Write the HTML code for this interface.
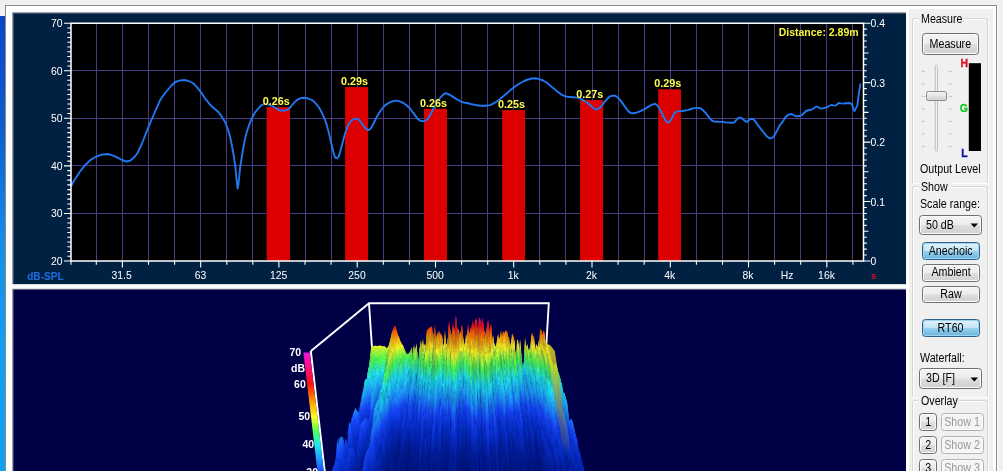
<!DOCTYPE html>
<html><head><meta charset="utf-8"><title>RT60</title>
<style>
html,body{margin:0;padding:0;}
body{width:1003px;height:471px;overflow:hidden;background:#f0f0f0;position:relative;font-family:"Liberation Sans",sans-serif;}
#root{position:absolute;left:0;top:0;width:1003px;height:471px;overflow:hidden;will-change:transform;}
.t{position:absolute;white-space:nowrap;font-size:12px;line-height:12px;color:#000;transform:scaleX(0.89);transform-origin:0 0;}
.btn{position:absolute;box-sizing:border-box;border:1px solid #707070;border-radius:3.5px;background:linear-gradient(#f4f4f4 0%,#ececec 48%,#dedede 52%,#d0d0d0 100%);box-shadow:inset 0 0 0 1px #fbfbfb;text-align:center;font-size:12px;color:#000;}
.btn span{display:inline-block;transform:scaleX(0.89);transform-origin:50% 50%;}
.btn.l span{transform-origin:0 50%;}
.btn.sel{border-color:#2c628b;background:linear-gradient(#e4f3fb 0%,#c4e5f6 48%,#98d1ef 52%,#68b3db 100%);box-shadow:inset 0 0 0 1px #9ed6f0;}
.btn.dis{border-color:#adb2b5;color:#9a9a9a;background:#f4f4f4;box-shadow:inset 0 0 0 1px #fcfcfc;}
.grp{position:absolute;box-sizing:border-box;border:1px solid #d5d5d5;border-radius:3px;box-shadow:inset 1px 1px 0 #fff, 1px 1px 0 #fff;}
.gl{position:absolute;background:#f0f0f0;}
</style></head><body><div id="root">
<svg width="1003" height="471" viewBox="0 0 1003 471" style="position:absolute;left:0;top:0">
<defs>
<linearGradient id="strip" x1="0" y1="0" x2="0" y2="1"><stop offset="0" stop-color="#0b45c6"/><stop offset="0.25" stop-color="#0c5fd2"/><stop offset="0.5" stop-color="#168ee8"/><stop offset="0.72" stop-color="#129ef0"/><stop offset="1" stop-color="#10a2f2"/></linearGradient>
</defs>
<rect x="0" y="0" width="1003" height="471" fill="#f0f0f0"/>
<rect x="0" y="16" width="5.3" height="455" fill="url(#strip)"/>
<rect x="6" y="6" width="990.5" height="470" fill="#ffffff"/>
<rect x="5.5" y="5.5" width="991" height="470" fill="none" stroke="#8a8a8a" stroke-width="1"/>
<rect x="997" y="6" width="1.5" height="470" fill="#fafafa"/>
<rect x="909" y="9" width="84.5" height="470" fill="#f0f0f0"/>
<rect x="12" y="12" width="894" height="273" fill="#b0b3b8"/>
<rect x="12.8" y="12.8" width="893.2" height="272" fill="#566074"/>
<rect x="13.7" y="13.7" width="892.3" height="270.5" fill="#002142"/>
<rect x="12" y="284.2" width="894" height="4.6" fill="#ffffff"/>
<rect x="12" y="284.2" width="894" height="0.6" fill="#d8d8d8"/>
<rect x="12" y="288.6" width="894" height="190" fill="#b0b3b8"/>
<rect x="12.8" y="289.2" width="893.2" height="190" fill="#50507a"/>
<rect x="13.7" y="290" width="892.3" height="190" fill="#000047"/>
<rect x="71.0" y="23.2" width="792.5" height="237.8" fill="#000000"/>
<path d="M96.5 23.2V261.0M122.5 23.2V261.0M148.5 23.2V261.0M174.5 23.2V261.0M200.5 23.2V261.0M226.5 23.2V261.0M252.5 23.2V261.0M278.5 23.2V261.0M305.5 23.2V261.0M331.5 23.2V261.0M357.5 23.2V261.0M383.5 23.2V261.0M409.5 23.2V261.0M435.5 23.2V261.0M461.5 23.2V261.0M487.5 23.2V261.0M513.5 23.2V261.0M539.5 23.2V261.0M565.5 23.2V261.0M592.5 23.2V261.0M618.5 23.2V261.0M644.5 23.2V261.0M670.5 23.2V261.0M696.5 23.2V261.0M722.5 23.2V261.0M748.5 23.2V261.0M774.5 23.2V261.0M800.5 23.2V261.0M826.5 23.2V261.0M852.5 23.2V261.0M71.0 213.5H863.5M71.0 165.5H863.5M71.0 118.5H863.5M71.0 70.5H863.5" stroke="#463c88" stroke-width="1" fill="none"/>
<rect x="266.7" y="107.1" width="23.3" height="153.9" fill="#dc0000"/>
<rect x="345.1" y="87.1" width="23.0" height="173.9" fill="#dc0000"/>
<rect x="424.0" y="108.8" width="23.0" height="152.2" fill="#dc0000"/>
<rect x="502.2" y="110.1" width="22.8" height="150.9" fill="#dc0000"/>
<rect x="580.1" y="100.1" width="23.0" height="160.9" fill="#dc0000"/>
<rect x="658.2" y="89.3" width="22.8" height="171.7" fill="#dc0000"/>
<path d="M71.5 185.5 L73.5 181.5 L76.3 177.2 L80.0 171.5 L85.0 165.2 L90.0 160.4 L95.0 157.2 L101.0 154.8 L107.6 154.0 L112.5 155.3 L117.6 157.7 L122.0 160.0 L126.4 161.5 L130.0 160.7 L134.0 157.6 L137.7 152.7 L142.0 143.5 L147.7 128.9 L154.0 114.0 L160.2 100.0 L164.0 94.3 L167.7 90.0 L171.5 85.5 L175.2 82.0 L179.5 80.6 L184.0 80.0 L188.5 81.0 L192.8 83.0 L196.5 86.7 L200.3 91.3 L205.0 98.3 L210.3 105.0 L214.0 108.3 L217.8 111.4 L221.5 116.2 L225.3 122.6 L228.0 129.5 L230.3 137.7 L232.8 150.0 L235.3 166.0 L236.6 180.0 L237.6 188.5 L238.6 183.0 L240.2 167.0 L242.9 150.0 L244.7 140.5 L246.6 132.6 L249.0 125.2 L251.6 118.9 L254.6 113.3 L257.9 108.8 L261.0 105.6 L264.2 103.8 L268.5 104.5 L272.9 106.3 L276.6 108.8 L280.4 110.6 L284.2 110.6 L288.0 109.6 L291.0 106.5 L294.2 102.6 L297.4 99.8 L300.5 98.1 L304.0 97.8 L307.5 98.3 L311.5 99.8 L315.0 102.6 L319.0 107.5 L322.5 113.9 L326.0 122.5 L328.8 132.6 L331.5 144.0 L333.8 153.9 L335.3 157.6 L336.8 158.4 L338.8 156.4 L340.7 150.0 L342.6 142.7 L345.0 133.8 L347.6 126.4 L350.0 122.3 L352.6 119.6 L355.3 118.6 L358.1 118.9 L361.0 122.3 L363.9 126.4 L366.0 128.9 L368.1 130.1 L369.8 129.5 L371.4 127.6 L374.5 121.5 L377.7 115.1 L381.5 109.5 L385.2 105.1 L390.0 102.2 L395.2 100.6 L399.0 101.1 L402.7 102.6 L406.5 105.3 L410.2 108.8 L414.0 113.9 L417.7 118.9 L420.2 120.7 L422.7 121.4 L425.3 120.6 L427.8 118.9 L431.0 113.5 L434.0 107.6 L437.2 102.3 L440.3 97.6 L443.0 94.8 L445.3 93.3 L447.8 93.8 L450.3 95.1 L455.3 98.4 L460.3 101.3 L465.3 102.8 L470.3 103.8 L475.3 105.0 L480.4 105.8 L485.4 105.8 L490.4 105.1 L495.4 102.4 L500.4 98.8 L505.4 94.5 L510.4 90.1 L515.4 86.3 L520.4 83.0 L524.2 81.0 L528.0 79.5 L531.8 78.5 L535.5 78.3 L539.3 79.1 L543.0 80.5 L547.0 82.8 L552.5 87.6 L557.0 91.3 L561.3 94.6 L564.5 96.0 L567.6 96.8 L572.6 97.2 L577.6 97.6 L581.4 99.1 L585.1 101.3 L588.3 103.7 L591.4 106.3 L593.5 108.1 L595.6 109.3 L597.9 108.9 L600.1 107.6 L602.6 104.6 L605.1 101.3 L607.6 98.5 L610.1 96.3 L612.6 95.6 L615.2 95.8 L617.7 97.5 L620.2 100.1 L623.3 104.4 L626.4 108.8 L628.6 111.4 L630.7 113.1 L633.5 113.2 L636.4 112.6 L639.5 111.5 L642.7 110.1 L646.5 107.9 L650.2 105.6 L652.7 104.4 L655.2 103.8 L657.1 105.2 L659.0 107.6 L661.5 112.5 L664.0 117.6 L666.2 121.2 L668.3 122.6 L669.9 121.5 L671.5 118.9 L673.4 115.0 L675.3 112.1 L677.8 111.4 L680.3 111.1 L684.0 110.7 L687.8 110.1 L691.0 109.0 L694.1 108.1 L697.2 107.9 L700.3 108.1 L702.8 110.0 L705.3 112.6 L707.8 115.7 L710.3 118.9 L712.2 120.7 L714.1 121.6 L718.5 121.8 L722.9 121.9 L726.0 122.4 L729.1 122.6 L731.6 122.8 L734.1 122.6 L736.0 120.4 L737.9 118.4 L739.2 117.7 L740.4 117.6 L741.9 118.4 L743.4 119.6 L745.0 121.2 L746.7 121.9 L748.3 120.8 L749.9 119.4 L751.6 119.0 L753.4 119.1 L755.6 121.8 L757.9 125.1 L761.0 129.2 L764.2 133.1 L766.7 136.2 L769.2 138.2 L771.3 138.3 L773.0 137.2 L774.9 134.7 L778.0 128.9 L779.3 125.8 L783.0 121.4 L785.2 117.5 L788.0 115.0 L791.2 113.9 L793.5 115.0 L795.6 116.3 L798.5 116.0 L801.6 115.4 L804.0 113.0 L806.0 111.0 L809.0 110.0 L812.0 109.5 L814.2 108.0 L816.4 106.5 L818.6 107.5 L820.9 108.6 L823.8 108.1 L826.8 107.4 L829.0 106.0 L831.3 105.0 L833.5 105.4 L835.7 105.6 L837.2 104.2 L838.7 103.0 L841.0 103.4 L843.2 103.6 L846.0 103.2 L849.1 103.0 L850.6 103.5 L852.1 104.4 L853.3 108.0 L854.4 111.0 L855.9 108.5 L857.4 105.0 L858.2 99.0 L858.9 93.2 L859.7 88.5 L860.4 84.2" stroke="#1f78f0" stroke-width="1.9" fill="none" stroke-linejoin="round" stroke-linecap="round"/>
<path d="M71.0 23.2H863.5V261.0H71.0Z" stroke="#ffffff" stroke-width="1.5" fill="none"/>
<path d="M64 261.00H71.0M67.3 256.24H71.0M67.3 251.49H71.0M67.3 246.73H71.0M67.3 241.98H71.0M67.3 237.22H71.0M67.3 232.46H71.0M67.3 227.71H71.0M67.3 222.95H71.0M67.3 218.20H71.0M64 213.44H71.0M67.3 208.68H71.0M67.3 203.93H71.0M67.3 199.17H71.0M67.3 194.42H71.0M67.3 189.66H71.0M67.3 184.90H71.0M67.3 180.15H71.0M67.3 175.39H71.0M67.3 170.64H71.0M64 165.88H71.0M67.3 161.12H71.0M67.3 156.37H71.0M67.3 151.61H71.0M67.3 146.86H71.0M67.3 142.10H71.0M67.3 137.34H71.0M67.3 132.59H71.0M67.3 127.83H71.0M67.3 123.08H71.0M64 118.32H71.0M67.3 113.56H71.0M67.3 108.81H71.0M67.3 104.05H71.0M67.3 99.30H71.0M67.3 94.54H71.0M67.3 89.78H71.0M67.3 85.03H71.0M67.3 80.27H71.0M67.3 75.52H71.0M64 70.76H71.0M67.3 66.00H71.0M67.3 61.25H71.0M67.3 56.49H71.0M67.3 51.74H71.0M67.3 46.98H71.0M67.3 42.22H71.0M67.3 37.47H71.0M67.3 32.71H71.0M67.3 27.96H71.0M64 23.20H71.0M863.5 261.00H870.4M863.5 255.06H866.8M863.5 249.11H866.8M863.5 243.16H866.8M863.5 237.22H866.8M863.5 231.28H868.5M863.5 225.33H866.8M863.5 219.38H866.8M863.5 213.44H866.8M863.5 207.50H866.8M863.5 201.55H870.4M863.5 195.60H866.8M863.5 189.66H866.8M863.5 183.72H866.8M863.5 177.77H866.8M863.5 171.82H868.5M863.5 165.88H866.8M863.5 159.94H866.8M863.5 153.99H866.8M863.5 148.05H866.8M863.5 142.10H870.4M863.5 136.16H866.8M863.5 130.21H866.8M863.5 124.26H866.8M863.5 118.32H866.8M863.5 112.38H868.5M863.5 106.43H866.8M863.5 100.48H866.8M863.5 94.54H866.8M863.5 88.59H866.8M863.5 82.65H870.4M863.5 76.70H866.8M863.5 70.76H866.8M863.5 64.81H866.8M863.5 58.87H866.8M863.5 52.93H868.5M863.5 46.98H866.8M863.5 41.03H866.8M863.5 35.09H866.8M863.5 29.14H866.8M863.5 23.20H870.4M71.0 261.0V264.8M96.3 261.0V264.8M122.4 261.0V267.6M148.5 261.0V264.8M174.6 261.0V264.8M200.7 261.0V267.6M226.8 261.0V264.8M252.8 261.0V264.8M278.9 261.0V267.6M305.0 261.0V264.8M331.1 261.0V264.8M357.2 261.0V267.6M383.3 261.0V264.8M409.4 261.0V264.8M435.5 261.0V267.6M461.6 261.0V264.8M487.7 261.0V264.8M513.7 261.0V267.6M539.8 261.0V264.8M565.9 261.0V264.8M592.0 261.0V267.6M618.1 261.0V264.8M644.2 261.0V264.8M670.3 261.0V267.6M696.4 261.0V264.8M722.5 261.0V264.8M748.5 261.0V267.6M774.6 261.0V264.8M800.7 261.0V264.8M826.8 261.0V267.6M852.9 261.0V264.8" stroke="#ffffff" stroke-width="1.1" fill="none"/>
<g font-family="Liberation Sans, sans-serif" font-size="10.4px" fill="#ffffff">
<text x="62.5" y="264.9" text-anchor="end">20</text>
<text x="62.5" y="217.3" text-anchor="end">30</text>
<text x="62.5" y="169.8" text-anchor="end">40</text>
<text x="62.5" y="122.2" text-anchor="end">50</text>
<text x="62.5" y="74.7" text-anchor="end">60</text>
<text x="62.5" y="27.1" text-anchor="end">70</text>
<text x="870.6" y="264.9">0</text>
<text x="870.6" y="205.5">0.1</text>
<text x="870.6" y="146.0">0.2</text>
<text x="870.6" y="86.5">0.3</text>
<text x="870.6" y="27.1">0.4</text>
<text x="121.6" y="279.2" text-anchor="middle">31.5</text>
<text x="200.5" y="279.2" text-anchor="middle">63</text>
<text x="278.6" y="279.2" text-anchor="middle">125</text>
<text x="357" y="279.2" text-anchor="middle">250</text>
<text x="435.2" y="279.2" text-anchor="middle">500</text>
<text x="513.3" y="279.2" text-anchor="middle">1k</text>
<text x="591.4" y="279.2" text-anchor="middle">2k</text>
<text x="669.8" y="279.2" text-anchor="middle">4k</text>
<text x="748" y="279.2" text-anchor="middle">8k</text>
<text x="787" y="279.2" text-anchor="middle">Hz</text>
<text x="826.5" y="279.2" text-anchor="middle">16k</text>
</g>
<g font-family="Liberation Sans, sans-serif" font-size="10.5px" font-weight="bold">
<text x="27.2" y="279.8" fill="#1f6fe0" font-size="10.1px">dB-SPL</text>
<text x="871" y="278.8" fill="#d81226" font-size="9.8px">s</text>
<text x="858.6" y="36" fill="#f5f53c" text-anchor="end" font-size="10.5px">Distance: 2.89m</text>
<text x="276.3" y="105.2" fill="#ffff55" text-anchor="middle" font-size="10.8px" stroke="#000" stroke-width="0.6" paint-order="stroke">0.26s</text>
<text x="354.5" y="85.2" fill="#ffff55" text-anchor="middle" font-size="10.8px" stroke="#000" stroke-width="0.6" paint-order="stroke">0.29s</text>
<text x="433.6" y="107.2" fill="#ffff55" text-anchor="middle" font-size="10.8px" stroke="#000" stroke-width="0.6" paint-order="stroke">0.26s</text>
<text x="511.4" y="108.3" fill="#ffff55" text-anchor="middle" font-size="10.8px" stroke="#000" stroke-width="0.6" paint-order="stroke">0.25s</text>
<text x="589.8" y="98.2" fill="#ffff55" text-anchor="middle" font-size="10.8px" stroke="#000" stroke-width="0.6" paint-order="stroke">0.27s</text>
<text x="667.8" y="87.2" fill="#ffff55" text-anchor="middle" font-size="10.8px" stroke="#000" stroke-width="0.6" paint-order="stroke">0.29s</text>
</g>
<path d="M311 351L369 303.2H548.8L546.3 345M369 303.2L372 348" stroke="#ffffff" stroke-width="1.9" fill="none" stroke-linejoin="miter"/>
<defs>
<linearGradient id="lv" gradientUnits="userSpaceOnUse" x1="0" y1="0" x2="0" y2="1">
<stop offset="0.0000" stop-color="#c020f0"/>
<stop offset="0.0667" stop-color="#e020e0"/>
<stop offset="0.1333" stop-color="#ff1080"/>
<stop offset="0.2000" stop-color="#ff1010"/>
<stop offset="0.2667" stop-color="#ff9000"/>
<stop offset="0.3333" stop-color="#ffff20"/>
<stop offset="0.4000" stop-color="#50ff50"/>
<stop offset="0.4667" stop-color="#20e8f0"/>
<stop offset="0.5333" stop-color="#20a0ff"/>
<stop offset="0.6000" stop-color="#1848ff"/>
<stop offset="0.6667" stop-color="#0830d0"/>
<stop offset="0.7333" stop-color="#0420a0"/>
<stop offset="0.8400" stop-color="#021478"/>
<stop offset="1.0000" stop-color="#010c60"/>
</linearGradient>
<linearGradient id="g0" href="#lv" y1="292.4" y2="451.8"/>
<linearGradient id="g1" href="#lv" y1="292.5" y2="452.1"/>
<linearGradient id="g2" href="#lv" y1="292.6" y2="452.6"/>
<linearGradient id="g3" href="#lv" y1="292.7" y2="453.2"/>
<linearGradient id="g4" href="#lv" y1="292.9" y2="453.7"/>
<linearGradient id="g5" href="#lv" y1="293.0" y2="454.3"/>
<linearGradient id="g6" href="#lv" y1="293.2" y2="454.9"/>
<linearGradient id="g7" href="#lv" y1="293.4" y2="455.5"/>
<linearGradient id="g8" href="#lv" y1="293.5" y2="456.2"/>
<linearGradient id="g9" href="#lv" y1="293.7" y2="456.8"/>
<linearGradient id="g10" href="#lv" y1="293.9" y2="457.5"/>
<linearGradient id="g11" href="#lv" y1="294.1" y2="458.2"/>
<linearGradient id="g12" href="#lv" y1="294.3" y2="458.9"/>
<linearGradient id="g13" href="#lv" y1="294.4" y2="459.6"/>
<linearGradient id="g14" href="#lv" y1="294.6" y2="460.3"/>
<linearGradient id="g15" href="#lv" y1="294.8" y2="461.0"/>
<linearGradient id="g16" href="#lv" y1="295.0" y2="461.8"/>
<linearGradient id="g17" href="#lv" y1="295.2" y2="462.5"/>
<linearGradient id="g18" href="#lv" y1="295.4" y2="463.3"/>
<linearGradient id="g19" href="#lv" y1="295.6" y2="464.1"/>
<linearGradient id="g20" href="#lv" y1="295.8" y2="464.9"/>
<linearGradient id="g21" href="#lv" y1="296.1" y2="465.7"/>
<linearGradient id="g22" href="#lv" y1="296.3" y2="466.5"/>
<linearGradient id="g23" href="#lv" y1="296.5" y2="467.3"/>
<linearGradient id="g24" href="#lv" y1="296.7" y2="468.2"/>
<linearGradient id="g25" href="#lv" y1="296.9" y2="469.0"/>
<linearGradient id="g26" href="#lv" y1="297.2" y2="469.9"/>
<linearGradient id="g27" href="#lv" y1="297.4" y2="470.8"/>
<linearGradient id="g28" href="#lv" y1="297.6" y2="471.6"/>
<linearGradient id="g29" href="#lv" y1="297.9" y2="472.5"/>
<linearGradient id="g30" href="#lv" y1="298.1" y2="473.5"/>
<linearGradient id="g31" href="#lv" y1="298.4" y2="474.4"/>
<linearGradient id="g32" href="#lv" y1="298.6" y2="475.3"/>
<linearGradient id="g33" href="#lv" y1="298.9" y2="476.3"/>
<linearGradient id="g34" href="#lv" y1="299.1" y2="477.2"/>
<linearGradient id="g35" href="#lv" y1="299.4" y2="478.2"/>
<linearGradient id="g36" href="#lv" y1="299.6" y2="479.2"/>
<linearGradient id="g37" href="#lv" y1="299.9" y2="480.2"/>
<linearGradient id="g38" href="#lv" y1="300.2" y2="481.2"/>
<linearGradient id="g39" href="#lv" y1="300.4" y2="482.2"/>
<linearGradient id="g40" href="#lv" y1="300.7" y2="483.2"/>
<linearGradient id="g41" href="#lv" y1="301.0" y2="484.2"/>
<linearGradient id="g42" href="#lv" y1="301.3" y2="485.3"/>
<linearGradient id="g43" href="#lv" y1="301.5" y2="486.4"/>
<linearGradient id="g44" href="#lv" y1="301.8" y2="487.4"/>
<linearGradient id="g45" href="#lv" y1="302.1" y2="488.5"/>
<linearGradient id="g46" href="#lv" y1="302.4" y2="489.6"/>
<linearGradient id="g47" href="#lv" y1="302.7" y2="490.8"/>
<linearGradient id="g48" href="#lv" y1="303.0" y2="491.9"/>
<linearGradient id="g49" href="#lv" y1="303.3" y2="493.0"/>
<linearGradient id="g50" href="#lv" y1="303.6" y2="494.2"/>
<linearGradient id="g51" href="#lv" y1="303.9" y2="495.4"/>
<linearGradient id="g52" href="#lv" y1="304.2" y2="496.6"/>
<linearGradient id="g53" href="#lv" y1="304.6" y2="497.8"/>
<linearGradient id="g54" href="#lv" y1="304.9" y2="499.0"/>
<linearGradient id="g55" href="#lv" y1="305.2" y2="500.2"/>
<linearGradient id="g56" href="#lv" y1="305.5" y2="501.5"/>
<linearGradient id="g57" href="#lv" y1="305.9" y2="502.7"/>
<linearGradient id="g58" href="#lv" y1="306.2" y2="504.0"/>
<linearGradient id="g59" href="#lv" y1="306.6" y2="505.3"/>
<linearGradient id="g60" href="#lv" y1="306.9" y2="506.6"/>
<linearGradient id="g61" href="#lv" y1="307.2" y2="507.9"/>
<linearGradient id="g62" href="#lv" y1="307.6" y2="509.3"/>
<linearGradient id="g63" href="#lv" y1="308.0" y2="510.6"/>
<linearGradient id="g64" href="#lv" y1="308.3" y2="512.0"/>
<linearGradient id="g65" href="#lv" y1="308.7" y2="513.4"/>
<linearGradient id="g66" href="#lv" y1="309.1" y2="514.8"/>
<linearGradient id="g67" href="#lv" y1="309.4" y2="516.2"/>
<linearGradient id="g68" href="#lv" y1="309.8" y2="517.7"/>
<linearGradient id="g69" href="#lv" y1="310.2" y2="519.2"/>
<linearGradient id="g70" href="#lv" y1="310.6" y2="520.6"/>
<linearGradient id="g71" href="#lv" y1="311.0" y2="522.1"/>
<linearGradient id="g72" href="#lv" y1="311.4" y2="523.7"/>
<linearGradient id="g73" href="#lv" y1="311.8" y2="525.2"/>
<linearGradient id="g74" href="#lv" y1="312.2" y2="526.8"/>
<linearGradient id="g75" href="#lv" y1="312.6" y2="528.3"/>
<linearGradient id="g76" href="#lv" y1="313.1" y2="529.9"/>
<linearGradient id="g77" href="#lv" y1="313.5" y2="531.6"/>
<linearGradient id="g78" href="#lv" y1="313.9" y2="533.2"/>
<linearGradient id="g79" href="#lv" y1="314.4" y2="534.9"/>
<linearGradient id="g80" href="#lv" y1="314.8" y2="536.5"/>
<linearGradient id="g81" href="#lv" y1="315.3" y2="538.3"/>
<linearGradient id="g82" href="#lv" y1="315.7" y2="540.0"/>
<linearGradient id="g83" href="#lv" y1="316.2" y2="541.7"/>
<linearGradient id="g84" href="#lv" y1="316.7" y2="543.5"/>
<linearGradient id="g85" href="#lv" y1="317.1" y2="545.3"/>
<linearGradient id="g86" href="#lv" y1="317.6" y2="547.1"/>
<linearGradient id="g87" href="#lv" y1="318.1" y2="549.0"/>
<linearGradient id="g88" href="#lv" y1="318.6" y2="550.9"/>
<linearGradient id="g89" href="#lv" y1="319.1" y2="552.8"/>
<linearGradient id="g90" href="#lv" y1="319.6" y2="554.7"/>
<linearGradient id="g91" href="#lv" y1="320.1" y2="556.6"/>
<linearGradient id="g92" href="#lv" y1="320.7" y2="558.6"/>
<linearGradient id="g93" href="#lv" y1="321.2" y2="560.6"/>
<linearGradient id="g94" href="#lv" y1="321.7" y2="562.7"/>
<linearGradient id="g95" href="#lv" y1="322.3" y2="564.7"/>
<linearGradient id="g96" href="#lv" y1="322.8" y2="566.8"/>
<linearGradient id="g97" href="#lv" y1="323.4" y2="569.0"/>
<linearGradient id="g98" href="#lv" y1="324.0" y2="571.1"/>
<linearGradient id="g99" href="#lv" y1="324.5" y2="573.3"/>
<linearGradient id="g100" href="#lv" y1="325.1" y2="575.5"/>
<linearGradient id="g101" href="#lv" y1="325.7" y2="577.8"/>
<linearGradient id="g102" href="#lv" y1="326.3" y2="580.1"/>
<linearGradient id="g103" href="#lv" y1="327.0" y2="582.4"/>
<linearGradient id="g104" href="#lv" y1="327.6" y2="584.7"/>
</defs>
<g stroke="#000850" stroke-opacity="0.11" stroke-width="0.7" stroke-linejoin="round">
<path fill="url(#g0)" transform="translate(459) scale(1.0000 1)" d="M-88 480V346.8l 1-.1 1-.4 1-.4 1-.3 1 .2 1 .3 1 0 1-.6 1 0 1 .3 1 .2 1 .2 1 .1 1 0 1 1.5 1 0 1-.7 1-2.6 1-3.9 1-4.1 1-4.5 1-2.6 1-2.3 1-2 1 3.1 1 2.2 1 4.6 1 1.4 1 3.8 1 1.8 1 2.4 1 .6 1 2.8 1 2.3 1 2.7 1 1.5 1-.7 1-.4 1-1.7 1-2.1 1-2.4 1 16 1-19.2 1 7.6 1 6.1 1-7.9 1 16.6 1-8.9 1-6.1 1-11.4 1 12.7 1-13 1 11.7 1-5 1 .3 1-16.8 1 .1 1-2.2 1 0 1-.8 1 .3 1 10.7 1-3.8 1-10.5 1 17.8 1-8.2 1 1 1-3.6 1 13.3 1-6.5 1-3 1 14.1 1-5.1 1-12.4 1 13.3 1-.1 1-3.3 1-19 1 8 1 5.6 1-.6 1-6.1 1 3.1 1-.3 1-10.8 1 9.9 1-1.2 1 .6 1 5.7 1-2.2 1-10.3 1 13 1 7.7 1 2.9 1-13.9 1 3.1 1-5.8 1 3.1 1-1.6 1-.8 1-4.1 1-7.4 1 9.7 1-.4 1-11.1 1 5 1 15 1-21.2 1 7.6 1 7.9 1-13.8 1 6.5 1 4.9 1 2.4 1 3.1 1 2.4 1-17.7 1 11.5 1-4.9 1-3 1 19.4 1-8.1 1 8.4 1 3.1 1-.2 1-6.1 1-6 1 10.2 1-7.1 1-5.4 1 5.3 1-6.2 1 3.2 1-.8 1-3 1 2.9 1 4.8 1-1.6 1 11.4 1-4.4 1-9.9 1 2.1 1 2.4 1 12.7 1 10.1 1-20.5 1-.4 1 15.8 1-16.5 1 11.5 1 21.5 1-5 1-5.9 1-24 1 12 1-2.4 1 4.2 1-3.5 1 3.1 1-10.1 1-8 1 4.1 1 13.2 1 1.5 1-7.5 1 2.3 1 .6 1 4.5 1-22.7 1 1.4 1 15.2 1-13.4 1-.5 1 30.2 1-10.6 1-.8 1-6.5 1 20.8V480z"/>
<path fill="url(#g1)" transform="translate(459) scale(1.0018 1)" d="M-88 480V348.5l 1-.4 1-.7 1-.5 1-.2 1 .2 1 .8 1 1 1-.7 1 .4 1-1.1 1 0 1-.1 1-.1 1 .1 1 1.4 1 .4 1-.4 1-2.6 1-4.2 1-4.3 1-4.6 1-2.7 1-2.1 1-1.4 1 2.4 1 3.1 1 4 1 1.1 1 3.2 1 2 1 2.1 1 .7 1 3.4 1 2.4 1 2.4 1 1.4 1-.5 1 .2 1-1.8 1-2.1 1-1 1 10.4 1-14.7 1 9.5 1-7.3 1 .6 1 16.7 1-7.7 1-4.4 1-11.7 1 10.1 1-13.3 1 11.5 1-3.1 1 1.8 1-17.7 1-1 1-1.1 1 .8 1-.5 1-3.2 1 10.9 1-4.4 1-5.6 1 15.1 1-6.3 1 0 1 6.5 1 7.8 1-12.4 1-2.6 1 11.4 1-1.9 1-14.6 1 18.4 1-3.7 1-4.2 1-15.8 1 5 1 7.1 1-3.5 1-10.9 1 9.4 1-3.8 1-12.3 1 13.3 1 4.2 1 4.4 1-2.4 1-2.3 1-8.2 1 11.5 1 10.9 1 .8 1-11.2 1-.1 1-7.2 1 4.2 1-1.4 1-3.3 1 1.1 1-7.8 1 10.4 1-6.2 1-7.3 1 4.2 1 15.1 1-20.6 1 1.7 1 13.7 1-14.8 1 14.8 1 1.3 1 .6 1-2.2 1-6.8 1-6 1 11.9 1-3.1 1-4.2 1 21 1-10 1 7.7 1 4.4 1-1.6 1-1.1 1-11.2 1 8.1 1-4.9 1-6.6 1 21.4 1-15.8 1-1.9 1-2.3 1-.5 1 .8 1 5.3 1 3.5 1 6.1 1-4 1-5.8 1 2 1-.2 1 15.6 1 13.3 1-26.6 1-.3 1 15.8 1-16.6 1 10.7 1 23.9 1-7.3 1-5.3 1-23.7 1 11 1-4.6 1 5.7 1 2.3 1 2.1 1-17.2 1-4 1 4.4 1 14.4 1 2.3 1-7.5 1-.4 1 .4 1 8.9 1-26.8 1 3.6 1 13 1-14 1 0 1 26 1-9.7 1-1.2 1 .6 1 12.1V480z"/>
<path fill="url(#g2)" transform="translate(459) scale(1.0041 1)" d="M-88 480V350.4l 1-.6 1-1.1 1-.7 1-.4 1 .2 1 .4 1 .1 1 .1 1 0 1 0 1 .1 1-.2 1 0 1 .2 1 1.1 1 .5 1-.3 1-2.3 1-4 1-4.6 1-5 1-3.4 1-2.2 1-2.1 1 4.6 1 2.9 1 4.1 1 1 1 3.3 1 2 1 2 1 .7 1 3.4 1 2.4 1 2.4 1 .6 1-.7 1 .1 1 1 1-4 1-.6 1 7.4 1-11.7 1 7.2 1 4.4 1-10.5 1 15 1-.2 1-11.3 1-11.7 1 13.6 1-12.4 1 8.4 1-5.5 1 3.3 1-16.1 1-1.1 1-1 1 4.7 1 12 1-16.2 1 11 1-6 1-4.4 1 10.8 1-6 1 .4 1 3.6 1-2 1 1.8 1-3 1 18.2 1-7.1 1-13.2 1 11.7 1-2.4 1-4.5 1-15.6 1 4.6 1 9.7 1-3.7 1-7.4 1 5.3 1-3.8 1-10.2 1 10.5 1-1.1 1 11.4 1-4.9 1-3.1 1-5.4 1 12.6 1 6.5 1 1.6 1-9 1 .7 1-9.4 1 3.3 1 3.7 1-11 1 5.8 1-8.8 1 9 1-7.4 1-3.2 1 5.6 1 16.3 1-23.2 1 .9 1 23.9 1-26.1 1 14.8 1 3.9 1-.7 1-1.8 1-7.3 1-5.4 1 11.3 1-.5 1-6.1 1 22.3 1-6 1 2.1 1 4 1 1.7 1-8.4 1-6.1 1 4.5 1-2.6 1-1.4 1 15.6 1-15.1 1-.3 1-2 1-1.6 1 .3 1 5.2 1 10.1 1 1.4 1-1.2 1-5.7 1 .1 1-2.2 1 13.5 1 9.4 1-20.9 1 2.3 1 18.6 1-19.6 1 12.6 1 24.4 1-12.8 1-5.1 1-23.5 1 8.9 1-3.4 1 6.5 1 1.9 1 3.6 1-15.5 1-5.5 1 1.5 1 16.9 1 5 1-7.9 1-.6 1-2.2 1 7.4 1-25.6 1 1.4 1 15.3 1-15.3 1 1.2 1 24.7 1-4.7 1-6.6 1 8.5 1 2.8V480z"/>
<path fill="url(#g3)" transform="translate(459) scale(1.0065 1)" d="M-88 480V352.8l 1-1 1-1.6 1-.9 1-.6 1 .1 1 .3 1 .2 1 .3 1 .3 1 0 1-.2 1-.4 1-.1 1 .5 1 1.7 1 1 1-.3 1-2.8 1-4.5 1-4.9 1-5 1-3.3 1-2.3 1-.9 1 3.8 1 4.6 1 3.7 1 .7 1 3.1 1 2 1 1.6 1 .3 1 3.1 1 2.5 1 2.9 1 1.1 1-.7 1-.6 1-1.8 1-2.6 1-2.5 1 7.1 1-11.3 1 10.7 1-6 1-1.7 1 10.4 1-1.5 1-5.5 1-10.4 1 13.1 1-8.6 1 5.5 1-5.4 1 .7 1-14 1-1.5 1-1.1 1 6.5 1 5.9 1-10.6 1 9.9 1-7.3 1-5 1 13.1 1-4.5 1-4.6 1 3.2 1-3.9 1 5.5 1-3.2 1 20.6 1-7.1 1-9.2 1 6.9 1-1.5 1-5.7 1-17.9 1 5.4 1 11.5 1-.9 1-12.9 1 7.6 1-2.4 1-13.1 1 12.2 1-.4 1 8.6 1 1.4 1-4.7 1-7 1 12.8 1 2.7 1 3.8 1-9 1 2.6 1-11 1 3.1 1 1.6 1-6.1 1 6.7 1-9.1 1 6.2 1-7.4 1-3.1 1 1.7 1 19.8 1-22.8 1 0 1 10.6 1-12 1 19.4 1 .2 1-1.5 1-4.3 1-5.8 1-4.4 1 10.1 1-3.1 1-2.3 1 19.1 1-.5 1 2.7 1 4.1 1-2.2 1-5.7 1-1.5 1 2.1 1-9.2 1-.9 1 8.9 1-7.5 1 .8 1-1.5 1-2.1 1 .4 1 6.4 1 13.7 1-.2 1-1.6 1-11.6 1-1.3 1 2 1 17.6 1 6.4 1-21.7 1 .4 1 19.2 1-17.7 1 15.8 1 23.6 1-14.6 1-7 1-22.9 1 13.4 1-4.8 1 3.9 1-.1 1 4.5 1-13.7 1-6.1 1-.9 1 18.7 1 6.8 1-7.8 1-3.5 1-3.2 1 6 1-22.4 1 .3 1 16.6 1-14.6 1 .3 1 23 1-5.7 1 1 1 6.6 1 3.1V480z"/>
<path fill="url(#g4)" transform="translate(459) scale(1.0091 1)" d="M-88 480V354.6l 1-1.3 1-2 1-1 1-.6 1 .3 1 1 1 .1 1 .1 1-.1 1-.3 1-.6 1-.5 1 0 1 .9 1 1.7 1 1.7 1 .2 1-2.7 1-4.6 1-4.9 1-5 1-3 1-3.2 1-2.1 1 5.5 1 5.3 1 3.6 1-.4 1 2.7 1 2.4 1 1.7 1 .9 1 3.3 1 3.1 1 1.9 1 .6 1-1 1 .6 1-4 1-1.2 1-3.7 1 11.6 1-11.5 1 3.7 1-3.5 1-6.3 1 16.9 1-1.5 1-8.5 1-9.8 1 12.7 1-5.7 1 4.6 1-8.6 1 6.6 1-10.8 1-7.7 1-1.1 1 2.6 1 14.4 1-13.8 1 9.7 1-3.4 1-11.6 1 15.4 1-5 1-8 1 4 1-3.6 1 7.3 1-4.6 1 11.1 1 1.3 1-4.9 1 4.4 1 .4 1-8.6 1-12.3 1 2 1 10.1 1-.8 1-12.1 1 9.2 1-1.6 1-13.7 1 15.3 1-1.8 1 7.4 1-.1 1-5.1 1-7.7 1 10.2 1 5.9 1 3.5 1-6.7 1 1 1-17.3 1 8.7 1 1.9 1-2.4 1 1.2 1-6.7 1 6.9 1-14.2 1 2.3 1 5.6 1 16.7 1-23.5 1-.4 1 23.4 1-24.5 1 4.2 1 17.6 1 .9 1-5.4 1-10.4 1-3.2 1 12.2 1-3.7 1-3.9 1 18.1 1 .3 1 6.9 1 .2 1-5.2 1 3.1 1-7.6 1-.2 1-7.8 1 4.1 1 6 1-6.7 1 .1 1-.3 1-4.3 1 .3 1 7.9 1 2.7 1 9.3 1-.3 1-11.3 1-3.8 1 4.6 1 27 1-4.2 1-22.1 1 .5 1 14.5 1-8.8 1 10.5 1 23.6 1-13.8 1-3.9 1-26 1 12.1 1-1.2 1 2.4 1-.9 1 6.1 1-13.1 1-7.7 1 1 1 21.1 1 5.8 1-13.4 1-4.2 1-2.3 1 6.8 1-21.8 1 .2 1 16.1 1-11.7 1-1 1 24.4 1-8 1 4.6 1 3 1-.1V480z"/>
<path fill="url(#g5)" transform="translate(459) scale(1.0117 1)" d="M-88 480V357.5l 1-1.7 1-2.7 1-1.5 1-1 1 .2 1 1.2 1 .5 1-.3 1 0 1-.2 1-.4 1-.4 1 0 1 .9 1 1.8 1 1.9 1 .6 1-2.3 1-4.4 1-4.7 1-5 1-3 1-2.7 1-.5 1 3.2 1 3.9 1 2.7 1-.1 1 2.7 1 2.6 1 1.4 1 .9 1 3.2 1 2.6 1 2.5 1 .9 1-.6 1 1.1 1-3.8 1-1.4 1-5.5 1 15.4 1-16.8 1 4.5 1-3.8 1-6.4 1 16.6 1 6.2 1-14.2 1-9.3 1 9.9 1-2.4 1 3.3 1-9.8 1 8.1 1-2 1-14.5 1-2.7 1 6.9 1 9.5 1-15 1 9.8 1-2.3 1-11.1 1 16.3 1-3.6 1-8.4 1 .8 1-4.5 1 4.5 1 .9 1 12.1 1 .3 1-6.8 1 11.2 1-7.7 1-6.9 1-11.1 1 1.5 1 9.8 1-1 1-8.3 1 7.6 1-1.1 1-17.1 1 13 1 1.1 1 9.4 1 .1 1-7.1 1-6.8 1 11 1 5.1 1 3.2 1-8.9 1-3.1 1-11.9 1 10 1 4.4 1-3.4 1-.6 1-6.3 1 6.4 1-11.3 1-.4 1 10.4 1 14.8 1-26.4 1-.4 1 18.6 1-19.7 1 4.1 1 17.2 1-1.2 1-4.1 1-9.5 1-2.9 1 10.7 1-.1 1-5.1 1 15.8 1 1.6 1 6.6 1-1.4 1-5 1 1.8 1-1.1 1-3.9 1-3.8 1 .1 1 5 1-3 1-1 1 2.4 1-8.2 1 .3 1 11.1 1 1.1 1 4.8 1 1.3 1-9.7 1-5.8 1 11.9 1 14.3 1 2.5 1-21.8 1-.4 1 19 1-11.3 1 10.8 1 18.8 1-1.2 1-11.6 1-25.8 1 11.4 1 10.5 1-11.7 1-.4 1 7.1 1-17.2 1-4 1 2.9 1 21.8 1 4 1-16.8 1-3.5 1-4.1 1 6.8 1-18 1 .2 1 16.5 1-11.6 1 2.4 1 20.1 1-5.4 1 5.4 1-.9 1-.5V480z"/>
<path fill="url(#g6)" transform="translate(459) scale(1.0145 1)" d="M-88 480V359.6l 1-2.5 1-3.6 1-1.9 1-.3 1 0 1 1.2 1 1.4 1-.1 1-.2 1-.1 1-.6 1-.6 1 0 1 .8 1 1.5 1 1.9 1 .6 1-2 1-3.9 1-4.2 1-4.4 1-4.1 1-3 1-.7 1 3.6 1 4.3 1 2.7 1 .9 1 2.4 1 2.5 1 1.4 1 1.5 1 1.6 1 3.3 1 2.4 1 .7 1-1.4 1 1.1 1-3.1 1-2.3 1-5.1 1 14.2 1-13.9 1 5.2 1-1.5 1-11.5 1 18 1-2.6 1-9.5 1-7.4 1 11.3 1-3 1 1.4 1-4.3 1 5.3 1-15 1-2.8 1-1.9 1 3.2 1 5.4 1-10.6 1 12.6 1 .4 1-15.1 1 15.9 1-2.9 1-8.5 1 6.7 1-8.7 1 5.1 1 4.4 1 8.6 1-.3 1-1.8 1 4.6 1-8.3 1-4.8 1-10.8 1 5.6 1 5.3 1-2.8 1-9.2 1 4.2 1-4.8 1-11.5 1 13.6 1 2.8 1 10.2 1 3.2 1-6 1-9.6 1 13 1 4.4 1-.2 1-4.3 1 .1 1-13.8 1 8.5 1-2.3 1 1 1-2.6 1 .6 1 3.8 1-8.9 1-5.1 1 8 1 21.5 1-26.9 1-4.3 1 22.9 1-23.9 1 2.8 1 20.3 1-3.2 1-3.7 1-12.2 1-.4 1 17.1 1-9.2 1-3.3 1 20.3 1-1.4 1 7.7 1-5.2 1-2.2 1 0 1 .9 1-.3 1-3.3 1-5 1 7.7 1-1.6 1-4.4 1 1.7 1-8.2 1 .3 1 15.3 1-4.3 1 2.1 1 5 1-8.1 1-7.2 1 7.7 1 15.9 1 7.3 1-23.9 1-.4 1 15.1 1-9.4 1 8.8 1 22.4 1-5 1-4.6 1-25.7 1 8.1 1 2.7 1-5.4 1 3.3 1 6.3 1-17.8 1-3.6 1 2.6 1 18.5 1 3.5 1-10.3 1-8.6 1-3.3 1 6.5 1-17 1 .2 1 15 1-1.8 1-6.9 1 23 1-8.1 1 9.4 1-3.7 1-.6V480z"/>
<path fill="url(#g7)" transform="translate(459) scale(1.0174 1)" d="M-88 480V361.6l 1-2.8 1-4.1 1-2.2 1-.1 1 0 1 .6 1 1.9 1 .7 1-.7 1-.1 1-.3 1-.3 1 .1 1 .5 1 .7 1 .9 1 .1 1-1.9 1-3.3 1-3.7 1-3.7 1-3.3 1-2.8 1-2 1 4.6 1 4.1 1 2.8 1 1 1 2.7 1 2.8 1 .3 1-.1 1 2.3 1 3.7 1 2.7 1 .5 1-1.1 1 1.5 1-3.8 1-.9 1-3.2 1 9.6 1-10.2 1 4.9 1-3.3 1-11.3 1 18.8 1-2.2 1-7.4 1-9.8 1 13.1 1-8.2 1 5.9 1-.8 1 2.3 1-18.6 1 .7 1-4.8 1 10.4 1 8.7 1-18.6 1 12.6 1-2.4 1-14.7 1 15.1 1-7.7 1-1.2 1-.1 1-3.6 1 1.9 1 6.8 1 14.5 1-4.3 1-5.1 1 6.7 1-4.9 1-6.5 1-13 1 3.6 1 8.9 1-3.6 1-3.1 1 8.2 1-8.3 1-18.6 1 12.2 1 5.2 1 9.8 1 1.9 1-4.3 1-10.3 1 13.1 1 3 1 1.6 1-5.9 1-.2 1-9.6 1 6.9 1-4.2 1 2.2 1-1.6 1-1.4 1 4.7 1-8.6 1-5.8 1 10.3 1 17.2 1-25.8 1-3.4 1 4.3 1-5.4 1 1.8 1 20.7 1-7.8 1 .8 1-10.9 1-1 1 16.4 1-7.9 1-3.8 1 15 1 3 1 7.5 1-2.4 1-3.1 1-.2 1-3.4 1 9.1 1-10.5 1-3.6 1 4.2 1 3 1-3.4 1 1.9 1-10.5 1 .4 1 14.3 1-5.7 1 5.3 1 1.8 1-9.1 1-3.6 1 9.1 1 14.5 1 2.9 1-19.8 1-.4 1 15.8 1-10.4 1 11.1 1 18.3 1-1 1-6.2 1-26.4 1 8.9 1-2.9 1 2.8 1 .1 1 3.8 1-14.8 1-4 1-3.9 1 25.3 1-1.8 1-8.6 1-4.2 1-.6 1 1.1 1-15.5 1 .2 1 14.1 1-3.3 1-5.3 1 25.1 1-10.9 1 10.6 1-1.6 1-.2V480z"/>
<path fill="url(#g8)" transform="translate(459) scale(1.0203 1)" d="M-88 480V364.3l 1-2.8 1-4.2 1-2.2 1-1.4 1 .4 1 2.7 1 2.9 1-1.5 1-1.7 1-.4 1-.5 1-.4 1-.1 1 .1 1-.4 1 1.2 1 1.5 1-2.6 1-2.4 1-3 1-3.5 1-3.4 1-3.1 1-2.5 1 4.1 1 4.7 1 4.1 1 1.1 1 2 1 2.4 1-.2 1-.2 1 3.2 1 4.1 1 2.7 1 .2 1-1.8 1 .6 1-3.7 1 0 1-1.5 1 5.4 1-7.4 1 2.9 1-9 1-4.6 1 20.6 1-4.4 1-7.2 1-10.4 1 15.3 1-11.3 1 6.6 1-.2 1 1 1-18.3 1 3.7 1-5.9 1 21 1-5.8 1-12.9 1 11.5 1-7.2 1-10.6 1 20.4 1-11.7 1-.6 1-1.3 1-4.3 1 2 1 6.1 1 16.1 1-6.8 1-4 1 4 1-2.3 1-6.9 1-10 1-.7 1 10.1 1-1.9 1-5.8 1 12.5 1-10 1-18.7 1 14 1 1.3 1 12.3 1 2.6 1-3.9 1-11.5 1 17.7 1-1.9 1-2.2 1 .5 1 .1 1-9.5 1 2.9 1-2.6 1-.9 1 .4 1 0 1 5.6 1-12.3 1-4.4 1 9.4 1 14.3 1-25 1-.4 1 4.3 1-5.4 1 1.8 1 20.6 1-11.3 1 1.9 1-7.9 1-1.5 1 10.3 1-4.2 1-1.4 1 7.1 1 11.6 1 5.8 1-3.3 1-2.1 1 3.2 1-8.5 1 5.9 1-4.9 1-2.6 1 2.5 1 4.7 1-3.4 1-.6 1-8.8 1 .4 1 13.5 1-8.6 1 9.9 1-.9 1-4.4 1-1.8 1 3.7 1 15.7 1 3.8 1-15.8 1-5.8 1 16.7 1-8.5 1 8.9 1 20 1-4.2 1-4.1 1-29.6 1 11 1-9.2 1 8.3 1-.3 1 1 1-8.8 1-8.3 1 .3 1 21.4 1 .4 1-12.7 1-9.8 1 5.3 1 3.1 1-14.4 1 .2 1 8.7 1 3.1 1-3.3 1 17.8 1-7.1 1 5.3 1 3.1 1-.1V480z"/>
<path fill="url(#g9)" transform="translate(459) scale(1.0233 1)" d="M-88 480V366.4l 1-3 1-4.6 1-2.3 1-1.7 1 .2 1 1.6 1 2.7 1 1.6 1-3.2 1 0 1-.3 1-.4 1-.1 1 0 1-.2 1 1.4 1 .8 1-2.2 1-2.5 1-2.9 1-3.3 1-3.1 1-2.1 1-2.5 1 4.9 1 5 1 3.5 1 .6 1 .2 1 2.5 1-1.6 1 .7 1 2.8 1 5.1 1 3.3 1 .6 1-2.2 1-.2 1-3.8 1-.8 1-4.7 1 6.7 1-.3 1-1.4 1-8.6 1-2.2 1 24.3 1-6.4 1-11.1 1-11.3 1 13.9 1-11 1 7.8 1-2.8 1 1.7 1-16.5 1 4.2 1-6.4 1 18.5 1-8.2 1-6.5 1 13 1-5 1-15.8 1 23.3 1-14.2 1-1.8 1-3.4 1-.5 1 5.9 1 .2 1 16.3 1-6.1 1-4 1-.3 1 1.6 1-4.7 1-11.1 1-2.4 1 10.1 1-1.7 1-5.8 1 6.6 1-3.6 1-18.6 1 12.7 1 3.2 1 12.2 1 2.1 1-3.1 1-7.6 1 13.7 1-5 1 1.1 1 1 1-2.4 1-4.9 1 1.3 1-4.8 1-2.1 1 .1 1 1.2 1 6.3 1-14.7 1-1.6 1 7.9 1 15.7 1-21.3 1-4.1 1 5.7 1-6.7 1 .2 1 19 1-11.9 1 10.8 1-15.7 1 1.2 1 9.2 1-4.7 1 .2 1 15.2 1 4.7 1 2.3 1-5.6 1 1.5 1 5.8 1-8.8 1 4.1 1-4.5 1 1.9 1 .8 1 .7 1 2.7 1-1.1 1-13.1 1 .3 1 13.2 1-10.2 1 10.6 1-1.1 1-1.8 1-2.6 1 5.2 1 13.9 1 2 1-14.7 1-3.9 1 17.8 1-14.6 1 15.9 1 16.9 1-8.7 1 .7 1-28.6 1 8.9 1-2.1 1 4.2 1 3 1 .2 1-10.7 1-7.5 1-3.7 1 17.4 1 0 1-12.5 1-6.2 1 6.7 1-.2 1-12 1 .5 1 8.9 1 4 1-4.2 1 19.1 1-9.3 1-2.9 1 12.2 1-1.7V480z"/>
<path fill="url(#g10)" transform="translate(459) scale(1.0264 1)" d="M-88 480V368.3l 1-3.3 1-5 1-2.6 1-1.7 1 .4 1 2.6 1 3.5 1-1.8 1-2.1 1-.4 1-.3 1 .2 1 .3 1 .6 1 .2 1 1.2 1 .4 1-2.7 1-3.1 1-3.2 1-3.3 1-2.4 1-1.5 1-2.8 1 5.6 1 3.9 1 2.4 1 .4 1 1.7 1 4.6 1-1.1 1-.7 1 1.8 1 4.6 1 4 1-.1 1-1.6 1-1.4 1-4.2 1-1.7 1-4.2 1 9.7 1-1.1 1-1.9 1-7 1-1.8 1 23.8 1-8.9 1-10.5 1-10.7 1 15.6 1-9.3 1 6.6 1-5.1 1 2.3 1-17 1 6.4 1-8.5 1 13.6 1-.9 1-4.1 1 5.8 1-2.6 1-15.8 1 18.7 1-15.1 1 3 1-3.9 1-.2 1 7.3 1-3.4 1 16.6 1-2.1 1-2.6 1-1 1-.7 1-6 1-15.2 1 5.1 1 8.3 1-.3 1-11.9 1 14.3 1-7.7 1-17.4 1 12.4 1 1.7 1 14.4 1-.3 1-1.6 1-8.4 1 14 1-6.4 1 1.8 1 4.3 1-3.7 1-7.1 1 3.2 1-6.3 1-3.7 1 2.5 1 2.5 1 1.9 1-11.1 1-1.4 1 9 1 11.4 1-21.8 1-.4 1 7.5 1-8.6 1 3.8 1 13.6 1-9.9 1 16.6 1-20.8 1 .3 1 14.1 1-5.7 1-3.7 1 19.1 1 4.4 1-.6 1-5.9 1 3.5 1-3.9 1-2.7 1 12.3 1-13 1 0 1 .7 1 4.6 1 .2 1 .4 1-12.5 1 .4 1 11.5 1-7 1 11.8 1 2.8 1-9.7 1 2.7 1 7.1 1 8.4 1 .4 1-12.3 1-4.9 1 18.4 1-14.1 1 13.2 1 14.5 1-2.3 1-1.6 1-27.2 1 7.8 1 .1 1 .7 1-2 1 5.5 1-10 1-7 1-1.3 1 12.6 1 1.5 1-12.4 1-4.7 1 8.2 1-1.6 1-13.8 1 1.1 1 6.8 1 4.3 1-3.7 1 17.3 1-11.1 1-1.6 1 12 1 .7V480z"/>
<path fill="url(#g11)" transform="translate(459) scale(1.0296 1)" d="M-88 480V370.6l 1-3.8 1-5.7 1-3.1 1-1.5 1 .2 1 2.1 1 2.1 1-.1 1-.5 1-.6 1-.4 1 .3 1 1.1 1 1.3 1 1.2 1 .3 1-1.2 1-2 1-5 1-3.3 1-2.7 1-2.2 1-2.3 1-2.8 1 5.2 1 5.6 1 3.2 1 1.2 1 1.6 1 3.1 1-1.7 1-1.7 1 2.8 1 4.8 1 4.4 1-1 1-2.3 1-.6 1-3.6 1 0 1-2 1 5.9 1-4.8 1-1.8 1-8.2 1 .3 1 22.9 1-4.4 1-11.2 1-11.3 1 12.7 1-7.1 1 9.2 1-5.7 1-.8 1-15.2 1 8.1 1-10.2 1 17.9 1-3.8 1-5.4 1 3.6 1-1.5 1-14.8 1 18.7 1-13.1 1 2.6 1-2.7 1-2.9 1 6.7 1-3.3 1 19.2 1-2.7 1-4.1 1-3.4 1 0 1-6.1 1-13.5 1 3.6 1 9.9 1-3.3 1-9.5 1 9.9 1-4.4 1-15.7 1 8.9 1 5.9 1 12.2 1 .4 1-1.1 1-7.7 1 13.6 1-3.4 1-1.1 1 4.1 1-4.8 1-6.1 1 3.7 1-8.6 1-6.9 1 6.9 1 5.1 1 1.1 1-14.3 1 .7 1 9.2 1 10.1 1-20.6 1 .2 1 9.3 1-10.7 1 5.9 1 14.1 1-8 1-.2 1-7.4 1-1.2 1 16.2 1-6.7 1-4.8 1 18.5 1-.1 1 1.3 1-4.2 1 4.6 1-10.7 1 3.4 1 6.6 1-3.9 1-3.9 1 6.7 1 5.4 1-.7 1-4.6 1-11.8 1 1.2 1 12.6 1-7.1 1 9.7 1-3.5 1-5.4 1 5.4 1 6.8 1 7.9 1 3.2 1-14.3 1-6.3 1 18.2 1-11.5 1 13.9 1 14 1-7.9 1 1.9 1-23.1 1 8.3 1-5.1 1-5.3 1 10 1 2.1 1-13.2 1-4.7 1 .1 1 9.7 1 2.5 1-14.4 1-5 1 10.3 1 6.6 1-21.7 1 6.9 1 2.5 1 .6 1-3.1 1 20.1 1-10.5 1-3.8 1 10.4 1-1.1V480z"/>
<path fill="url(#g12)" transform="translate(459) scale(1.0328 1)" d="M-88 480V371.6l 1-4.5 1-6.5 1-3.1 1 0 1 .1 1 2.9 1 2.4 1 0 1-.7 1-.7 1-.1 1 1 1 1.7 1 1.4 1 .9 1-.5 1-1.7 1-2.9 1-4.1 1-3.1 1-2.9 1-2.4 1-2.4 1-2.4 1 4.4 1 5.7 1 3.2 1 2.6 1 1.7 1 2 1-1.4 1-4 1 2.9 1 4.5 1 6.2 1 .1 1-1.7 1-2.5 1-3.2 1 .4 1-.8 1 8.9 1-11.9 1-1.5 1-5 1-.4 1 23.3 1-11.4 1-5 1-11.4 1 13.8 1-5.2 1 10.1 1-9.9 1 3.3 1-19 1 5.3 1-7.4 1 9.6 1 2.4 1-1.3 1 1.1 1-1.2 1-14.6 1 22.6 1-14 1-2.7 1 1.6 1-4.9 1 8.2 1-4.7 1 14.3 1-1.1 1 .1 1-1.2 1-1.5 1-8.4 1-12.8 1 6.5 1 9.8 1-4 1-11 1 3 1-2.6 1-11.3 1 5.6 1 8.4 1 14 1 1.8 1-2.8 1-2.9 1 11 1-7 1 1.6 1 2.4 1-9 1-3.9 1 4.4 1-6.7 1-4 1 10 1-1.1 1 1 1-13.1 1-1 1 9.5 1 15 1-24.4 1-.6 1 1 1-1 1 3.2 1 11.5 1-7.5 1 .4 1-7 1 .6 1 18.5 1-7.1 1-6.7 1 18.8 1 2.1 1-3 1-4.1 1-3.1 1 3.3 1 3.3 1 1.4 1-4 1-4.6 1 11.3 1 7.2 1-4.8 1-12.7 1-4.6 1 3.4 1 8.8 1-6.5 1 12.6 1-1.3 1-9.4 1 6.5 1 3.4 1 10.5 1 2 1-5 1-13.9 1 17.6 1-10.5 1 11.6 1 13.4 1 .1 1-6.5 1-24.9 1 10.2 1-4.1 1-.4 1 2.9 1 3.9 1-13.9 1 .4 1-6.6 1 9.3 1 6.2 1-12.2 1-5.9 1 7.4 1 14 1-25.2 1 10.9 1-4.3 1-.2 1-2.5 1 22.6 1-8.2 1-6.1 1 10.2 1-3.9V480z"/>
<path fill="url(#g13)" transform="translate(459) scale(1.0360 1)" d="M-88 480V373.4l 1-4.1 1-6.1 1-2.8 1-1.8 1 .5 1 2.1 1 3.2 1 .4 1-1.2 1-.1 1 0 1 .9 1 2 1 1.8 1 .8 1-1.1 1-2.5 1-4 1-4.3 1-3.1 1-3 1-1.4 1-2.3 1-2.3 1 2.4 1 5.6 1 3.2 1 4 1 2 1 2.4 1 .2 1-6 1 2.8 1 4.1 1 6.5 1 .7 1-1.1 1-2.2 1-4 1-.7 1-3.2 1 16.9 1-13.7 1-1.6 1-7 1 .5 1 26.1 1-12.6 1-4.7 1-14.6 1 16.9 1-6.7 1 6 1-7.8 1 8 1-23.3 1 5.9 1-8 1 4.4 1 8.2 1-.8 1-.3 1-1.4 1-14.1 1 21.1 1-14.6 1-3.2 1-.6 1 0 1 8.9 1-1.7 1 10.7 1 .1 1 7.2 1-13.6 1 5.5 1-6.8 1-17.4 1 7.7 1 7.8 1-2 1-11.3 1 19.4 1-15.8 1-15.4 1 5 1 8.7 1 16 1 1.5 1-4.1 1 2.1 1 9.2 1-10.5 1-.9 1 5 1-10.7 1-5.4 1 8.8 1-7.3 1-2.9 1-3.1 1 11.1 1 2 1-17.4 1 1.5 1 6 1 14.5 1-21.8 1-.4 1 2.2 1-3.3 1 4.2 1 15.2 1-8.4 1 5.1 1-11 1-1.6 1 18.9 1-5.9 1-5.8 1 13.4 1 7.4 1-2.2 1-8.4 1-.6 1 1 1 0 1 14.6 1-7.8 1-7 1 10.1 1 4.7 1-4.6 1-14.5 1-2 1 2.8 1 11.6 1-7.2 1 11 1 .3 1-14.5 1 10.8 1 4.8 1 9.2 1 .2 1-7.8 1-7.1 1 14.7 1-8.7 1 7.8 1 16.5 1-6.7 1 2.2 1-26.8 1 9.1 1 .8 1-12.8 1 5.7 1 6.5 1-12.5 1-6.6 1 1.2 1 9.8 1 3.9 1-15.1 1-1.6 1 3.6 1 6.9 1-15.2 1 8.1 1-.9 1-2.4 1-4.7 1 27.8 1-6.6 1-9.5 1 10.4 1-2.6V480z"/>
<path fill="url(#g14)" transform="translate(459) scale(1.0394 1)" d="M-88 480V373.5l 1-5 1-6.5 1-2.5 1 .1 1 0 1 2.9 1 5 1 1.7 1-4.1 1-.6 1 .2 1 1.9 1 3 1 2.5 1 1 1-1.5 1-2.9 1-4.9 1-5.2 1-3.8 1-3.7 1-.3 1-1.7 1-2.7 1 2.5 1 4.9 1 2.2 1 2.5 1 3.1 1 4.2 1 3 1-7 1 1.1 1 2.3 1 7.2 1 1.9 1-.3 1-2.6 1-3.7 1-1.9 1-5.9 1 24.8 1-15.7 1-5.1 1-.8 1-2.6 1 26.5 1-15.9 1-4.2 1-14 1 16.3 1-6.7 1 1.3 1-2.4 1 4.3 1-19.2 1 9.2 1-12.3 1 2.4 1 9.5 1-.3 1-2.6 1 3.6 1-13.6 1 16 1-12.6 1-4.6 1 4.5 1-3.6 1 10.3 1-2.8 1 10.6 1 .2 1-8.7 1-5.4 1 11.2 1 0 1-22.5 1 12.3 1 5.6 1-3.6 1-14.4 1 2.3 1 4.9 1-16.6 1 5 1 7.8 1 13.7 1 4.7 1-6.6 1 3.7 1 13.6 1-10.4 1-4.6 1 .3 1-7.6 1-5.3 1 9.7 1-3.6 1 4.8 1-1 1-3.6 1 3.9 1-18.5 1 2.6 1 10.1 1 11.2 1-22.7 1 .3 1 2.1 1-1.4 1 4.4 1 10.6 1-6.5 1 3.5 1-9.6 1-1.2 1 18.4 1-5.2 1-4.7 1 7.1 1 7 1-1 1-4.1 1 17.8 1-18.9 1 2.4 1 7.8 1-5.3 1-1.4 1 12.2 1-.6 1-3 1-17.3 1-.1 1 7.4 1 6.7 1-9.4 1 10.8 1 6.3 1-18.2 1 8.2 1 7.3 1 11.2 1-3.7 1-10.4 1-5.5 1 19 1-9.9 1 7.5 1 15.2 1-1.7 1-.5 1-23.9 1 6.5 1-2.5 1-10.3 1 6.8 1 3.7 1-12.4 1-6.2 1 2.8 1 10.6 1 2.2 1-10.5 1-5.6 1 5.5 1 5.1 1-15.4 1 7.9 1 9.6 1-12.6 1-5.5 1 29.2 1-9 1-4.4 1 8.9 1-6.2V480z"/>
<path fill="url(#g15)" transform="translate(459) scale(1.0428 1)" d="M-88 480V376.1l 1-4.7 1-6.6 1-2.9 1-1.4 1 .1 1 2.1 1 5.1 1 4.7 1-3.6 1-2.5 1 .2 1 1.8 1 3.2 1 2.8 1 1.5 1-1.1 1-3.2 1-5.7 1-5.8 1-4.1 1-3.9 1 .2 1-2.2 1-2.1 1 2.6 1 5.8 1 .5 1 3.1 1 3.6 1 3.3 1 3.9 1-9.1 1 1.3 1 1.7 1 7.7 1 2.3 1 1.2 1-.8 1-2.7 1-2.5 1-6.6 1 22.5 1-15.3 1-5.6 1 3.6 1-5.9 1 27.3 1-15.1 1-4.4 1-15.1 1 17.4 1-10.2 1 1.1 1 1.1 1 .7 1-17 1 6 1-9.6 1 4.5 1 8.5 1 2 1-3.9 1 4.3 1-16.6 1 16.9 1-12.1 1-4.6 1 5.6 1-5.9 1 8.8 1 14.5 1-1.8 1-.3 1-8 1-7.4 1 7 1-7.3 1-12.5 1 15.1 1 .5 1 3.7 1-20.4 1 2.3 1 7.5 1-17.5 1 7 1 5.1 1 15.9 1 2.5 1-6.2 1 7.9 1 9.6 1-8.9 1-4.2 1-2 1-9.5 1-3 1 10.7 1-9.1 1 .7 1 8.1 1-3.6 1 .8 1-16.6 1 2.6 1 5 1 17.1 1-23.4 1-.4 1-.4 1 4.2 1-2.1 1 11.3 1-4.1 1-1.1 1-4.1 1-1.3 1 18 1-1.3 1-6.2 1 6.4 1 4.5 1 .8 1-6 1 2.4 1-1.7 1 1.2 1 10.7 1-7.8 1-3.9 1 11.1 1-3.1 1 4 1-17.8 1-.1 1 9 1 6.5 1-7.6 1 7.6 1 3.7 1-14.8 1 5 1 4.6 1 14.2 1-3.9 1-8.4 1-6.2 1 17.4 1 .5 1-3.8 1 17.2 1-3.3 1-.8 1-21.5 1 10.2 1-6.3 1-10.8 1 9.5 1 6 1-8.7 1-13.5 1-.5 1 15.8 1-.8 1-9.8 1-3.8 1 5.4 1 7.3 1-18.8 1 7.1 1 5.6 1-12.3 1-1.3 1 29.4 1-11.4 1-2.6 1 11.9 1-4.9V480z"/>
<path fill="url(#g16)" transform="translate(459) scale(1.0462 1)" d="M-88 480V378.8l 1-4.7 1-6.4 1-3.5 1-2.4 1 .2 1 2.3 1 4.9 1 2.1 1-3.2 1-1.3 1 .4 1 2.3 1 3.7 1 3.2 1 1.3 1-1.4 1-3.7 1-6 1-6.1 1-4.6 1-4.3 1 .1 1-2.8 1-.3 1 2.9 1 6.3 1 1 1 3.4 1 5.6 1 3.9 1-1.7 1-8.3 1 1.5 1 1.5 1 8.6 1 2.3 1 .5 1-.2 1-.6 1-1.3 1-6.4 1 21.5 1-11.2 1-8.9 1 2.4 1-7.5 1 28 1-11.6 1-9.1 1-16 1 13.9 1-8.3 1 1.3 1-.2 1 5.5 1-19.1 1 2.7 1-4.8 1 2.5 1 12.5 1-7.1 1 .2 1 7.1 1-14 1 14 1-13.3 1-3.2 1 3.2 1-3.1 1 9.7 1 3.7 1 5.1 1 6.6 1-15.3 1-6.3 1 10.3 1 6.5 1-27.3 1 12.7 1 5.8 1-6.2 1-6.1 1-2.9 1 5.4 1-18.3 1 7.8 1 8.3 1 13 1 3.8 1-9.3 1 10 1 9.1 1-10 1-4.5 1 1.3 1-7.3 1-6.2 1 9.5 1-9.1 1 13.8 1-18.2 1 9.1 1-2 1-13.1 1 2.6 1 7.6 1 15.1 1-24.1 1-.4 1 1.5 1 3 1-.4 1 10.6 1-6.4 1-6.5 1 5.5 1-4.9 1 23.4 1-6.9 1-5.4 1-1.1 1 10 1 4 1-3.1 1-.1 1-2.3 1 .6 1 8 1-4.6 1-9.5 1 11.9 1 5.3 1 5.4 1-24.1 1-.3 1 12.8 1 2.5 1-7.5 1 6.8 1 6.2 1-19.2 1 4 1 9.9 1 13.1 1-7.5 1-4.5 1-5.4 1 21.1 1-6.4 1 3.5 1 14.2 1-5.3 1-3.5 1-15.8 1 12.1 1-9.2 1-14.3 1 11.9 1 4.3 1-6.6 1-10 1-8.5 1 16.4 1-.9 1-7.7 1 3.7 1 2.4 1-6.4 1-12.8 1 11.4 1 7 1-14.3 1-1.6 1 32 1-11.6 1-6.1 1 9.4 1 1.7V480z"/>
<path fill="url(#g17)" transform="translate(459) scale(1.0497 1)" d="M-88 480V380.1l 1-5.1 1-7.5 1-3.9 1-1.1 1 .1 1 3.1 1 7.1 1 .7 1-4.7 1-1.7 1 1 1 3.3 1 4.9 1 3.9 1 2 1-1.1 1-3.9 1-6.6 1-6.9 1-5.1 1-4.3 1-.3 1-4.6 1 2.6 1 5.7 1 1.5 1 .3 1 3.9 1 6.8 1 4.6 1-3.8 1-8 1 1.6 1 1.6 1 7.9 1 4 1 2.1 1 0 1 0 1-2.3 1-7.9 1 22.1 1-11.8 1-9.2 1-3.2 1-8.4 1 34.8 1-18.1 1-6.8 1-12.8 1 11.5 1-.1 1-4.4 1-4.6 1 9.7 1-18.9 1 4.2 1-6.4 1 1.9 1 13.8 1-6.1 1-.8 1 5.6 1-15 1 15.4 1-13 1-2.3 1 4.7 1-5.3 1 11.1 1 10.1 1-.2 1 2.3 1-14.8 1-3.1 1 10.5 1 2.4 1-25.3 1 12.5 1 3.6 1-6.3 1-9.4 1 11.1 1-2 1-19.1 1 8.5 1 7.9 1 16 1 3.6 1-13 1 10.2 1 7.4 1-10.3 1-.3 1 1.1 1-11.3 1-3.9 1 8.9 1-9.4 1 15 1-18 1 6.7 1 .6 1-11.1 1 0 1 9.2 1 14.1 1-24.7 1 .3 1 .3 1 6.7 1-.7 1 6.8 1-3.9 1-9.8 1 3.7 1-.6 1 20.5 1-2.8 1 6.3 1-11.6 1 8.6 1 1.9 1-3.4 1 6.5 1-5.4 1-5.7 1 15.5 1-12.2 1-4.3 1 13.4 1 3.4 1 4.1 1-21 1-3.4 1 16.8 1-2.2 1-3.9 1 4 1 5.9 1-18.1 1 2.6 1 11.8 1 11.6 1-4.8 1-8.8 1-5.2 1 20 1-2.6 1 1.8 1 15.9 1-5.3 1-7.5 1-8.3 1 6.3 1-4.3 1-17.9 1 .3 1 16.7 1-7.2 1-7 1-4.3 1 4.1 1 4.5 1-2.9 1-11.3 1 12.8 1-3.4 1-16.4 1 8.3 1 5.3 1-7.7 1-3 1 32.8 1-14.9 1-6 1 11.6 1 1.9V480z"/>
<path fill="url(#g18)" transform="translate(459) scale(1.0533 1)" d="M-88 480V381.7l 1-5.1 1-7.1 1-3.1 1-2 1 1 1 5 1 11.1 1 .2 1-10.5 1-.5 1 .9 1 2.3 1 3.3 1 2.6 1 .9 1-1 1-3.3 1-6.2 1-6.8 1-5 1-4.4 1 1.3 1-3.5 1-.3 1 10.4 1-.9 1 .8 1 3.1 1 5.7 1 4.4 1-5 1-5.6 1 1.6 1 1.6 1 7.7 1 3.6 1 .7 1-.6 1 .2 1-2.1 1-8.6 1 21.9 1-7.5 1-9.1 1-5.8 1-2.1 1 31 1-17.8 1-7.6 1-13.4 1 6.6 1 5.6 1-2.5 1-5.8 1 10.2 1-21 1 2.5 1-4.6 1 9 1 6.4 1-4.6 1-2.2 1 2 1-11.2 1 14.7 1-8.6 1-1.4 1 4.6 1-7.7 1 7.6 1-1.5 1 9.1 1 7.3 1-17.4 1 5.1 1 7.4 1-9.3 1-17.3 1 13.3 1 3.2 1-12 1-9 1 7.8 1 4 1-16.7 1 12.6 1 4.6 1 18.2 1 1.3 1-17.1 1 14.1 1 9.4 1-8.1 1-2.4 1-2.5 1-5.7 1-5.1 1 7.6 1-10.2 1 1.6 1 4.3 1-6.6 1-2.9 1-6.9 1 2.2 1 9.6 1 12.4 1-23.4 1 4.8 1-3.2 1 6 1 5.4 1 1.7 1-.8 1-14.3 1 5.7 1-2.4 1 18.2 1-3.1 1 6.7 1-10.8 1 12.4 1-2.2 1-3.2 1 8 1-4.5 1-8.6 1 14.8 1-9.8 1-4.2 1 14.5 1-.9 1 .9 1-16.6 1-1.4 1 14.4 1 .9 1-3.7 1 4.5 1-1.7 1-12.5 1 3.3 1 10.1 1 13.7 1-8.4 1-5.4 1-5.6 1 21.1 1-3.1 1-1.4 1 21.3 1-10.3 1-2.9 1-10.9 1 10.4 1-6.4 1-15.3 1 3.3 1 3.9 1-3.7 1-12.5 1-.6 1 8.5 1 2.9 1-.1 1-18 1 21.1 1-9.6 1-14.7 1 6.4 1 1.9 1-.6 1-.4 1 27.9 1-12.5 1-7.7 1 17.5 1-3.2V480z"/>
<path fill="url(#g19)" transform="translate(459) scale(1.0569 1)" d="M-88 480V382.4l 1-5.3 1-7.4 1-2.6 1-1.2 1 2 1 5.8 1 4.3 1 .5 1-2.3 1-1.4 1 .8 1 1.6 1 2.2 1 1.4 1-.1 1-.7 1-2.6 1-5.4 1-5.9 1-4.4 1-4.7 1 1.7 1-5.5 1 1.5 1 2 1 8.1 1 .8 1 2.5 1 3.8 1 2.5 1-7.3 1-1.3 1 1.6 1 1.6 1 6.7 1 2.4 1 .8 1 .9 1 1.3 1-1.8 1-8.1 1 20.7 1-8.7 1-7.7 1-6.5 1-3.8 1 29.2 1-12.4 1-14.3 1-8.1 1 8.6 1 5.7 1-6.3 1-9.3 1 16 1-21.5 1-.2 1-2 1 6.8 1 9 1-4.8 1 .8 1-2.9 1-10.8 1 16.4 1-11.1 1 2.1 1 6.9 1-5 1 1.6 1 3.5 1 1 1 8.8 1-16.2 1 8.8 1 3.3 1-16.3 1-9.5 1 10.1 1 5.8 1-12.9 1-6.5 1 2.1 1 8.3 1-16.3 1 11.1 1 1.3 1 20 1 3.3 1-13.3 1 10.6 1 12.3 1-11.3 1-1.1 1-3 1-3.7 1-6.9 1 5.2 1-12.4 1 3.7 1-.7 1 2.5 1-6.2 1-3.7 1 .4 1 10.9 1 10.5 1-22.9 1 6.6 1-5.6 1 9.8 1 15.7 1-10.3 1-2.1 1-14.5 1 10.7 1-8.3 1 22.8 1-7.1 1 5.5 1-13.4 1 14.5 1-1.7 1-.6 1 8.3 1-3 1-3.9 1 5.4 1-1.8 1-12.2 1 14.7 1 1.7 1-2.5 1-10.5 1-5.1 1 11.7 1 8.4 1-6.9 1 2.2 1-8.4 1-5.6 1 7.6 1 10.9 1 12.5 1-9 1-9.4 1-4.3 1 21.2 1-4.5 1-4.8 1 27 1-8.7 1-4.3 1-13.4 1 12 1-7.1 1-19.8 1 14.8 1-3.6 1 2 1-15 1-1.5 1 .4 1 9.3 1 1.9 1-19.2 1 20.3 1-8.4 1-13.2 1 7.6 1 7.4 1-8.1 1 .4 1 24 1-12.6 1-.5 1 4.8 1 5.3V480z"/>
<path fill="url(#g20)" transform="translate(459) scale(1.0606 1)" d="M-88 480V385.8l 1-5.2 1-7.9 1-3.3 1-1.7 1 1.8 1 6.1 1 4.1 1 .6 1-4.9 1 .1 1 .3 1 1.5 1 3.2 1 3.3 1 1.3 1-.9 1-4.1 1-6.8 1-6.4 1-4.2 1-3.4 1 1 1-6.4 1-1.3 1 .3 1 12.9 1 2.5 1 2 1 2.3 1 4 1-6.7 1-2.6 1 1.6 1 1.7 1 7.5 1 3.1 1-1 1 .2 1 .4 1-2.3 1-9.2 1 19.9 1-4.6 1-5.2 1-6.8 1-4.1 1 24.3 1-9.1 1-15.4 1-7.2 1 6.5 1 9.6 1-6.2 1-7.7 1 10.7 1-19.7 1-1.1 1-1 1 5.7 1 9.2 1-2.3 1-3.7 1 4.3 1-16.9 1 20.1 1-11.1 1-1.7 1 11 1-2.4 1-4.4 1-1.2 1 3.6 1 15.1 1-19.2 1 9.9 1 2.7 1-17 1-6.8 1 5.9 1 8.5 1-14.6 1-6.5 1 2.8 1 6.3 1-14.4 1 10.3 1 7.9 1 13.4 1 4.3 1-9.8 1 7 1 13.8 1-10.9 1 1.1 1-3.8 1-4.6 1-8.6 1 11 1-17.7 1 8.4 1-5.5 1-1.8 1-5.3 1-2.1 1 1.1 1 11.3 1 9.6 1-22.4 1 5.7 1-6.5 1 10.8 1-.5 1 4.9 1 .4 1-12.7 1 16.3 1-16.5 1 20.9 1-4.7 1 18.4 1-27.2 1 11 1-2.4 1-2.6 1 11.4 1-2.6 1-8.7 1 13 1-1.7 1-10.3 1 12.6 1-.6 1 2.4 1-9.6 1-8.1 1 10.4 1 11.7 1-10.7 1 1.4 1 4.3 1-17 1 4.5 1 15.2 1 10.5 1-10.6 1-2.9 1-7.2 1 21.5 1-4.2 1-2.7 1 25.4 1-7.7 1-8.5 1-17.9 1 15 1-1.2 1-24.4 1 12.6 1-.6 1 3.2 1-19.8 1 2.9 1 .6 1 9.8 1 1.6 1-20.3 1 15.9 1-7.9 1-10.4 1 9.3 1 7.1 1-10.6 1 5.6 1 24.4 1-13.4 1-2.9 1 6.7 1 2.7V480z"/>
<path fill="url(#g21)" transform="translate(459) scale(1.0643 1)" d="M-88 480V387l 1-5.4 1-7.2 1-5 1-2.2 1 1.6 1 3.9 1 5.2 1 1.3 1-2.7 1 .8 1 1.2 1 2.7 1 4.2 1 3.4 1 .2 1-2.6 1-5 1-6.8 1-6 1-3.7 1-4 1 .9 1-6.3 1-4 1 .3 1 16.2 1 3.4 1 9.1 1-7.3 1 2.7 1-3.9 1-3.3 1 1.7 1 5.6 1 6.2 1 1.6 1-2.3 1-1.4 1 3.2 1-2.2 1-8.8 1 17.8 1 1.5 1-9.2 1-12.5 1 1.7 1 23.2 1-8.9 1-14.9 1-8.3 1 14.2 1-1.6 1-5.4 1-4.4 1 8.4 1-18 1-1.1 1-1 1 3.7 1 13.2 1-5.1 1-4.3 1 8.5 1-18.5 1 22.2 1-11 1-1.2 1 7 1-.6 1-3.1 1-5.5 1 17.5 1 4.3 1-17 1 8.3 1-3.2 1-12.1 1-5.1 1 3.3 1 9 1-13.2 1-9.2 1-.6 1 7.5 1-8.4 1 4.4 1 3.9 1 22 1 3.5 1-11.8 1 9.3 1 14.1 1-17 1 1.4 1-1.9 1-6.7 1-2.9 1-2.3 1-7 1 8.7 1-2.6 1-7.3 1-2.8 1 2.3 1-2.6 1 6.3 1 15.6 1-23.3 1 2.9 1-4 1 8.9 1-.8 1 6.3 1-.4 1-4.6 1 11.5 1-17.2 1 17.1 1 1.6 1-.7 1-12.3 1 16.9 1-3.8 1-4.5 1 7 1-1.6 1-12 1 25.2 1-6.5 1-13 1 17.2 1-5.9 1 6.6 1-14.6 1-6.1 1 13.7 1 8.5 1-16.5 1 3.5 1-5.6 1-2.3 1 3.7 1 14.9 1 6.9 1-7.8 1-3.5 1-5.7 1 21.4 1-3.5 1-6.3 1 26.1 1-6.3 1-9.7 1-18.1 1 17.4 1-1.3 1-24.7 1 13.4 1 .4 1 2.5 1-22.3 1 7.2 1-2.3 1 9.2 1 3.8 1-23.3 1 22.1 1-10.6 1-13.8 1 2.3 1 7.9 1-5.8 1 8.8 1 22.7 1-12.7 1-5.8 1 10.7 1 2.9V480z"/>
<path fill="url(#g22)" transform="translate(459) scale(1.0681 1)" d="M-88 480V390.2l 1-3.8 1-7.3 1-4.1 1-3.7 1-.2 1 2.5 1 3.2 1 2.7 1-2.3 1 1.2 1 1.3 1 2.5 1 4 1 3.7 1 1 1-.7 1-3.7 1-6.5 1-7 1-5.8 1-6.6 1-.6 1-6.8 1-3.4 1 2 1 15.6 1 10.3 1-4.9 1 .2 1 4.8 1-3.1 1-4.5 1 1.7 1 7.4 1 7 1 .8 1-4.9 1-.8 1 1.9 1-2.4 1-10 1 18.9 1 1.1 1-9.6 1-8.2 1-1.5 1 23.2 1-6.2 1-11.6 1-12.7 1 18.4 1-4 1-7.5 1-6.4 1 9.3 1-16.7 1-1 1-1 1 2.7 1 10.2 1-2.4 1-3.8 1 10.1 1-20.7 1 18.5 1-6.7 1-8.9 1 14 1 .7 1-4.3 1-1.8 1 8.6 1 7.7 1-14.8 1 .2 1 7.3 1-15.6 1-2.2 1 5.8 1 1.5 1-16.1 1-2.3 1-1.7 1 4.3 1-6.2 1 5.7 1 4.2 1 19.3 1 9.2 1-11.6 1 12.5 1 9.8 1-15.2 1-1.9 1-1.6 1-5.9 1-5.3 1-1 1-4.8 1 17.4 1-12.2 1-8.2 1-2.6 1 .4 1-1.1 1 3.5 1 16.4 1-21.4 1 4.4 1-5.5 1 12.2 1-4.7 1 4.2 1 .3 1-1.1 1 6.9 1-14.8 1 17.4 1 4.1 1-6 1-9.1 1 16.8 1-5.5 1 .3 1 7 1 2.1 1-17 1 23.1 1-3.3 1-17.1 1 14.1 1-1.2 1 2.5 1-10.7 1-4.5 1 14.1 1 11.6 1-20.9 1 2.4 1-5.9 1-1 1 3.7 1 15.4 1 10.7 1-10 1-6.6 1-2.3 1 15.8 1-1.1 1-11.3 1 30.6 1-5.2 1-13.4 1-12.1 1 15.4 1-5.7 1-18 1 12.3 1-3.7 1 4.6 1-21.7 1 4.2 1-2.5 1 13.1 1 1.3 1-22.4 1 16.6 1-5.8 1-13.2 1 2.6 1 7 1-6 1 13.9 1 19.1 1-11.8 1-10.2 1 12.2 1 4.7V480z"/>
<path fill="url(#g23)" transform="translate(459) scale(1.0719 1)" d="M-88 480V392.3l 1-4.4 1-8.3 1-4.9 1-3.7 1 .5 1 3.5 1 6 1 2.7 1-3 1 1.3 1 .8 1 1.6 1 3.7 1 4.9 1 2.9 1 1.4 1-2.7 1-7.3 1-8.5 1-2.1 1-14.4 1 .6 1-8 1-4.2 1 1.7 1 14.2 1 8.3 1 2.4 1-.1 1 4.3 1-6.2 1-3.7 1 1.8 1 5.5 1 8.8 1 .5 1-6.4 1-1.1 1-.6 1 0 1-7.9 1 22.2 1-7 1-3.9 1-3.9 1-6.5 1 19.3 1-4.4 1-10.9 1-11.2 1 19.5 1-4.6 1-14.4 1-.8 1 9.8 1-12.2 1-.6 1-5.6 1 .1 1 11.3 1-2.2 1-.5 1 6.3 1-18.8 1 21.9 1-15.1 1-4.5 1 16.2 1-4.6 1 4.8 1 3.6 1 4.9 1-.1 1-11.7 1-3.2 1 9.5 1-20.6 1-1.5 1 8.1 1 2.9 1-15.4 1-2.1 1-3.2 1 4.2 1-7.5 1 11 1 2.6 1 17.3 1 9.1 1-12 1 7.7 1 14.5 1-14.8 1-1 1-6.5 1-3.7 1-2.7 1-3 1-5.8 1 15.8 1-7.5 1-7.5 1-8.6 1 7.2 1-3.6 1 4.2 1 17.3 1-23 1 4.3 1-5.4 1 14.6 1-10.6 1 6.2 1-3.1 1-2.8 1 12.8 1-12.8 1 16.3 1 4.4 1-10 1-5.5 1 19.3 1-4.8 1-.8 1 7.7 1-3.2 1-16.3 1 24.2 1-2 1-12.2 1 9.4 1-1.1 1 1.7 1-11.1 1-1.8 1 9.1 1 15.5 1-22.9 1 3.7 1-5.3 1 .5 1-2.1 1 23.2 1 9.5 1-10.8 1-10.3 1-.5 1 14.4 1-.6 1-10.7 1 31.5 1-9.3 1-14.3 1-11.8 1 18.8 1-6.6 1-13.4 1 8 1-1.4 1 .7 1-17.1 1 5.2 1-3.3 1 9 1 7.9 1-28.2 1 15.8 1-10.5 1-7.7 1 6.4 1 .3 1-1.9 1 13.5 1 17.7 1-12.7 1-8.9 1 24 1-5.1V480z"/>
<path fill="url(#g24)" transform="translate(459) scale(1.0758 1)" d="M-88 480V391.4l 1-4.5 1-4.6 1-7.4 1-3.2 1 .6 1 3.1 1 4.7 1 3.5 1-2.1 1 2.2 1 1.5 1 2 1 3.8 1 4.5 1 2.2 1 .8 1-3 1-7.1 1-7.9 1-2.9 1-7.7 1-2.6 1-10.5 1-4.9 1 1.7 1 6.9 1 17.8 1-2 1 1.8 1 6.7 1-.6 1-11.1 1 1.8 1 8.5 1 8.4 1-1.6 1-8.8 1-3 1 .1 1 .1 1-5.9 1 25.1 1-12.5 1-2.6 1-.9 1-5.5 1 20.3 1-6.3 1-10.3 1-12.5 1 16.1 1-3.7 1-11.4 1 .9 1 7.8 1-6.8 1-6.9 1-4.9 1 2.5 1 10.1 1-1.6 1-1.6 1 6.6 1-19.8 1 19.8 1-13.8 1-4 1 13.7 1-6.4 1 10.3 1-3 1 2.8 1 4.9 1-10.7 1 .2 1 7.5 1-17.9 1-1.5 1 15.1 1-4.6 1-19.6 1 1.2 1-3.9 1 3.1 1-5.4 1 8.8 1 19.5 1 4.4 1 1.6 1-7.9 1 9.5 1 11.1 1-9.5 1 .7 1-8.6 1-2.7 1-4.3 1 0 1-9.8 1 16.2 1-6.2 1-8.6 1-4.7 1 3.7 1-5.8 1 3.2 1 20.8 1-25.5 1 4.9 1-6 1 18.1 1-13.9 1 5.1 1-4.2 1-2.5 1 2.8 1-.5 1 23.9 1-2.7 1-10.9 1-2.9 1 18.7 1-2.6 1-2.7 1 3.5 1 5.3 1-23.1 1 25.1 1-3.9 1-9.6 1 4.3 1-.5 1 4.2 1-5.4 1-6.5 1 7.2 1 17 1-14.5 1-.1 1-10.1 1 .1 1-1.4 1 30.4 1 2.8 1-9.5 1-2.8 1-10.5 1 14.5 1-2.1 1-5.6 1 30.5 1-11.8 1-13.6 1-11.1 1 15.6 1-6.2 1-13.1 1 7.7 1 0 1 2.6 1-10.7 1 2 1-2.4 1 4.4 1 3.7 1-25.6 1 16.1 1-10.3 1-8 1 14.6 1-1.1 1-12.2 1 16 1 14.7 1-10.2 1-7 1 5 1 11.1V480z"/>
<path fill="url(#g25)" transform="translate(459) scale(1.0797 1)" d="M-88 480V394l 1-4.6 1-8.1 1-4.2 1-3.1 1 .7 1 3 1 2.8 1 .9 1 .6 1 1.2 1 .7 1 1.8 1 4.4 1 5.9 1 3 1 1.2 1-3.4 1-8.3 1-6.8 1-.9 1-16.4 1 5.9 1-13.6 1-3.6 1 1.8 1 14.2 1 9.9 1-2.3 1 3.2 1 5.4 1-6.2 1-4.5 1 1.8 1 8.6 1 5.2 1 1.2 1-9.6 1-1.8 1 .1 1 .2 1-5.9 1 25.2 1-10.5 1-7.2 1 8.2 1-9.4 1 14.9 1-7.6 1-8.2 1-10.6 1 17.2 1-3.8 1-13.8 1 16.3 1-6.9 1-7.7 1-.4 1-9.8 1 1.7 1 14 1-3.3 1-4.7 1 10.9 1-22.3 1 22.7 1-14.8 1-6 1 12.4 1-2.1 1 11.5 1-4.5 1 15 1-10.1 1-15.5 1 7.4 1 1.1 1-15.3 1-1.8 1 10.9 1 2.3 1-20.5 1 2.8 1-5.4 1 4.7 1-5.3 1 8.5 1 20 1 4 1 1.1 1-12 1 11.4 1 12.2 1-15.3 1 11.5 1-14.6 1-2.8 1-7.2 1-.2 1-3.3 1 4.2 1 5.4 1-14.8 1-1.2 1 4.1 1-5.3 1 2.2 1 23.7 1-27.4 1 6.1 1-7.3 1 18.1 1-14.8 1 2.7 1-1.4 1-3.3 1 5.8 1 .1 1 22.1 1-2.3 1-11.8 1-1.7 1 16.7 1 .8 1-5.9 1 3.9 1 4.2 1-21.8 1 18.9 1-2.5 1-8.3 1 3.7 1 9.7 1-8.9 1-2.2 1-3 1 6.8 1 16.2 1-11 1-4.2 1-9.2 1 1.5 1 1.7 1 20.5 1 10.4 1-13.8 1-1.2 1-8.2 1 19.4 1-10.3 1-3.1 1 27.1 1-6.6 1-12.8 1-9.6 1 13 1-9.8 1-7.4 1 2.8 1 2.2 1 3 1-5.3 1-8.4 1-2.3 1 5.3 1-.5 1-18.9 1 16.9 1-14 1-5.4 1 10.5 1 7 1-17.1 1 16.1 1 11 1-8.4 1-5.7 1-.9 1 19.1V480z"/>
<path fill="url(#g26)" transform="translate(459) scale(1.0837 1)" d="M-88 480V397.8l 1-4.3 1-8.5 1-4.5 1-3 1 1.5 1 6.2 1 3.1 1 .5 1-3.1 1-1.2 1-1.5 1 .6 1 4.8 1 7.7 1 5.2 1 2.5 1-3.7 1-9.3 1-7.6 1 0 1-4.4 1-3 1-13.7 1-7.8 1 1.8 1 12 1 10.5 1 .2 1 4.2 1 5.6 1-7.8 1-4.6 1 1.8 1 5.6 1 9.2 1-3.5 1-7 1-.6 1 .1 1 .1 1-5.9 1 27.1 1-11.1 1-5.8 1 1.1 1-1.4 1 11.9 1-12.1 1-2.4 1-12.4 1 18.5 1-6.8 1-3.1 1 4.1 1-2.7 1-13 1 9.4 1-15.3 1 9.6 1 5 1 3 1-5.5 1 5.6 1-21.4 1 22 1-14.7 1-4.9 1 8.5 1 7.6 1 10.1 1-7.1 1-1.1 1 4.6 1-18.7 1 8.5 1 5.2 1-19 1 1.4 1 9.5 1 1 1-17 1-.4 1-5.3 1 8.1 1-11.2 1 10.1 1 19.6 1 8.8 1-4 1-9.3 1 7.9 1 12.9 1-14.5 1 11 1-14.8 1 .5 1-4.2 1-9 1-.6 1 8 1 6.5 1-20.9 1 2.8 1 8.1 1-10.7 1 4.7 1 22.1 1-28.4 1 9.1 1-6 1 12.7 1-12.4 1 5.6 1-2 1-7.6 1 5.3 1 2.3 1 22.7 1-5 1-10.7 1 4.3 1 9.2 1 2.4 1-8.3 1 8 1-.5 1-18.9 1 19.7 1-4 1-3.2 1 2.5 1 14.7 1-8.6 1-9.6 1-4.1 1 11 1 11.9 1-16.7 1-2.8 1-8.1 1 4.4 1 3 1 21.3 1 11.1 1-13.3 1-1.8 1-15.2 1 23.2 1-13.2 1-2.7 1 31.4 1-4.2 1-19 1-7.6 1 13 1-12.1 1-13.1 1 10.8 1 3.3 1-2.4 1-2.4 1-5.6 1-2 1 8.5 1-11.6 1-12.2 1 17.1 1-12.6 1-7.1 1 9.8 1-4.6 1-4.8 1 14.4 1 10.6 1-11.4 1-.5 1-2 1 17.9V480z"/>
<path fill="url(#g27)" transform="translate(459) scale(1.0877 1)" d="M-88 480V398.6l 1-5 1-8.7 1-3.9 1-2.1 1 1.9 1 3.6 1 1.9 1-.9 1-1.7 1-1.2 1-1.2 1 1.5 1 6.6 1 9.5 1 5.3 1 2.1 1-3.9 1-9 1-9.2 1-1.6 1-8.8 1 1.8 1-17.5 1-2.6 1 1.9 1 15.9 1 6.1 1 4.7 1 2.2 1 1.8 1-8 1-2.4 1 1.9 1 6.4 1 5.2 1 .2 1-6.5 1-1.3 1 2.2 1 1.5 1-6.4 1 27.1 1-13.3 1-9 1 .7 1 2.7 1 10.6 1-13.6 1-4.2 1-9.3 1 21.1 1-11.6 1 1.3 1 2.3 1-7 1-12.1 1 13.4 1-16.2 1 14.8 1 1.4 1-4.8 1-.5 1 5.9 1-19.6 1 20.3 1-15.1 1-4.1 1 5.2 1 13.3 1 4.6 1-1.8 1-2.3 1 3.1 1-8.7 1 3.5 1 1.9 1-17.1 1-.4 1 10.3 1-3.7 1-16.3 1 .5 1-3.9 1 9.8 1-9.6 1 18.2 1 8.5 1 4 1 2.1 1-11 1 8 1 11.5 1-11.5 1 9.2 1-10.2 1-.1 1-9.6 1-10 1-.9 1 8.5 1 7.5 1-21.1 1 1 1 13.6 1-12.8 1 8.2 1 21 1-28.6 1 6.6 1-3.3 1 10.5 1-11 1 .7 1-1.4 1-4.9 1 7.4 1 .8 1 20.6 1-3.5 1-12.2 1 11.4 1 6.4 1-2.7 1-8.1 1 6.7 1 14.5 1-30.5 1 19.9 1-1.8 1-4.9 1 1.2 1-5.1 1 11.5 1-4.5 1-7.4 1 6.9 1 17.6 1-18.1 1-5.9 1-6.8 1 1.6 1 7.6 1 10 1 22.2 1-16.8 1 1.2 1-16.3 1 24 1-10.5 1-6.6 1 32 1-4.8 1-20.7 1-7 1 14.7 1-14 1-13.7 1 8.5 1 5.6 1 .6 1-3.7 1-7.4 1 3.1 1 1.6 1-7 1-12.9 1 21.7 1-10.8 1-13.6 1 9.6 1-6.1 1-3.2 1 18.3 1 5.2 1-11.4 1-2.5 1 .9 1 21.8V480z"/>
<path fill="url(#g28)" transform="translate(459) scale(1.0918 1)" d="M-88 480V395.6l 1-6.1 1-8.2 1-2.1 1-.1 1 3.2 1 4.3 1 3.3 1 1.2 1-.1 1-1.4 1-3 1-1.1 1 4.2 1 8.6 1 5.5 1 2.7 1-3.5 1-8.7 1-8.4 1 3.8 1-3.6 1-5.5 1-21.8 1-2.1 1 1.9 1 17.3 1 7.2 1 2.4 1 4 1 1.5 1-7.6 1-4.1 1 1.9 1 6.8 1 5.7 1-3.6 1-2.4 1-.5 1 3.5 1-.2 1-9.2 1 27.2 1-16.2 1-11.3 1 5.6 1 4.6 1 10.2 1-12.4 1-1.6 1-13 1 26.5 1-18.5 1-2.8 1 5.2 1 4.1 1-16.9 1 12.2 1-18.7 1 13.6 1 6.8 1-11 1 3 1 6.1 1-19 1 19.2 1-12.6 1-7.7 1 3.5 1 11.7 1 7.4 1-.9 1 3.3 1-5.8 1-11.8 1 8.2 1-1.8 1-12.6 1 6.7 1 4.9 1 .3 1-19 1-3.4 1-2.4 1 7.9 1-2.6 1 14.2 1 9.3 1 2.6 1 1.7 1-9.5 1 5.9 1 9.5 1-8.3 1 2.6 1-5.1 1 .1 1-10.7 1-11.8 1 .9 1 10.9 1 10 1-23.2 1 5.1 1 8.9 1-13.4 1 6.4 1 21.7 1-27 1 .5 1-1 1 15.3 1-11.8 1-2.7 1 .2 1-3.3 1 14.5 1-8.6 1 18.2 1 4 1-15.5 1 6.4 1 13 1-5.2 1-11.4 1 11.9 1-1 1-16 1 19.5 1-5 1-4.7 1 7.3 1 6.3 1-12.8 1 3.7 1-1.6 1 4.6 1 16.8 1-9.5 1-7.3 1-14.1 1 1.7 1 5.9 1 6.3 1 30.7 1-18.5 1 .2 1-17.4 1 23.4 1-9.2 1-6.7 1 28.2 1-3.3 1-18.1 1-9.2 1 9.9 1-5.7 1-15.2 1 9.8 1 7.4 1-2.3 1-5 1-8 1-1.1 1 9.3 1-6.6 1-16.2 1 18.7 1-6.9 1-14.6 1 15.6 1-11.6 1-3.7 1 19.9 1 2.2 1-13.6 1-1 1-.1 1 25.6V480z"/>
<path fill="url(#g29)" transform="translate(459) scale(1.0959 1)" d="M-88 480V395.4l 1-6.7 1-8.5 1-1.2 1 1.7 1 5.4 1 5.8 1 2.9 1-.4 1-1.6 1-1.7 1-2.2 1-.2 1 5 1 8.9 1 5.5 1 3 1-3.5 1-9.1 1-9.8 1 .5 1-4.1 1-10.6 1-14.5 1-2.1 1 2 1 23.9 1 .2 1 .4 1 2.5 1 1.4 1-4 1-3.4 1 1.9 1 3.3 1 3.5 1-1.1 1-1 1 3.7 1 4.2 1 1.9 1-10.3 1 21.1 1-17.6 1-5.6 1 6.7 1 3.9 1 6.2 1-6.1 1-5.2 1-14.2 1 29.7 1-21.5 1-.3 1 .1 1 7.9 1-8.6 1 2.4 1-18.6 1 10.3 1 9.1 1-10.1 1 2.8 1 3.1 1-17 1 18.2 1-7 1-10.9 1 8.3 1 8.6 1 2.8 1 1.5 1 1.2 1-3.3 1-16 1 10.5 1 3.5 1-16 1 8.4 1 7.2 1-6.4 1-11.7 1-3.6 1-6.7 1 6 1 .4 1 10.9 1 6.8 1 10.7 1-2.8 1-4.5 1 2.5 1 8.7 1-6.7 1 2.5 1-8.2 1 2.7 1-5.2 1-19.1 1-.9 1 11 1 9.5 1-20.7 1 8.3 1 10.3 1-17.2 1 5.3 1 21.2 1-24.5 1-2.7 1-2 1 26.3 1-21.1 1 5.5 1-3.9 1-4.9 1 26 1-20.7 1 17.1 1 1.9 1-16.3 1 8.3 1 19.6 1-11.3 1-8.6 1 3.2 1-5 1-4.9 1 17.5 1-4.1 1-6.4 1 7.1 1-1.2 1 16.5 1-21.2 1 2.5 1 6.8 1 15.7 1-.2 1-17.7 1-10.7 1 3.2 1 4.8 1 4.2 1 30.8 1-15.4 1-7.1 1-10.7 1 20.3 1-7 1-8.6 1 26.5 1 .8 1-20.5 1-8.9 1 6.1 1-.4 1-19.5 1 13.4 1 4.9 1-2.7 1-4.7 1-3.5 1-1.4 1 6.8 1-3.5 1-19.4 1 21.9 1-7.8 1-16.9 1 17.5 1-15.7 1-1.6 1 24.7 1-.2 1-19.1 1-.4 1 2.3 1 28.5V480z"/>
<path fill="url(#g30)" transform="translate(459) scale(1.1001 1)" d="M-88 480V397.2l 1-6.4 1-8.3 1-1.2 1 1.5 1 5.7 1 6.9 1 4.2 1-.3 1-3.2 1-5 1-6 1-2.3 1 5.5 1 11.7 1 8.8 1 5.8 1-2.2 1-9 1-10.2 1-4.9 1-1.5 1-11.8 1-13.7 1-2.1 1 4.3 1 18.1 1 3.6 1 1.5 1 1.7 1 2.2 1-5.6 1-2.5 1 2 1 5.1 1 2.5 1-1 1-1.6 1 6.6 1 1.5 1-2.5 1-11.9 1 23 1-15.6 1-1.7 1 2.3 1 8.4 1 7.5 1-9.5 1-3.9 1-15.7 1 29.2 1-25.8 1 1.4 1 18.4 1-9.2 1-7.5 1 8.5 1-23.8 1 19.2 1 0 1-12.5 1 4.9 1-3.5 1-11.8 1 20.9 1-5.1 1-13.6 1 7.8 1-1.5 1 15.3 1 .9 1 2.1 1-6.1 1-12 1 7.4 1 5.5 1-17.2 1 4.6 1 6.2 1-1.8 1-8.3 1-7.3 1-7.3 1 7.2 1 9.9 1 4 1-1.6 1 14.3 1-2.7 1-6.8 1 13.4 1-5 1-1.1 1 4.8 1-12.2 1 3 1-5.4 1-17 1-1 1 11.3 1 9.1 1-21.5 1 10 1 9 1-14.5 1 3.3 1 25.8 1-32.8 1-.6 1-.6 1 20.6 1-18 1 8.5 1-2.2 1-3.6 1 24.3 1-25.1 1 18.3 1 3.8 1-14.7 1 10.5 1 7.7 1 2.6 1-10.9 1 1.5 1-10.5 1-1.6 1 14.7 1-1.5 1-4.4 1 6.3 1-10.5 1 4.7 1-1 1 2.6 1 5.4 1 19.4 1-13.8 1-2.7 1-13.7 1 5 1 5.2 1 2.3 1 32 1-21.1 1 2.6 1-15.4 1 21.7 1-13.2 1-10 1 31.8 1 3.3 1-27.5 1-9.7 1 7.6 1 4.7 1-18.8 1 13 1-3.9 1 3.4 1-2.5 1-7.9 1 6 1 1.7 1-.9 1-22.3 1 23.1 1-7.8 1-18.2 1 20.1 1-20.5 1 .6 1 21.1 1 0 1-14.9 1-1.3 1 2.3 1 28.5V480z"/>
<path fill="url(#g31)" transform="translate(459) scale(1.1044 1)" d="M-88 480V401l 1-6.5 1-8.6 1-1.1 1 1.9 1 6 1 7.3 1 4.9 1 .8 1-1.9 1-4.7 1-7 1-3.5 1 5.2 1 12.5 1 9.1 1 4.6 1-4.5 1-10.8 1-10.7 1-6.1 1-4.5 1-11.1 1-9.8 1-2.1 1 3.9 1 22 1 1.4 1 2 1 3 1 1.9 1-4.9 1-1.9 1 1.6 1 4.1 1-.8 1-.1 1 .3 1 9.8 1-4.5 1-3.9 1-9.5 1 19.4 1-7.5 1-1.8 1-4.1 1 12 1 7.3 1-13.9 1 3.5 1-19.9 1 23.5 1-19.4 1 3.4 1-4.9 1 9.9 1-16.8 1 16.7 1-19.1 1 11.4 1 9.6 1-18 1 7.7 1-4.6 1-11.5 1 18.7 1-3.8 1-13 1 8.1 1-1.1 1 18.6 1-3.5 1-.7 1 5.5 1-19.9 1 8.8 1 4.2 1-15.5 1 .5 1 12.4 1-5.7 1-9.2 1-9.5 1-1.3 1 5.6 1 4.8 1 4.7 1 13.7 1 7.3 1-8.7 1-8.8 1 6 1 10.4 1 1 1 .2 1-13.6 1 1.5 1-3.2 1-19.2 1-1.2 1 10.8 1 8 1-19.6 1 10.1 1 8.2 1-16.3 1 6.2 1 25.6 1-33.4 1-.6 1-.6 1 30.6 1-28.5 1 16 1-6.3 1-1.1 1 12.8 1-20.7 1 18.2 1 4.8 1-13.3 1 15.6 1-.1 1 7 1-9.9 1 5.4 1-16.6 1-2.7 1 11.9 1 6.9 1-10.5 1 3.6 1-4.5 1-2.8 1 2.6 1 3.8 1 6.9 1 13.3 1-9.3 1-1.2 1-16.6 1 3.3 1 11.2 1-2.5 1 36.2 1-20 1-6.1 1-11 1 23.3 1-16.9 1-6.1 1 30.9 1-.2 1-18.4 1-16.3 1 14.7 1 1.9 1-19.7 1 12.7 1-10.8 1 8.3 1-3.5 1-6.1 1 6.1 1-2.8 1 3.1 1-21.9 1 21.7 1-4.8 1-18.7 1 16.5 1-19.4 1 .5 1 8.8 1 12.8 1-11.7 1-5 1 2.5 1 30.8V480z"/>
<path fill="url(#g32)" transform="translate(459) scale(1.1087 1)" d="M-88 480V407.2l 1-4.7 1-8.3 1-2.9 1-1.3 1 3.3 1 5.8 1 4.7 1 2.2 1 .4 1-2.5 1-5.8 1-4.1 1 3 1 9.7 1 7.4 1 5.1 1-2.7 1-9.1 1-10.1 1-6.4 1 10.4 1-25.6 1-11.9 1-2.1 1 7.1 1 16.2 1 3 1-1.3 1 6.4 1 4.6 1-2 1-4.2 1 .5 1 .7 1 2.2 1 1.8 1 2.9 1 7.4 1-4.3 1-6.2 1-9.1 1 20.2 1-8.7 1-3.3 1 .3 1 8.5 1 4.1 1-10.5 1 5.8 1-22.1 1 28.9 1-24.2 1 4.4 1-5.3 1 9.6 1-10.5 1 9.8 1-21.5 1 13.5 1 5.9 1-10.2 1 4.7 1-2.6 1-14.9 1 18.5 1-2.1 1-14.2 1 5.7 1 2.4 1 17 1-.9 1-2 1 2.1 1-16.6 1 5 1 5.9 1-14.7 1-1.8 1 15.2 1-1.5 1-9.3 1-13 1 2.4 1 6 1-4.2 1 4.9 1 10.7 1 20.6 1-13.2 1-11 1 10.2 1 12.4 1-5.6 1-1.1 1-14.1 1 1.7 1 1.4 1-18.7 1-1.7 1 12 1 5.2 1-20 1 9.2 1 9.8 1-14.2 1 2.3 1 23.2 1-29.8 1-.6 1-.6 1 13.2 1-14.6 1 17 1-11.5 1 5.9 1 10 1-17.3 1 20 1 1.5 1-13.1 1 18.3 1-6.2 1 10.3 1-9.9 1 1.4 1-14.1 1 .2 1 24.9 1-5.2 1-12.2 1 2.4 1 .5 1 .8 1-3.9 1 3.9 1 3.2 1 15.1 1-4.3 1-7.5 1-15.3 1 5.2 1 15.8 1-6.5 1 34.6 1-14.7 1-7 1-11.6 1 22.5 1-19.7 1-6.2 1 30.8 1-3.5 1-16.7 1-12.3 1 14.2 1 2.3 1-20.4 1 13.1 1-12.8 1 9.9 1-6.6 1 1.9 1-.9 1-10.2 1 11.4 1-19.1 1 23.7 1-12.5 1-14.4 1 17.7 1-22.2 1 .5 1 7.3 1 17.1 1-13.9 1-5.6 1 2.3 1 36.1V480z"/>
<path fill="url(#g33)" transform="translate(459) scale(1.1131 1)" d="M-88 480V410.2l 1-5.8 1-10.8 1-5.2 1-1.5 1 5.2 1 7.9 1 5.3 1 1.2 1-.5 1-2.5 1-5.4 1-4.1 1 2.6 1 10.2 1 7.8 1 6.7 1-1.3 1-8.5 1-10.1 1-8.8 1-.7 1-12 1-14.9 1-2.1 1 8.4 1 12.2 1 4.4 1 2 1 5.4 1 1.1 1-2.4 1-.6 1 .6 1-1.7 1 1.6 1 3.8 1 6.7 1 13.8 1-10.6 1-3.9 1-12.8 1 19 1-11.3 1-2.9 1 3.4 1 5.1 1 6 1-8.1 1 3.9 1-22.4 1 33.6 1-25 1 .9 1-7.7 1 14.9 1-10 1 4.5 1-18 1 15.1 1 1.5 1-12.1 1 6.8 1-2.3 1-14.5 1 19.3 1-2.4 1-9.4 1 2.5 1 8.6 1 11.6 1 4.4 1-9.6 1-5.9 1-6.6 1 2.2 1 2.7 1-10.1 1-3 1 19.2 1-1.8 1-6.2 1-19.4 1 8.6 1-.6 1-5.6 1 5.3 1 7.6 1 23.7 1-11.5 1-8.1 1 8.3 1 11 1-5.5 1-1.7 1-13.8 1 1 1-.9 1-18.4 1 2.2 1 13.6 1 .7 1-18.5 1 21 1-1.9 1-12.1 1-1.2 1 25.1 1-30.3 1-.6 1 .5 1 11.7 1-14.2 1 12.5 1-7.3 1 1.5 1 17.4 1-14.8 1 15.1 1 2.5 1-11.6 1 9.5 1-.6 1 10.1 1-9.1 1-3.3 1-9.7 1 .3 1 25.2 1-8.4 1-11.2 1 5.4 1 3.6 1-10.8 1-1.7 1 8.1 1 10.4 1 7.3 1 3 1-13.3 1-12.2 1 2.6 1 17.9 1-5.8 1 30 1-13.2 1-4.5 1-11.2 1 18.5 1-19.1 1-6.4 1 26.5 1-1.4 1-15.4 1-14.2 1 10.7 1 9.4 1-24.2 1 19.2 1-8 1 3.9 1-15.8 1 5.3 1 .4 1-3.9 1 3.2 1-14.2 1 23.3 1-24.6 1-2.6 1 14.8 1-19 1 .5 1 5.9 1 10.4 1-4.8 1-6.7 1 5.5 1 35.5V480z"/>
<path fill="url(#g34)" transform="translate(459) scale(1.1175 1)" d="M-88 480V414.9l 1-5.8 1-11.5 1-5.6 1-.8 1 6.6 1 9.1 1 5.3 1-.3 1-2.9 1-4.7 1-6.8 1-4.8 1 2.3 1 9.9 1 7.4 1 7.3 1-.7 1-7.4 1-8.9 1-8.1 1-3.7 1-8.9 1-15.6 1-2.1 1 3.5 1 9 1 12.1 1-.5 1 9.9 1 1 1-2.2 1 .3 1-.6 1-1.2 1 .2 1 1.7 1 5.1 1 11.1 1 .5 1-4.3 1-12.1 1 15.9 1-12.6 1 .4 1 3 1 1.7 1 5.1 1-5.2 1 6.3 1-26 1 28.9 1-20 1 1.3 1-8.4 1 13.8 1-17 1 8.5 1-11.1 1 10.9 1-1.4 1-8.6 1 5.1 1-1.1 1-13.9 1 17.5 1 2.9 1-12 1-1.8 1 10.5 1 12.7 1 3.1 1-7.5 1-14.9 1-.8 1 .6 1 9.7 1-11.1 1-.7 1 18.4 1-9.2 1-1.9 1-14.7 1 11.5 1-5.7 1-4.3 1 1.5 1 8.5 1 18.8 1-5.7 1-11.3 1 5.2 1 12.3 1-2.6 1 .2 1-20.7 1 6 1-1.4 1-16.4 1 .4 1 14.4 1 2.8 1-20.1 1 13 1 4.1 1-10.5 1 2 1 18.7 1-27.4 1-.6 1 2.9 1 12.2 1-17.1 1 9.4 1-5.4 1 1.2 1 18.1 1-19.2 1 16.9 1 10 1-16 1 13.3 1 .7 1 3.8 1-6.9 1-6.8 1-6.9 1 .3 1 11.2 1 3.7 1-2.5 1 4.5 1 8.2 1-20.6 1-1.5 1 8.4 1 9.8 1 3.8 1-.3 1-6.8 1-14.4 1 7.9 1 18.5 1-10.2 1 30.8 1-9.2 1-6.2 1-9.4 1 14.4 1-23.3 1-3.6 1 26.9 1 4.8 1-18.8 1-17 1 11 1 9.6 1-23.6 1 20.9 1-8.5 1-2.4 1-17.7 1 14.8 1 1.5 1-7.7 1 .2 1-12.3 1 21.3 1-24.2 1-1.8 1 14 1-17.2 1 .5 1 6.7 1 8.8 1-6.6 1-4.2 1 4.4 1 33.6V480z"/>
<path fill="url(#g35)" transform="translate(459) scale(1.1219 1)" d="M-88 480V412.6l 1-4.8 1-9.2 1-2.8 1 1.4 1 8.1 1 9.6 1 5.4 1-.9 1-5.1 1-8.5 1-11.1 1-7.6 1 2.1 1 11.8 1 9.2 1 8.7 1 .4 1-6.4 1-8.4 1-8.6 1-5 1-16.4 1-6.9 1-2.1 1 4.6 1 3.5 1 10.1 1 7 1 10.6 1 0 1-6.4 1 2.3 1 .9 1 .6 1 .7 1 2.5 1 8.3 1 9.4 1 .7 1-6.7 1-11.4 1 14.1 1-13 1-2.8 1 5.5 1 .6 1 4.6 1 2.7 1 6 1-29.2 1 27.2 1-17 1-3.8 1-9.1 1 16.8 1-14.1 1 4.3 1-12.5 1 14.9 1-6.8 1-7.4 1 3.5 1 .1 1-11.5 1 18.8 1 1.5 1-13.4 1-.8 1 12.6 1 7.2 1 7.3 1-6.8 1-15.7 1 5.3 1-3.4 1 6.5 1-10.9 1 .7 1 18.6 1-13.4 1 4.8 1-13.8 1 13 1-15.1 1-2.6 1 5.9 1 10.7 1 12.8 1-2 1-11.8 1 8.2 1 9.6 1-2.8 1 1.2 1-20.6 1 5 1-1.7 1-13.2 1-1.4 1 11.8 1 3 1-19.8 1 9.2 1 6 1-9 1 2.1 1 21.5 1-30.9 1-.6 1 4.5 1 8.8 1-15.3 1 8.1 1-5.9 1 6.9 1 11.3 1-16.4 1 21.3 1 6.4 1-18.5 1 20.1 1 3.9 1-1.6 1-9.3 1-7.7 1-6.5 1 .3 1 10.9 1 6.5 1-.9 1 .1 1 9.2 1-23.1 1 1.5 1 7.3 1 13.2 1-.9 1 2.4 1-7.8 1-11.5 1 1.8 1 22.2 1-3.3 1 20.1 1-3.4 1-12.4 1-3.9 1 9.6 1-22 1 1.5 1 22.6 1 3.9 1-17.2 1-14.4 1 8.8 1 9.3 1-22.2 1 19.7 1-8 1 1.2 1-24.6 1 22.4 1-2.7 1-6.6 1-3.5 1-13.2 1 16.4 1-18.9 1 5.5 1 8.5 1-17.7 1 .5 1 6.9 1 9.2 1-8.1 1-3.4 1 2.3 1 35.7V480z"/>
<path fill="url(#g36)" transform="translate(459) scale(1.1265 1)" d="M-88 480V412.9l 1-6.9 1-11.9 1-4.7 1 1.7 1 10.2 1 12 1 6.1 1-1.1 1-4.7 1-8 1-10.2 1-6.8 1 2.7 1 17.8 1 4.1 1 8.3 1-1.1 1-7.9 1-9.1 1-8.6 1-4.7 1-13.9 1-7.3 1-2.1 1 6.4 1 5.4 1 7.3 1 4.5 1 10.8 1 1.9 1-4.2 1-.5 1 1.5 1-1.9 1 1.5 1 3.5 1 16.4 1 1.4 1-1.4 1-6.3 1-14.3 1 17.7 1-10.8 1-.6 1 3.2 1 .7 1 3.5 1-.4 1 6.3 1-25.3 1 28.2 1-11.4 1-4.8 1-11.9 1 17.6 1-12.8 1 1.6 1-11.8 1 11.4 1-.2 1-13.4 1 7.9 1-.7 1-15.5 1 21.1 1 2.3 1 1.5 1-21.9 1 13.4 1 3.6 1 10.6 1-3.6 1-15 1 14.3 1-13.9 1 10.3 1-7.7 1-7.6 1 20.2 1-13 1 .9 1-7.4 1 4.9 1-10.6 1-3.3 1 11.3 1 5.1 1 14.6 1-3.8 1-14.2 1 14.5 1 16 1-7.7 1-.2 1-26.2 1 6.1 1 2.4 1-15 1-.7 1 11.4 1-1.7 1-13.3 1 7.7 1 2.5 1-7.5 1 6.9 1 20.7 1-33.7 1-.6 1 8.9 1 13 1-24 1 12.8 1-5.6 1 .5 1 11.6 1-15.2 1 22 1 4.8 1-11.9 1 14.7 1-9.9 1 13.9 1-12.6 1-8.9 1-4 1 .2 1 5.4 1 6.9 1-1.2 1 9.6 1-.5 1-18.4 1 4.5 1 10.2 1 11.7 1-12.4 1-.6 1-2.2 1-6 1 1.3 1 25.3 1 4.5 1 9.6 1-8.2 1-5.8 1 1.2 1 1.6 1-22.8 1 2.5 1 23.2 1 2.6 1-3.6 1-24.4 1 9.6 1 2.2 1-16 1 16.1 1-7 1-.4 1-22 1 11.1 1 10.1 1-16.8 1 11.1 1-17.3 1 27 1-33 1 10 1 7.4 1-20.2 1 .4 1 5.7 1 11.8 1-1.6 1-11.3 1 2.3 1 31.6V480z"/>
<path fill="url(#g37)" transform="translate(459) scale(1.1310 1)" d="M-88 480V408.8l 1-5.1 1-8.2 1-1.2 1 2.5 1 8.4 1 9.5 1 5.6 1 .3 1-3.2 1-7.1 1-10.5 1-8.5 1 .5 1 14.8 1 4.2 1 8.1 1 .3 1-5.9 1-8 1-8.8 1-6.5 1-15.9 1-3.9 1-2.1 1 3.1 1 2.6 1 10.8 1 3.2 1 13.2 1-1 1-2 1-1.4 1 3 1-.5 1 3.5 1 3.8 1 14.6 1 4.2 1-9.9 1-.8 1-13.2 1 24.3 1-16.5 1-1.2 1 7.2 1-5.5 1 8.8 1-1.4 1 3 1-24 1 27.1 1-14.7 1-3.7 1-6.5 1 18.4 1-23.2 1 9.6 1-10 1 11 1-4.6 1-11.1 1 5.8 1 2 1-16.7 1 17.8 1 1.6 1-12.3 1-4.1 1 12.7 1 5.7 1 9 1-3.4 1-19.9 1 13.3 1-5.3 1 8.5 1-3.4 1-13.2 1 18.5 1-9.5 1 3.4 1-17.5 1 4.1 1-1.7 1-3.1 1 11.8 1 3.6 1 16.9 1-10 1-14.3 1 17.1 1 14.9 1-9.1 1 2.3 1-27.7 1 7.5 1 5.3 1-16.9 1-4.8 1 13.8 1-3.7 1-11.7 1 15.8 1 .2 1-10.5 1 3.8 1 22.8 1-34 1-.5 1 4.9 1 19.2 1-26.3 1 11.1 1-1.8 1-1.8 1 7.1 1-10.5 1 24.7 1 2.7 1-17.4 1 18.8 1 3 1 2.5 1-11.5 1-10 1-4.7 1 .2 1 7.5 1 8.1 1-2.9 1 13.2 1-20.7 1-3.5 1 6.6 1 15.9 1 6.7 1-16.1 1-4.9 1-1 1-5.6 1 5.3 1 24.4 1-4.1 1 17.4 1-10.2 1-4.4 1 1.1 1 3.3 1-20.6 1 9.7 1 16.3 1 14.8 1-21.3 1-20.5 1 14 1-3.1 1-17.9 1 17.1 1-1.6 1-2 1-21 1 5.3 1 5.8 1-13.5 1 .6 1-5 1 17.7 1-20.8 1 9.3 1 12.7 1-26.9 1 .5 1 13.2 1 6.8 1-4.1 1-11.4 1 2.3 1 30.7V480z"/>
<path fill="url(#g38)" transform="translate(459) scale(1.1357 1)" d="M-88 480V410.5l 1-4.4 1-6.8 1 .1 1 2.7 1 7.4 1 8 1 4.1 1-.3 1-3 1-7 1-11.2 1-9.3 1 .7 1 12.6 1 9.2 1 8.8 1-.9 1-9.2 1-11.8 1-8.5 1-7.9 1-10.2 1-2.1 1-2.1 1 6.8 1-.9 1 6.6 1 1.9 1 14.8 1 2.3 1 2 1 .2 1 2 1-1.1 1 4.6 1 2 1 3.6 1 16.9 1-15.1 1 .1 1-12.5 1 19.3 1-11 1-2.6 1-.5 1 5.4 1 3.7 1-.2 1 1.4 1-21.1 1 24.2 1-13.1 1-6.5 1-6.7 1 24.4 1-23.4 1 6.1 1-6.8 1 11 1-6.5 1-7.5 1-2.7 1 6.9 1-13.7 1 15.6 1 1.4 1-14.6 1-1.5 1 6.9 1 14.8 1 4.5 1-3 1-20 1 16.7 1-6.2 1 4.3 1-6.6 1-6 1 13.6 1-5.7 1 4 1-20.2 1 6.7 1-1.4 1-3.8 1 9.6 1 8.8 1 10.8 1-5.1 1-16.5 1 15.3 1 15 1-8.5 1 5.6 1-20.5 1-6.4 1 8.3 1-17.8 1-5.2 1 12.7 1 .9 1-19 1 13.3 1 13.7 1-9.3 1 1.3 1 22.3 1-36.6 1-.2 1 9.6 1 8.9 1-21 1 13.1 1-4.2 1 4.6 1-.6 1-8.9 1 22.3 1 7.9 1-15.3 1 12.5 1 13.4 1-8.8 1-10.1 1-5.6 1-8.2 1 1.6 1 3.3 1 13 1-3.3 1 9 1-19.3 1-2.4 1 5 1 12.8 1 12 1-14.6 1 5.5 1-15.1 1-5.2 1 4.9 1 23.3 1 6.7 1 11 1-12.5 1-13.2 1 3.8 1 11.5 1-21.4 1 5.8 1 17.1 1-2.4 1-8.3 1-15.3 1 15.1 1-2.1 1-15 1 15.2 1-1.3 1-4.8 1-22.3 1 11.8 1-.8 1-14.6 1 .2 1-4.6 1 10.4 1-9.6 1 8.4 1 13.5 1-28 1 .5 1 15.5 1 4.9 1-6.2 1-9.8 1 2.3 1 30.9V480z"/>
<path fill="url(#g39)" transform="translate(459) scale(1.1404 1)" d="M-88 480V414.1l 1-5.6 1-8.1 1 0 1 3.6 1 8.3 1 8.2 1 3.5 1-.9 1-3 1-7.3 1-11.7 1-9.3 1 .9 1 12.3 1 8.9 1 8.7 1 0 1-7.7 1-10.6 1-3.5 1-14.2 1-11.7 1-2.1 1-2.1 1 13 1-7 1 9.3 1 1.7 1 16.2 1-1 1 3.3 1-.8 1 5.3 1-2.9 1 2.7 1 .1 1 6.5 1 10.4 1-10.4 1-3.3 1-9.4 1 17.6 1-6.4 1-9.3 1 2.3 1-8.9 1 22.3 1 4.3 1-4.8 1-21.3 1 26 1-14.7 1-8.3 1-6.6 1 22.9 1-14.9 1 4.5 1-4.8 1 6.5 1-4.1 1-6.8 1 1.9 1-.6 1-13.8 1 12 1 1.9 1-6.4 1-8.1 1 8.1 1 13.5 1 1.9 1 .5 1-20.9 1 15 1 .6 1 .5 1 6.8 1-10.4 1 9.4 1-9.9 1-1.2 1-18.5 1 6.6 1 2.5 1-1 1 5.8 1 7 1 12.7 1-3.7 1-21.1 1 15.9 1 13.1 1-7.1 1 6.1 1-23.6 1 5.7 1 .6 1-19.8 1-3.1 1 12.8 1 .6 1-20.5 1 6.8 1 23.7 1-14.8 1 .3 1 28.3 1-37.9 1 4.1 1 7 1 2.2 1-16 1 16.6 1-5.3 1-3.6 1 .7 1-4.4 1 21.2 1 8 1-20.6 1 18.1 1 14.8 1-10.1 1-3.3 1-5.9 1-14.1 1 .2 1 2.6 1 18.9 1-2.2 1 0 1-12.7 1-4.3 1 4 1 3.4 1 20 1-13.6 1 5.5 1-7.6 1-12 1 4.2 1 26 1-.1 1 9.8 1-3 1-14.2 1 15.7 1 0 1-25.2 1 .9 1 23.3 1-3.1 1-.6 1-16.1 1 12.6 1-3.1 1-18.5 1 17.9 1-5.7 1-1.7 1-17 1 4.8 1-4.4 1-12.7 1 5.6 1-9.2 1 9.6 1-8.9 1 10 1 11.5 1-26.4 1 .4 1 16.3 1 5.6 1-5.4 1-12.1 1 2.2 1 31.1V480z"/>
<path fill="url(#g40)" transform="translate(459) scale(1.1451 1)" d="M-88 480V412.8l 1-3.8 1-5.4 1 2.3 1 4.8 1 9.1 1 8.3 1 2.8 1-2.4 1-5.3 1-9.6 1-13.1 1-9.3 1 .6 1 11.1 1 9.2 1 8 1-.9 1-7.8 1-8.2 1-7 1-9.3 1-10.2 1-.8 1 .2 1 32.4 1-29.3 1 10.5 1 .9 1 18.1 1-2.9 1 4.4 1-4.4 1 6 1-3.4 1 3.2 1-.4 1 5.5 1 15.1 1-16.1 1-3.9 1-5.8 1 16.5 1-5.6 1-2.4 1-2.7 1-12.4 1 23.6 1-8.6 1 6.5 1-18 1 21.2 1-13.2 1-6.9 1-5.6 1 24.6 1-14.5 1 .1 1-2.5 1 9 1-7.3 1-6.5 1 3.7 1-3.8 1-12.6 1 14.7 1 .9 1-10.8 1-4.4 1 6.7 1 14.7 1 .9 1 .5 1-19 1 20.8 1-5.1 1-1.4 1-.7 1-17.9 1 24 1-7.7 1-3 1-22.8 1 9.1 1 1 1 1.5 1 13.7 1 8.6 1-3 1 4.6 1-22.8 1 14.6 1 8.5 1 1.2 1 10 1-19.3 1 .6 1-2.3 1-22.8 1 5.9 1 9.5 1-6.1 1-17.6 1 6.1 1 27 1-3.7 1-12.7 1 27.5 1-37.8 1 4 1 3.1 1 4.1 1-13.9 1 19 1-13.1 1-1.6 1 6.4 1-6.7 1 29.6 1-3.9 1-14.8 1 18.5 1 12.3 1-4.3 1-8 1-6.2 1-15.1 1 2.6 1 .2 1 22 1 0 1-9.3 1-2.9 1-6.4 1-2.2 1 4 1 24 1-13.6 1 2.8 1 5.4 1-24.4 1 5.1 1 22.2 1 2.6 1 4.1 1-1.5 1-14.3 1 19.1 1 2.4 1-23.9 1-1.7 1 20.9 1 5 1-9.1 1-14.6 1 14.6 1-6.8 1-15.9 1 12.5 1-1.9 1-1.6 1-8.4 1-3.2 1-5.3 1-10.5 1 7.5 1-10.6 1 3.5 1 .4 1 7.5 1 11.2 1-28 1 .4 1 18.9 1 3.1 1-7.6 1-10.1 1 2.2 1 29.5V480z"/>
<path fill="url(#g41)" transform="translate(459) scale(1.1499 1)" d="M-88 480V415.9l 1-2.1 1-4 1 2.8 1 3.6 1 7.4 1 7.1 1 2.2 1-2 1-3.6 1-7.6 1-12.1 1-10.2 1-1.5 1 9.2 1 7.3 1 6.5 1-2.6 1-6.1 1-2.4 1-18.7 1-.8 1-8.6 1-2.1 1-.1 1 25 1-22.8 1 9.9 1 1.3 1 20.3 1-.8 1 5.1 1-3.1 1 6 1-1.5 1 3.3 1-.9 1-.3 1 13.7 1-16.9 1-3.2 1-8.1 1 16 1-3.3 1 4.9 1-7.1 1-9.6 1 17.8 1-3.6 1 3.4 1-21.2 1 20.8 1-11.7 1-8.8 1-2.3 1 24.9 1-17.5 1 .8 1 .7 1 7.9 1-6.7 1-3.8 1 2.6 1-5.8 1-11.6 1 16.3 1-4 1-13.1 1 .8 1 9.1 1 13.5 1-2.1 1 8.9 1-25.2 1 20.8 1-4.4 1-2.6 1-2.5 1-13.5 1 20.7 1-3.5 1-1.5 1-27.7 1 8.5 1 1.1 1-.2 1 15.1 1 14.5 1-13.4 1 9.4 1-22.1 1 16.3 1 7 1 1.4 1 6.8 1-19.4 1 4.4 1-4.8 1-21.4 1 9.1 1 7.5 1-2.6 1-22.3 1 5 1 26.4 1 .1 1-17.9 1 29.1 1-36.3 1 5.4 1 3.6 1 6.4 1-18.2 1 21.2 1-14.8 1 2.4 1 15.7 1-20.5 1 23.1 1 6 1-9 1 6 1 1.2 1 11.3 1-9.5 1-4.5 1-16.5 1 3.1 1 1.3 1 24.6 1-4.4 1-9.3 1-6.6 1-2.5 1 1.5 1 .7 1 24.6 1-19.5 1 1.6 1 10.2 1-23.2 1 10.2 1 14.7 1 8.6 1 4.7 1-5.5 1-11.3 1 10.8 1 9.7 1-21.6 1-.1 1 16.1 1 3.4 1-6.3 1-18.1 1 14.7 1-4.7 1-18.7 1 18.5 1-8.5 1 1.8 1-6.2 1-1.8 1-9.2 1-13.1 1 5.9 1-.8 1-3.6 1 .8 1 8 1 13.8 1-31.4 1 .3 1 18 1 8 1-10.7 1-11 1 4.6 1 26.3V480z"/>
<path fill="url(#g42)" transform="translate(459) scale(1.1548 1)" d="M-88 480V415.9l 1-2.5 1-4.2 1 3.1 1 4.7 1 8.6 1 7.9 1 1.7 1-3.4 1-5.1 1-7.9 1-10.9 1-9 1-1.2 1 8.5 1 7.2 1 7.6 1-1.1 1-8.9 1-4.2 1-15.4 1-3.7 1-6.8 1 .3 1-1 1 16.1 1-10.2 1 18.2 1-8.1 1 17.2 1-1.2 1 9.4 1-.6 1 7.1 1-2.2 1 3.9 1-6 1-4.7 1 6.8 1-8.3 1 0 1-7.3 1 10.9 1-.3 1-2.9 1 5.3 1-2.2 1 6.4 1-9 1 4.4 1-19.2 1 21.3 1-13.4 1-6.2 1-2.2 1 24.7 1-19.9 1 2.3 1 3.7 1 .2 1-3.4 1-2.8 1 4 1-10 1-11.6 1 22.9 1-11.1 1-9.4 1 .8 1 11.5 1 11.8 1-4.1 1-2.9 1-6 1 17.1 1-6.3 1-2.1 1 2.5 1-21.9 1 24.3 1-2.9 1-.3 1-30.6 1 11.8 1-4 1 2.7 1 13.5 1 13.7 1-9.7 1 8.3 1-23.4 1 12.2 1 9.2 1 .8 1 7.3 1-12.7 1 .5 1-9.4 1-17.6 1 9.9 1 6.3 1 .6 1-25.2 1 2.1 1 29.5 1 10.1 1-20.4 1 18.8 1-33.7 1 8.5 1 8.9 1-13.1 1-7.1 1 19.4 1-7.6 1 2.1 1 18.2 1-28.1 1 19.1 1 14.2 1-9.2 1 6.5 1-2.1 1 13.9 1-8.9 1-8.4 1-17.1 1 1.8 1 2.3 1 22.1 1 .1 1-9.6 1-7.7 1 1.6 1 2.8 1-3.5 1 18.2 1-12.9 1 2.8 1 11.9 1-27.8 1 11.9 1 16.2 1 1.5 1 5.7 1-8.4 1 .5 1 6.2 1 4.6 1-19.4 1 17.3 1 1.6 1 6.6 1-6.9 1-17.4 1 5.3 1-3 1-14.5 1 16.7 1-3.8 1 1 1-22.8 1 7.5 1-7.7 1-11 1 7 1 .1 1-4.7 1-5 1 11.4 1 11.7 1-27.2 1-.5 1 15.9 1 7.7 1-7.8 1-11.6 1 2.2 1 29.9V480z"/>
<path fill="url(#g43)" transform="translate(459) scale(1.1597 1)" d="M-88 480V417.6l 1-1.8 1-3.5 1 2.8 1 2.8 1 5.6 1 4.8 1 .2 1-2 1-1.9 1-4.5 1-7.8 1-5.6 1 1 1 8.1 1 2.6 1 2.6 1-5.5 1-10 1-9.1 1-6 1 .7 1-5.8 1 1 1-.9 1 17.8 1-18.1 1 13.2 1-1.3 1 19.5 1-.1 1 8.6 1-1.4 1 4.7 1-6.5 1-4.6 1 2.7 1 11.6 1 3.7 1-11.8 1-3.7 1-7.7 1 13.2 1-.8 1-3.5 1 8.1 1-8 1 3.1 1-2.7 1 4.4 1-19.3 1 17.9 1-5 1-13.1 1 .7 1 21.4 1-14.9 1-4.6 1 10.9 1 3.6 1-7.7 1-5.7 1 4.8 1-8.1 1-10 1 22 1-12.9 1-10.6 1 .7 1 22.1 1-.5 1-3.5 1-8.1 1-1.8 1 18.2 1-7.7 1 5 1-8.7 1-17.8 1 24.5 1 3.5 1 2.6 1-37.6 1 8.4 1-4.3 1 3.6 1 18.7 1 10.4 1-8.2 1 7.2 1-22.8 1 14.3 1 8.6 1 2.8 1 0 1-11.3 1 .6 1-6.1 1-18.7 1 5.9 1 11.7 1-1.7 1-24.3 1 1.8 1 30.8 1-3.3 1-12.7 1 27.4 1-37.7 1 7.1 1 5.5 1-2.9 1-12.5 1 17.3 1 2.9 1-8.2 1 10.8 1-18.8 1 18.1 1 14.5 1-8.9 1 6.4 1-2.8 1 13.7 1-10.4 1-2.1 1-20.5 1 .3 1 11.1 1 15.8 1 .6 1-5.2 1-10.4 1 1.5 1 6.2 1-9.7 1 13.3 1-9.7 1 4.5 1 7.8 1-24 1 11.6 1 15.4 1-.4 1 7.7 1-9.1 1-2 1 12.8 1-.5 1-19.5 1 2.5 1 17.1 1 4.4 1-2 1-20.1 1 8.5 1-4.9 1-13.5 1 12.5 1 4.2 1 .6 1-26.5 1 12.4 1-14.5 1-9.5 1 11.4 1-5.3 1-4.6 1-1.3 1 12.7 1 6.1 1-23.4 1-1.9 1 15.8 1 7 1-4.7 1-15.1 1 2.2 1 33.5V480z"/>
<path fill="url(#g44)" transform="translate(459) scale(1.1647 1)" d="M-88 480V419.6l 1-.6 1-2.7 1 2.4 1 1.1 1 3.7 1 3.8 1 .7 1-.7 1-.7 1-4 1-7.4 1-5 1 1.5 1 7.9 1 1.6 1 2.5 1-5.1 1-9.2 1-8.8 1-6.3 1-1.1 1-4.5 1 2.1 1 9.9 1 2.8 1-13.6 1 14.5 1-5.4 1 20.8 1 .9 1 8.8 1-3.3 1 .4 1-2.5 1-1.9 1 8.1 1 13.7 1-9.2 1-10.8 1-3.8 1-5.9 1 14.4 1 5.4 1-6.3 1 10.1 1-8.2 1-4.2 1-.9 1 5.3 1-21.2 1 14.2 1 .9 1-10.5 1-.8 1 17.7 1-17.2 1-4 1 11.3 1 4.9 1-5.7 1-1.8 1-1.3 1-8.1 1-5.1 1 18.9 1-10.4 1-13.4 1 0 1 26.2 1-4.3 1-.5 1-9.2 1-6.3 1 26.3 1-11.8 1-3.4 1-1.4 1-19.1 1 22.2 1 2.2 1 5 1-35.6 1 15.6 1-16.1 1 10.7 1 21.1 1 5.1 1-9.4 1 7.1 1-21.1 1 24.4 1-6 1 1.1 1 7.4 1-21.6 1 8.5 1-1.6 1-22.1 1 5.3 1 9.8 1-1.4 1-22.1 1 1.8 1 26.7 1 5.1 1-18.4 1 32.6 1-41.5 1 .7 1 16.2 1-18.5 1-1.2 1 17.1 1 3.9 1-9 1 12.6 1-20.6 1 22.6 1 11.3 1-7.7 1 5.3 1-4.2 1 11.3 1-12.3 1-3.3 1-15 1 1.3 1 8.3 1 20.8 1-5.4 1-4.3 1-8.8 1 5.7 1 7.3 1-7.7 1 6.2 1-5.9 1-2.3 1 10.2 1-23.3 1 13 1 13.7 1-1.3 1 7.4 1-1.7 1-16.9 1 17.2 1 1.5 1-16.5 1 2 1 15 1 9.7 1-3.2 1-17 1-.1 1-4.9 1-14 1 17 1 1.3 1 1.1 1-25.6 1 6.5 1-11.6 1-6 1 6.5 1 2.6 1-7 1 .4 1 10.6 1 4.2 1-13.1 1-7.5 1 9.3 1 7.9 1 1.8 1-19.2 1 5.9 1 26.3V480z"/>
<path fill="url(#g45)" transform="translate(459) scale(1.1697 1)" d="M-88 480V421.2l 1-1.7 1-3.5 1 1.9 1 1.3 1 4.8 1 4.6 1 1 1-.8 1-.8 1-3.9 1-6.7 1-4.2 1 1.7 1 7.7 1 1 1 1.8 1-5.9 1-10 1-8 1-6.6 1-1.5 1-5.3 1 2 1 3.1 1 12.8 1-18.7 1 11.9 1-2.6 1 22 1 3.1 1 12.4 1-3.4 1-.7 1-2.7 1 1.2 1 7.8 1 8.2 1-7.3 1-14.9 1-2.7 1-4.1 1 14 1 3.7 1-.6 1 10.9 1-12.3 1-2.6 1-1.3 1 16.7 1-35 1 15.5 1 3.7 1-14.5 1 7.9 1 11.6 1-23.1 1-5.8 1 22 1 .2 1-3.8 1-6 1 1.3 1-7.5 1-13.2 1 28.6 1-13.9 1-11.6 1 .3 1 20.3 1 7.2 1-4.8 1-2.7 1-13.1 1 28.6 1-15.3 1-1.2 1-5.6 1-18.8 1 25.9 1 .6 1 5.7 1-36.5 1 12.2 1-11.8 1 13.1 1 16.8 1 4.8 1-8.7 1 5.1 1-18.3 1 19 1 3.9 1 4.2 1 1.9 1-12.1 1 2.1 1-7.7 1-21.3 1 .6 1 14.9 1-2.5 1-21.5 1 2 1 22.7 1 9.9 1-13 1 27.1 1-42.3 1 6.2 1 12.8 1-16.5 1-5.4 1 20.1 1 3.7 1-9.9 1 14.6 1-24.6 1 18 1 9.3 1-4.2 1 9.5 1-5 1 16.3 1-15.3 1-1.5 1-19.1 1 4.9 1 6.1 1 20 1-5.9 1-1.9 1-17.5 1 15.5 1 4 1-14.5 1 11.1 1-7.4 1-1.9 1 10.9 1-21.5 1 14 1 11 1-3.2 1 12.5 1-11.6 1-2.6 1 11.4 1 1.6 1-16.6 1 7.1 1 7.5 1 12 1 1.9 1-21 1 .6 1-5.2 1-16.5 1 13.2 1 3.6 1-6 1-21.3 1 13.9 1-11.8 1-8.1 1 0 1 1.7 1-5.8 1 2.6 1 15.8 1 4.8 1-12.9 1-6.8 1 9.8 1 9.2 1 3.9 1-26.1 1 4.5 1 22V480z"/>
<path fill="url(#g46)" transform="translate(459) scale(1.1748 1)" d="M-88 480V424.7l 1-2.1 1-6.2 1-2.5 1 1.4 1 10.8 1-3.2 1-.6 1-.1 1 3.3 1-.3 1-3.8 1-2.3 1 2.9 1 8 1-1.1 1 .6 1-6.5 1-9.8 1-3.5 1-8.2 1-5.5 1-8.2 1 4 1 10.7 1 4 1-16 1 10.7 1-4.9 1 20.5 1 2 1 15.6 1-4.1 1 2.3 1-3.4 1 2.7 1 6.6 1 9.4 1-9.4 1-14 1-2.6 1-1.2 1 7 1 1.2 1 3.1 1 15.6 1-10 1-14 1-3.6 1 16.8 1-25.1 1 21.2 1-.2 1-14 1 5.6 1 7.1 1-16.4 1-2.5 1 9.5 1 8.2 1-2.4 1-7.2 1 1.5 1-8.4 1-14 1 28 1-9.1 1-15.5 1 0 1 22.3 1-1.5 1-3.9 1-.1 1-3.5 1 27.5 1-20 1-.9 1-7.8 1-17.4 1 24.4 1 .8 1 3.9 1-33.3 1 25.1 1-27.1 1 13.6 1 15.3 1 9.3 1-11.6 1 9 1-20.4 1 19.8 1 4.2 1 2.4 1 6.2 1-16.6 1-.8 1-2 1-23.3 1 6.2 1 8.3 1-4.1 1-18.9 1 4.3 1 21.6 1 4.1 1-15.6 1 31.2 1-39.3 1 29.5 1-9.3 1-22.3 1-.8 1 21 1 1.6 1-10.2 1 14 1-22.4 1 15.2 1 9.8 1-3.8 1 13.4 1-7.6 1 17.6 1-13.1 1-3.2 1-20.4 1 1.4 1 14.1 1 14.7 1-5.6 1-2.9 1-12 1 13.9 1-3.8 1-.2 1 6 1-5.8 1-9.5 1 12.9 1-15.7 1 7.9 1 3.5 1 5.2 1 10.7 1-8.3 1 2.6 1 9.8 1 .1 1-14.3 1 3.4 1-3.4 1 18.6 1 1.5 1-17.3 1-3.8 1-2.7 1-13.9 1 11.4 1-5.7 1 3.8 1-23.3 1 14.1 1-14.7 1-4.9 1-1.6 1-1.6 1-1.5 1 .3 1 20.2 1 5.8 1-13.6 1-12.1 1 15.8 1 2.6 1 7.7 1-26.1 1 6.5 1 18.1V480z"/>
<path fill="url(#g47)" transform="translate(459) scale(1.1800 1)" d="M-88 480V423.5l 1-1 1-3.2 1 1.2 1-1.7 1-.5 1 4.9 1 8.3 1-13.3 1-1.1 1 1.5 1-.5 1 1.6 1 6.2 1 9.6 1-1.6 1 .3 1-7.6 1-12.2 1-11.6 1-8.7 1-1.7 1-5.5 1 4.2 1-.8 1 29.9 1-30.8 1 9 1-1 1 20 1 5.5 1 15.7 1-5.4 1 2.8 1-7 1 3.8 1 6.9 1 9.8 1-8.8 1-12.3 1-.1 1-.1 1 4.6 1-.7 1 2.2 1 12.2 1-2.3 1-17.5 1-4.4 1 10 1-15.4 1 19.5 1-1.9 1-4 1-8.3 1 14.1 1-21.8 1 5 1-6.3 1 18.1 1-4.2 1-5.1 1 1.9 1-8.5 1-13.2 1 31.4 1-11.7 1-14.8 1-1.5 1 28.8 1-5.3 1-5 1-10 1 .7 1 28.1 1-17.6 1 1.5 1-3.8 1-20.2 1 19.9 1 .2 1 8.2 1-35 1 33.7 1-35.6 1 14.3 1 12.4 1 10.9 1-10.2 1 6.6 1-18.7 1 18.3 1 5.2 1-4.5 1 15.4 1-4.8 1-14.6 1-5.3 1-19.9 1 2.7 1 4.2 1 5.8 1-21.3 1 1.8 1 25.8 1 3.2 1-14 1 33 1-43.5 1 19.7 1 2.6 1-24.5 1-.7 1 19.1 1 3.5 1-11.7 1 11.4 1-18.4 1 7 1 19.8 1 .3 1 9.3 1-14.5 1 22 1-14.7 1-7.8 1-13.4 1 1.9 1 18.3 1 14.2 1-9.9 1-3.5 1-6.8 1 11.2 1-1.4 1-10.8 1 12.2 1-3.4 1-11.2 1 11.7 1-16.9 1 1.5 1 11.5 1 7.8 1 9.2 1-16.7 1 11.2 1 7 1-5.5 1-12.3 1 .6 1 6 1 22.6 1-2.2 1-27.1 1 5 1-3.8 1 2.6 1-4.5 1-6.2 1 1.5 1-22.3 1 12.3 1-10.7 1-5.9 1-1.6 1-1.6 1-1.2 1-1.7 1 17.9 1 6.5 1-10.5 1-5.5 1 8.9 1 2.1 1 5.2 1-21.7 1 7.8 1 15.4V480z"/>
<path fill="url(#g48)" transform="translate(459) scale(1.1852 1)" d="M-88 480V419.7l 1-2.2 1-3.5 1 1.7 1-1.1 1 8.7 1 6.8 1-2.4 1 2.8 1-11.8 1 1.4 1-1.4 1 .1 1 3.5 1 6.9 1-.8 1 1.6 1-5.4 1-9.2 1-8.6 1-8.4 1 .3 1-5.7 1 1.9 1-5.8 1 24.5 1-23 1 7.3 1 1.2 1 17.9 1 3.2 1 14 1-3.4 1 5.6 1-4.7 1 3.6 1 3.8 1 13 1-12.4 1-11.2 1 1.3 1 4.7 1 2.1 1-3.6 1 6.3 1 9.3 1-2 1-11.1 1-8 1-3.1 1-6.1 1 22.7 1 .2 1-13.2 1-4.5 1 16.4 1-23.3 1 1.1 1 3.1 1 14.7 1-3.6 1-6.6 1 4.2 1-7 1-17.8 1 29.4 1-8.7 1-14.9 1-2.3 1 30.5 1-5 1-11 1-10.7 1-.2 1 31.5 1-15.9 1 1.4 1-6.9 1-15.4 1 22.9 1-5.5 1 11.8 1-37 1 15.4 1-16.3 1 9.7 1 13.6 1 10.8 1-12.6 1 12.1 1-19.2 1 24.1 1-2.2 1-2.1 1 16 1-22.4 1 3.7 1 .2 1-26.5 1 2.7 1 2.7 1 9.6 1-24.8 1 2.9 1 23.2 1 4.2 1-14.2 1 27.7 1-37.4 1 36 1-16.8 1-21.4 1-.8 1 21 1 8.3 1-18.3 1 15.1 1-22.2 1 11 1 16.6 1-.5 1 4.1 1-10 1 21.7 1-14.5 1-3.6 1-16.8 1 .2 1 26 1 9.8 1-7.5 1-7.1 1 8.7 1-5.7 1-2.8 1-17.5 1 20.2 1-4.5 1-12.6 1 8.2 1-13.7 1 6.2 1 13.9 1 3.6 1 9.8 1-15.5 1 .6 1 14.3 1-6.3 1-10.9 1 4.6 1 5 1 17.1 1 .9 1-26.7 1 5.1 1-2.4 1-6.6 1 4.3 1-5.4 1-8.3 1-14.1 1 7.5 1-3.4 1-8.4 1-1.6 1-1.6 1-1.6 1-1.7 1 20.5 1 .6 1-4.3 1-5.3 1 10.2 1 5.7 1-3.6 1-18.7 1 4.7 1 18.9V480z"/>
<path fill="url(#g49)" transform="translate(459) scale(1.1905 1)" d="M-88 480V419.3l 1-3.9 1-4.4 1 1.9 1 .2 1 2.4 1 11.4 1 4 1-4.9 1-1.3 1-.2 1-3.7 1-1.4 1 4.1 1 7.4 1-.9 1 .8 1-6.6 1 10.9 1-29.9 1-7.7 1 2.3 1-7.5 1 1.7 1-5 1 21.3 1-15.9 1 6.2 1 .3 1 18.8 1 7.5 1 11.4 1-1.7 1 4.7 1-2.5 1 2.6 1 8.2 1 3.2 1-5.1 1-14 1-2.3 1 1.2 1-1.3 1 .6 1 6.3 1 10.3 1 3.7 1-10.4 1-13.7 1-.7 1-9.1 1 22.3 1 3.5 1-3.6 1-16.3 1 13.6 1-19.8 1-3.7 1 17.5 1 3.7 1-2 1-13.1 1 16.3 1-11.8 1-18 1 32.1 1-15.2 1-12.4 1-1 1 26.2 1-6.5 1-5.1 1-6.8 1-4.1 1 32.9 1-14.6 1-4.8 1 2.6 1-19 1 23.6 1-.6 1 2.3 1-35.4 1 9 1-12.4 1 8.8 1 12.2 1 15.1 1-8.6 1 11 1-21.5 1 24.5 1-1 1-5.5 1 14 1-17.6 1 4.5 1 1 1-26.5 1-.7 1-2.7 1 15.9 1-25.1 1 1.9 1 26.5 1 4.1 1-2.6 1 9.3 1-32.8 1 13.8 1-6 1-10.1 1-.8 1 22.2 1 1.6 1-15.3 1 16.4 1-20.9 1 8.1 1 12 1 10.1 1 3.8 1-12.7 1 20.9 1-11.8 1-2.2 1-18.6 1-.4 1 22.9 1 11.6 1-8.5 1-4.1 1 9.9 1-5 1-6 1-20 1 28.6 1-14.2 1-4.3 1 3.5 1-14.1 1 4.4 1 18.3 1 2.1 1 10 1-13.7 1-.4 1 13.2 1-7.1 1-9.8 1-1.7 1 7.8 1 20.7 1-1.9 1-26.6 1 4.9 1-6 1 5.4 1 2.9 1-8.9 1-12.3 1-12.5 1 8.6 1-5.5 1-7.4 1 1.5 1-1.7 1-4.8 1-1.6 1 20.5 1 4.3 1-10.8 1-10.8 1 18.5 1 6.7 1-9.7 1-17.1 1 2.1 1 23.2V480z"/>
<path fill="url(#g50)" transform="translate(459) scale(1.1959 1)" d="M-88 480V419.1l 1-5.1 1-4.9 1 2.2 1 1 1 6.6 1 14.2 1-2.2 1-11.4 1 3.8 1 1.3 1-1.3 1 .3 1 5.8 1 2.8 1-2 1 .8 1-5.5 1 1.5 1-14.9 1-11.6 1 2 1-9.2 1 4.2 1-4.9 1 21.2 1-16.8 1 6.4 1 1.7 1 18.3 1 10 1 3 1-1 1 6.5 1 .1 1-.9 1 1 1 10.4 1-.2 1-9.6 1-5.9 1-8.1 1 6 1 .6 1 4.4 1 13.1 1-.2 1-12.1 1-8.4 1 1.6 1-10.5 1 19.6 1-2.2 1-12.8 1-3.4 1 17 1-17.8 1-5.9 1 12.5 1 11.1 1-3.9 1-16.6 1 14.6 1-.7 1-22.1 1 29.5 1-13.4 1-10.5 1-4.9 1 24.6 1-6.8 1 1 1-10.2 1-4.8 1 29.6 1-8.4 1-8 1 .1 1-15.6 1 25.5 1-4.8 1-.8 1-30.6 1 6.5 1-9.9 1 14.7 1 12 1 13.2 1-14.6 1 12.5 1-20.8 1 22 1 1.4 1-4.3 1 13.7 1-17.1 1 7.4 1 2.3 1-26.7 1-3.9 1-1.3 1 14.6 1-25.6 1 3.7 1 27 1 2.7 1-2.9 1 8.4 1-34.3 1 13.3 1-8.2 1-4.9 1-3.3 1 25.3 1 1.7 1-15.8 1 17.6 1-24.9 1 8 1 8.5 1 25.7 1-12 1 5.8 1 4.7 1-11.4 1-.7 1-20.6 1 6.6 1 17.7 1 15.2 1-12.1 1-3.4 1 5.5 1-12 1 1.8 1-17.3 1 26.7 1-10.6 1-4.1 1 17.4 1-28.7 1 2.7 1 19 1-3.3 1 15.9 1-14.3 1 4.1 1 8.4 1-6.5 1-7.6 1 .4 1 3.7 1 20.6 1 4 1-36.7 1 8.2 1-8.8 1 10.9 1-3.3 1 .8 1-16 1-15 1 3.7 1 3.5 1-11.6 1 .8 1-3 1-2.8 1-1.7 1 19.9 1 10.4 1-13.4 1-9.6 1 9.2 1 13.6 1-11.6 1-15.8 1 .8 1 23.1V480z"/>
<path fill="url(#g51)" transform="translate(459) scale(1.2013 1)" d="M-88 480V420l 1-5 1-5.4 1 1.4 1 .8 1 11.5 1 14.5 1-4.8 1-12 1 1.4 1-1 1-2.4 1 .5 1 6.9 1 6.9 1 .6 1 1.7 1-6.6 1-7.8 1-14.3 1-7.9 1 2.4 1-7.2 1 2.6 1-3.4 1 23.2 1-15.6 1 5.5 1 1.8 1 17.8 1 9.1 1 2.7 1-2.5 1 5.8 1 .5 1-.4 1 5.1 1 23.1 1-13.9 1-9.5 1-2.5 1 1.7 1-6.7 1 .7 1 2.1 1 15.3 1 .5 1-13.4 1-7.2 1 10.2 1-23.2 1 19.5 1 6.3 1-1.4 1-23.7 1 17.2 1-15.5 1-7.5 1 4.3 1 20.5 1-9.2 1-16.5 1 16.2 1 1.7 1-20.1 1 28.5 1-13.6 1-10.9 1-3.4 1 24.3 1-12.7 1 2.6 1-7.2 1-3.2 1 27.2 1-4.5 1-2 1-5.1 1-14.3 1 21 1-1.5 1 .1 1-33.9 1 3.5 1-6.9 1 12.8 1 8.8 1 15.9 1-10.5 1 12.1 1-21.9 1 22.3 1-2.8 1 1.9 1 17.1 1-23.4 1 10.4 1 4.1 1-29.8 1-8.3 1-.9 1 13.1 1-19.4 1 7.4 1 23.1 1-3.8 1-3 1 9.8 1-30.9 1 11.7 1-4.6 1-9 1-1.3 1 24.9 1 2.9 1-13.7 1 8.7 1-18.8 1 4.3 1 9.4 1 17.7 1 1.7 1 5.5 1 3.7 1-11.4 1-4.7 1-18.3 1 14.4 1 8.4 1 14.2 1-12.7 1 13.7 1-7.7 1-8.6 1 .7 1-20.5 1 23.6 1-7.2 1-8.6 1 5.2 1-7.7 1-4.8 1 17 1 .4 1 13.5 1-7.8 1 .8 1 8.6 1-8.7 1-9.1 1-4.5 1 10.5 1 21.6 1-2.2 1-37.7 1 12.8 1-14.2 1 26.1 1-8.3 1-2.2 1-14.8 1-13.6 1 8.5 1-1.1 1-13.1 1 3.1 1-2.4 1 1.5 1-9 1 20.3 1 12.2 1-14.6 1-12 1 8.8 1 13.5 1-4.8 1-22.2 1 2.1 1 16.3V480z"/>
<path fill="url(#g52)" transform="translate(459) scale(1.2068 1)" d="M-88 480V417.4l 1-5.1 1-4.7 1 2.6 1 1.6 1 10.5 1 20.6 1-1.3 1-12.6 1-2.8 1-.5 1-2.9 1-.5 1 5.5 1 6.9 1 .3 1 .8 1-7.7 1-10.2 1-12 1-6.2 1 4.2 1-7.7 1-.8 1-3.7 1 19.7 1-7.2 1 8 1 3.4 1 12.9 1 13.9 1-6.9 1-.8 1 8.8 1 4.9 1 2.5 1 7.5 1 .2 1 5.1 1-13.3 1-5.1 1-7.2 1 .1 1 4.1 1 2.7 1 13.4 1 1.3 1-15.5 1-9.7 1 5.8 1-14.1 1 16.5 1 8.9 1-3 1-18.7 1 12.9 1-12.2 1-9.3 1-1 1 20.6 1-2.2 1-16.5 1 9.7 1 6.3 1-20.8 1 34 1-23.5 1-2.2 1-7 1 20.3 1-8.8 1-.7 1-6.9 1 0 1 28.3 1-5.1 1-6.3 1 1.2 1-21.1 1 18.4 1 2.1 1 2.2 1-32.7 1 5.9 1-7.3 1 11.5 1 7.8 1 14.4 1-13 1 10 1-15.4 1 18.6 1 6.1 1-8 1 14.5 1-16.9 1 11 1 2 1-27.3 1-6.6 1-3.3 1 15.8 1-25.2 1 14.9 1 21.9 1 4.6 1-18.5 1 16.9 1-33.8 1 14.9 1-3.3 1-14 1-.8 1 21.5 1 2 1-4.4 1 6.2 1-21.4 1 5.1 1 6.8 1 6 1 17.2 1-3.8 1 6.1 1-11.7 1 2.1 1-19.9 1 14.6 1 3.6 1 15.7 1-11.9 1-5.7 1 12.2 1-8.5 1-.3 1-17.8 1 19.8 1-4 1-11.5 1-.3 1 8.7 1-11.7 1 20.8 1-1.3 1 12.2 1-5.1 1-3.9 1 9.4 1-6.6 1-7 1-5.8 1 9.2 1 22 1-3.8 1-36.3 1 10.4 1-14.8 1 22.9 1-8.7 1 1.7 1-13.9 1-14.5 1 17.4 1-4.6 1-18.2 1 5 1-1.3 1 3 1-13.7 1 22.9 1 7.4 1-15.2 1-7.6 1 4.7 1 17 1-7.6 1-20.5 1 2.1 1 14.1V480z"/>
<path fill="url(#g53)" transform="translate(459) scale(1.2123 1)" d="M-88 480V416.4l 1-3.7 1-2.5 1 4.1 1 1.1 1 2.6 1 6.7 1 1.4 1-3.2 1-.7 1 2 1 1.4 1 9.9 1 2.6 1 7.7 1-1.5 1-.4 1-9.5 1-13 1-13.1 1-7.2 1 3.5 1-6.7 1 1.7 1-7.7 1 11.8 1-4.6 1 13.6 1 4.9 1 14.3 1 17.2 1-7.8 1-1 1 7.1 1 3.8 1 .6 1 7.7 1 1.1 1 6.9 1-16.2 1-7.9 1-6.5 1 3 1 12.2 1-6.8 1 13.1 1 9.2 1-21.5 1-12.8 1 5.5 1-10 1 13.5 1 13.6 1-5.6 1-16.6 1 16 1-13.4 1-14.8 1 7.3 1 13 1-1.1 1-15.1 1 10.8 1 4.3 1-19.7 1 32 1-27.9 1-1.6 1-2.1 1 21.6 1-6.8 1-1.7 1-9.9 1 .8 1 22.4 1-2.7 1 3.9 1-7.6 1-21.3 1 24.5 1-4.8 1 .9 1-28.3 1 4.4 1-5.3 1 9.9 1 4.5 1 19.6 1-9.8 1 0 1-9.3 1 18.3 1 12.8 1-11.4 1 10.5 1-11.6 1 1.4 1 4.7 1-21.5 1-5.3 1-6.9 1 12.2 1-14.2 1 9.5 1 18.7 1 .2 1-12.6 1 12.4 1-30.7 1 18.7 1-12 1-9 1-.9 1 22.9 1 0 1-3.8 1 4.7 1-19.9 1 7.7 1 10.7 1 1.1 1 20.8 1-8.6 1 6.6 1-7.6 1 2.4 1-25.2 1 10.4 1 .9 1 24.6 1-9.7 1-15.6 1 28.8 1-21.8 1 3 1-18.7 1 21.9 1-5.2 1-8.2 1-3.4 1 11.5 1-15 1 25.3 1-7.2 1 18.2 1-12.2 1-4.4 1 11.1 1-13.5 1 .3 1-10.1 1 13 1 23.9 1-9.5 1-30 1 9.3 1-12.1 1 18.7 1-7.3 1-.7 1-12.5 1-13 1 18.5 1-4.9 1-20.6 1 4 1 1.3 1-4.1 1-8.3 1 20 1 11.5 1-17.4 1-1.6 1 3 1 20.6 1-14.5 1-20.7 1 2 1 13.1V480z"/>
<path fill="url(#g54)" transform="translate(459) scale(1.2179 1)" d="M-88 480V419.4l 1-2.3 1-.7 1 5.7 1 1.7 1 1.4 1 6.4 1 18.9 1-17.8 1-9.5 1-3.8 1-1.5 1 3.5 1 13.7 1 7.6 1 1.1 1 .3 1-9.9 1-11.2 1-17.1 1-3.7 1 2.1 1-5.2 1 3.8 1-10.2 1 5.8 1 2.3 1 16.7 1 3.8 1 12.2 1-1 1 6.6 1 1.3 1 9.1 1 2.8 1 .1 1 8.9 1 2.6 1 4.9 1-17.4 1-6.5 1-7.2 1-3.9 1 12.4 1-2.2 1 19.4 1 7.9 1-11.3 1-20.8 1 9.4 1-17.1 1 16.4 1 16.1 1-22 1-6 1 18 1-10.4 1-19.4 1 7.4 1 19.4 1-5.5 1-15.5 1 16.1 1 1.8 1-22.9 1 32 1-23.5 1-8.3 1-1 1 21.8 1-3.7 1-8.3 1-6.6 1 .8 1 19.7 1 2.8 1 6.9 1-12.3 1-20 1 28.2 1-10.8 1 .1 1-27.5 1 19.3 1-15.4 1 5.1 1 3.4 1 22.4 1-7.4 1-4.9 1-8.4 1 21.1 1 8.3 1-9.8 1 9.5 1-2.7 1-1.6 1-4.8 1-19 1-8.4 1-4.4 1 14 1-13.4 1 3.4 1 20.2 1-2 1-7.1 1 14.7 1-31.7 1 17.7 1-12.9 1-7.2 1-.8 1 22.4 1 1.6 1-9.2 1 6.6 1-17.5 1 1.7 1 14.7 1-.6 1 23.1 1 2.1 1-1.4 1-10.6 1 3.9 1-25.1 1 6.7 1 10.7 1 19.7 1-18.1 1-10 1 30.1 1-23.1 1 4.3 1-18.5 1 24.4 1-10.5 1-5.8 1-6.6 1 10 1-3.7 1 24.5 1-9.7 1 15.4 1-10.3 1-4 1 8.5 1-4.6 1-5.5 1-13.3 1 15.6 1 23.5 1-3.6 1-32.8 1 4.7 1-17.7 1 16.7 1-1.4 1-13.6 1 4.6 1-18.6 1 18.2 1-.1 1-22.9 1 1.8 1 5 1 2.7 1-13.4 1 15.3 1 12.9 1-17.1 1-10.8 1 14.4 1 18.6 1-10.3 1-25.6 1 2 1 14.2V480z"/>
<path fill="url(#g55)" transform="translate(459) scale(1.2236 1)" d="M-88 480V418.4l 1-1.5 1 1.5 1 8.4 1 3.2 1 1.4 1 2.7 1 7 1-6.8 1-5.9 1 .3 1-.5 1 3.2 1 7.3 1 10.5 1-1.3 1-.3 1-9.7 1-.2 1-27.2 1-6.7 1 4.6 1-5.4 1 2.8 1-11.4 1 8 1 .2 1 15.5 1 4.8 1 11.8 1-2.7 1 8.8 1 5.2 1 8.5 1 1.3 1-3.1 1 13.8 1-2.4 1 4.7 1-14 1-6.9 1-8.4 1-6.6 1 11.4 1-3.4 1 22.6 1 11.9 1-10.2 1-24.5 1 12.9 1-19.4 1 20 1 13.1 1-17.9 1-5.9 1 12.2 1-14.2 1-14.6 1 3.8 1 13.6 1 7.3 1-17.9 1 17.1 1-4.3 1-23.3 1 34.5 1-23.9 1-7.7 1 .9 1 24.2 1-3.2 1-6.2 1-8.5 1-2.2 1 19.4 1 1.8 1 11.3 1-16.4 1-23.9 1 34.8 1-12.8 1-6.2 1-20.9 1 17.9 1-21.3 1 8 1 10.2 1 21 1-10.8 1 .7 1-11.5 1 14.2 1 13.6 1-7 1 11.2 1-3 1-7.3 1-.1 1-24.3 1-2.9 1-9.2 1 12.9 1-10.3 1 6.8 1 20.1 1-1.2 1-3.1 1 9.5 1-33.7 1 20.2 1-12.5 1-10.2 1-.8 1 23.3 1 .7 1 1.1 1-3.8 1-17.4 1 1.4 1 10 1 .6 1 25.8 1-13.5 1 11 1-4.5 1-.8 1-22.2 1 5.8 1 20.4 1 11.1 1-14.4 1-12.9 1 24.3 1-16.8 1 4 1-19.8 1 30.8 1-21.9 1-1.9 1-7.4 1 11.4 1-2.9 1 19.8 1-9.5 1 18.4 1-11.6 1-7.3 1 12 1-3.6 1 1.9 1-16.3 1 14.5 1 16.2 1-7.5 1-31.4 1 15.2 1-23.3 1 22.9 1-7.1 1-13.5 1 9.1 1-21.2 1 14.7 1 6.2 1-25.9 1-1.8 1 4.9 1 8.1 1-12.1 1 14.2 1 8 1-8.6 1-15.6 1 11 1 21.7 1-12.5 1-24.1 1 7 1 19.8V480z"/>
<path fill="url(#g56)" transform="translate(459) scale(1.2294 1)" d="M-88 480V422.1l 1-.7 1 .6 1 6.5 1 1.8 1 1.4 1 3.3 1 4.9 1-4.2 1-7.4 1-2.8 1-2.3 1 3.1 1 8.4 1 11 1-.8 1-.2 1-8.9 1-9.4 1-15.7 1-5.3 1 3 1-1.1 1-.1 1-11.2 1 7.5 1 .9 1 24.7 1-8.6 1 23.6 1-9.3 1 12.3 1 3.6 1 4.4 1 .3 1-2.9 1 9.5 1 11.3 1-6.5 1-13.2 1-6.6 1-6.5 1-5.6 1 14.1 1-4.4 1 23.1 1 12.3 1-6.6 1-31.8 1 21.6 1-26.3 1 22.9 1 9.5 1-15.9 1-6.8 1 11.5 1-10.4 1-18 1-.7 1 22.6 1-8.3 1-9.7 1 14.9 1-4.2 1-18.1 1 29.2 1-25.4 1-1 1 .9 1 22 1-2.2 1 1.3 1-14.8 1-2.2 1 17 1 5.9 1-5.2 1 .3 1-22.4 1 32.7 1-16.1 1-2.8 1-22.2 1 10.1 1-13.5 1 8.1 1 8 1 18.7 1-5.3 1 4.5 1-16.3 1 22.2 1 10.2 1-5.8 1 11.1 1-8.7 1-6.7 1-1.5 1-23.5 1-7.1 1-5.2 1 17.3 1-15.7 1 11.1 1 18.5 1-9.8 1 5.2 1 14.2 1-36.1 1 16.2 1-15.3 1-7.1 1-.9 1 24.4 1-.5 1 5.4 1-5.4 1-20 1 1.4 1 7.7 1 7 1 22.3 1-7.4 1 3.6 1-3.8 1-.6 1-22.4 1 4.8 1 16.3 1 18.2 1-16.3 1-13.3 1 13 1-10.3 1 8.4 1-19.1 1 20.3 1-11.5 1-2.5 1-6.7 1 8.7 1-9.2 1 27.3 1-8.5 1 20.9 1-13.2 1-6.8 1 13.5 1-3.8 1 .3 1-17.2 1 16.7 1 14.4 1-9.4 1-34.5 1 17.3 1-19.8 1 6.5 1 6.3 1-15.2 1 18 1-25.2 1 16 1 3.9 1-26.4 1-1.8 1 4.6 1 7.6 1-12.7 1 13.9 1 4.8 1-5.8 1-12.5 1 17 1 11.9 1-11.3 1-22.1 1 9.1 1 15V480z"/>
<path fill="url(#g57)" transform="translate(459) scale(1.2352 1)" d="M-88 480V431.3l 1-1.5 1-1.4 1 4.9 1 2 1 3.8 1 2 1 5.1 1-10.3 1-9.3 1-.5 1-.1 1 3.5 1 6.9 1 8.6 1-.8 1 1.3 1-7 1-12 1-13.8 1-5.6 1-2 1 .4 1 5.1 1-12.9 1 8 1 .6 1 17.2 1 .3 1 20.1 1 .4 1 11.4 1 1.7 1 4.1 1-1.5 1-4.7 1 11.7 1 3.9 1-1.9 1-12.8 1-1.9 1-5.6 1-11.1 1 16 1-12.1 1 21 1 17.5 1-3.8 1-32.1 1 16.7 1-21.1 1 20.3 1 10 1-13.6 1-6.6 1 17.8 1-16.5 1-18.6 1 3.2 1 20.8 1-17.7 1-2.1 1 15.9 1-5.2 1-18.4 1 25.3 1-23.4 1 1 1 .9 1 21.9 1-2.1 1-2 1-14.4 1 .8 1 16.7 1 6.8 1-9.2 1 .4 1-23.1 1 35.8 1-6.5 1-6.5 1-27.2 1 8.7 1-10.4 1 .5 1 11.7 1 19.4 1 5.9 1-7.3 1-14.1 1 25.6 1 6.2 1-9 1 12.9 1-5 1-10.4 1-5.1 1-14.5 1 .6 1-14.6 1 12.6 1-16.9 1 16.7 1 21.6 1-20 1 7.2 1 12.4 1-34.5 1 19.9 1-15.7 1-6.7 1-.9 1 25.3 1 3.7 1-3.2 1 1.7 1-23.6 1 1.4 1 6.6 1 15.6 1 11.6 1 .8 1-3.5 1-6.3 1 6.9 1-25.4 1 2.2 1 19.9 1 18 1-17.6 1-7.5 1 17.2 1-14.5 1 4.3 1-20.3 1 14.7 1-3.6 1-3.5 1-5.5 1 10.3 1-10.7 1 21.3 1-7.4 1 24.8 1-12.2 1-15.2 1 26.4 1-14.1 1 7.6 1-21.4 1 22.6 1 9.5 1-10.1 1-31.8 1 19.3 1 .5 1-26.1 1 13.2 1-8.2 1 14.6 1-28.9 1 13.6 1-1.7 1-18.3 1 2.3 1 4.7 1 3.8 1-9.4 1 14.2 1 .5 1-6.8 1-15.8 1 23.3 1 12.5 1-13.8 1-22 1 12.2 1 9.1V480z"/>
<path fill="url(#g58)" transform="translate(459) scale(1.2411 1)" d="M-88 480V428.3l 1-2.1 1-.6 1 8.4 1 2.2 1 3.9 1 1.4 1-4.1 1 .8 1-7.3 1-8.4 1-2.9 1 1.7 1 6.5 1 14.1 1-.9 1 3 1-6.2 1-12.7 1-11.9 1-4.4 1-2.1 1-.7 1 8 1-12.6 1 21.8 1-12.6 1 26.5 1-10.4 1 12.1 1 9.2 1 7.7 1 1.5 1 1.5 1 1.2 1-3.7 1 13.4 1-4.3 1 1.4 1-8.3 1-3.8 1-8.1 1-6.2 1 14.6 1-10.2 1 24.8 1 10.5 1-3.7 1-29.3 1 13.5 1-18 1 22.2 1 4.6 1-10.2 1-6.2 1 16.2 1-16.1 1-17.6 1 12 1 11 1-18.3 1-.4 1 6.9 1 1.6 1-16.5 1 27 1-24.9 1 1.8 1 .2 1 18.3 1 2.6 1-.5 1-17 1 .9 1 19.2 1 3.5 1-9.9 1 1.9 1-21.8 1 32.4 1-1 1-10.8 1-26.4 1 12.6 1-5.2 1-7.4 1 7.6 1 26 1 10.1 1-14.8 1-14.3 1 22.3 1 10.7 1-12.5 1 12.4 1-5.3 1-10.3 1 3.7 1-14.5 1-7.7 1-13.4 1 7.9 1-14 1 15.2 1 23 1-18.3 1 9.4 1 9.3 1-32.3 1 15.2 1-13 1-4.7 1-.9 1 24.1 1 5.5 1 1.2 1 1.2 1-28.2 1 1.4 1 9.5 1 21.1 1 2.8 1 .2 1 1.9 1-5.7 1 .8 1-24.3 1 3.2 1 17.5 1 23.8 1-19.9 1-12.3 1 11 1-6 1 8.3 1-24 1 5.9 1 6.6 1 8 1-14.3 1 8.7 1-12.4 1 11.9 1-.9 1 27.7 1-9.6 1-20.4 1 27.1 1-7.2 1-.6 1-23.1 1 30.7 1 4.8 1-10.5 1-30.9 1 18.8 1-.4 1-23.3 1 6.2 1 5.1 1 16.6 1-30.9 1 6.6 1-4.6 1-10.8 1-3.6 1 3.1 1 5.2 1-3.8 1 7.5 1 .4 1-6.4 1-13 1 18.1 1 12.1 1-7 1-20.4 1 9.4 1 9.9V480z"/>
<path fill="url(#g59)" transform="translate(459) scale(1.2471 1)" d="M-88 480V432.4l 1-.4 1 .1 1 6 1 1.6 1 .3 1-2.2 1-1.3 1 17 1-24.1 1-3 1-1.7 1 3.2 1 8.5 1 11.4 1 .8 1 1.4 1-7 1-12.3 1-11.5 1-7.8 1 .1 1-3.6 1 5.5 1-8.6 1 21.1 1-12 1 24.4 1 1 1 .7 1 3.9 1 9.2 1 4.7 1 1.1 1 2 1-1.9 1 18 1 3 1-8.4 1-10.3 1-.9 1-1.4 1-15.9 1 18.1 1-10 1 27.2 1 1.6 1 0 1-29.3 1 13.6 1-19 1 27.2 1 2.8 1-26.5 1 2 1 21.7 1-18.1 1-16.1 1 11.7 1 11.2 1-17.4 1 3.1 1 2.2 1 2.4 1-13 1 34 1-34 1 4.3 1-3.2 1 20 1 2 1-4.2 1-15.1 1 .8 1 13.9 1 10.2 1-9.7 1 2.6 1-25.8 1 34.4 1-6.8 1-7.8 1-20.1 1 12.2 1-5.9 1-12.7 1 8.1 1 22.2 1-2.6 1 4.9 1-15.2 1 22.3 1 12.6 1-12.3 1 5 1-2.3 1-12.8 1 8.1 1-14.6 1-12.4 1-9 1 5.7 1-11.1 1 11.1 1 27.8 1-24.9 1 14.7 1 9.5 1-32 1 14.6 1-12.6 1-4.5 1-.9 1 22 1 6.5 1 3.9 1 1.9 1-30.6 1 1.5 1 11.2 1 23.1 1-1.3 1-7 1 4.5 1 2.8 1-2.9 1-22.4 1 .4 1 17.7 1 21.7 1-19.5 1-7.6 1-2.5 1 5.5 1 9.7 1-25.6 1 8.1 1 4.4 1 21.2 1-23.3 1 4.7 1-10.2 1 9 1 7.2 1 18.4 1-6.6 1-23.3 1 27.8 1-9.6 1 3.9 1-21.5 1 29.8 1 0 1-3.9 1-35.7 1 20.1 1-4.4 1-25.8 1 12.9 1 24 1-6.8 1-29.7 1 6.9 1-7 1-10.8 1-.6 1-.5 1 10.2 1-2.2 1 7.6 1-1.8 1-12.8 1-12.2 1 21.9 1 9.2 1-5.3 1-14.6 1 2.6 1 7.1V480z"/>
<path fill="url(#g60)" transform="translate(459) scale(1.2531 1)" d="M-88 480V431.9l 1-.3 1 3.6 1 13.2 1-7.5 1-3 1 2.9 1-2.8 1 6.7 1-18.3 1-3.6 1-.5 1 5.1 1 13.8 1 8.7 1 0 1 1.1 1-7.2 1-12 1-11 1-7.6 1 2.6 1-7.5 1 4.1 1-4.2 1 22.6 1-4.5 1 13.7 1 6.5 1-1.1 1-.9 1 9.2 1 9.4 1-1.3 1 .5 1-2.3 1 16.1 1 3.5 1-6.6 1-9.3 1-5.6 1-6.5 1-5.7 1 23.9 1-22.1 1 32.3 1 0 1 0 1-27.3 1 17.4 1-21.9 1 30.3 1-.3 1-29.7 1 6.7 1 21.3 1-20 1-15.3 1 9.7 1 15.8 1-21.7 1 4.5 1 14.6 1-12.2 1-6.5 1 28.8 1-29.5 1 .5 1 7.1 1 13.1 1 0 1-4 1-10.6 1-4.5 1 8 1 12.1 1-2.9 1-.4 1-25.6 1 32.9 1-9.5 1-6 1-15.1 1 8.1 1-2.2 1-17.2 1 8.8 1 31.9 1-8.5 1 6.3 1-18.7 1 23.3 1 8.4 1-14.4 1 7.4 1 4.3 1-19 1 10.8 1-12.5 1-16.6 1-4.6 1 11 1-19.2 1 9.2 1 30.2 1-18.2 1 13.3 1 4.8 1-33 1 20 1-18.5 1-4.1 1-.9 1 24.4 1 3.2 1-.3 1 8.9 1-32.4 1 1.4 1 7.5 1 19.4 1 13.2 1-6.9 1 0 1 2.2 1-6.6 1-17.7 1-.5 1 12.8 1 21.4 1-20.8 1-15.7 1 13.2 1 2.1 1 7.5 1-23.3 1 7.9 1 6.7 1 16.9 1-15.6 1-.9 1-12.1 1 16.6 1 5.2 1 7.5 1-3.8 1-18.9 1 21.9 1-3.8 1 7.1 1-27.7 1 30 1 0 1 0 1-39.2 1 22.2 1-18.8 1-11.6 1 13.3 1 21.6 1-6.9 1-31.2 1 9 1 .1 1-9.6 1-8.8 1 .6 1 28.4 1-21.6 1 12.8 1 3.2 1-23.7 1-10.3 1 22.4 1 3.5 1-1.3 1-13 1-2 1 1V480z"/>
<path fill="url(#g61)" transform="translate(459) scale(1.2592 1)" d="M-88 480V433l 1-1.6 1-.2 1 7.8 1 11.7 1-6.4 1-3.1 1 .4 1 17.6 1-27.7 1-3.5 1 .6 1 6.7 1 11.1 1 10.8 1-1.9 1 .3 1-6.5 1-8 1-9.1 1-11.1 1 2.4 1-7.3 1 9.9 1-13.2 1 14 1-8.9 1 26.7 1 2.8 1 1 1 .3 1 10.1 1 12.1 1 1.6 1 4.3 1-2.4 1 5.7 1 0 1-2.8 1-14 1-2.2 1-5.9 1-6.3 1 17.9 1-12.1 1 25.4 1 0 1 0 1-19.9 1 14.9 1-23.8 1 28.8 1 0 1-22.4 1-.1 1 21 1-16.8 1-17.5 1 1.4 1 24.9 1-20.7 1 2.3 1 23.7 1-17.6 1-14.9 1 36.7 1-30.6 1-5.4 1 17.9 1 6.6 1-1.6 1-2.8 1-8.5 1-6.2 1 14.1 1 7 1-3.4 1 .3 1-26.8 1 34.1 1-16.5 1-2.4 1-8.6 1 6.6 1-2.1 1-20 1 13.8 1 34.5 1-18.4 1 8 1-18 1 20.2 1 8.2 1-21.2 1 20.7 1 .5 1-18.1 1 16.7 1-11.8 1-23.6 1 2.3 1 2.6 1-17.7 1 11.6 1 27.1 1-19.1 1 2.5 1 12.1 1-28 1 15.7 1-15.7 1-2.6 1-.9 1 23.7 1 1.2 1 2.3 1 6.9 1-30.4 1 1.5 1 8 1 17.6 1 8.3 1 2.7 1-6.3 1 5.5 1-4.4 1-22.4 1-.3 1 15.9 1 17.1 1-18.6 1-13 1 31.6 1-5.4 1-.2 1-28.5 1 5.7 1 9.4 1 16.8 1-22.2 1 5.7 1-13.6 1 17.1 1 4.9 1 10.3 1-14 1-10.6 1 23.9 1-2.1 1 2.8 1-27.1 1 27.1 1 0 1 0 1-36.5 1 22.2 1-17 1-13.5 1 7.9 1-.2 1 23.1 1-34 1 4.3 1 7.6 1-4 1-14 1-5.8 1 31.1 1-15.3 1 .7 1 2.1 1-18.7 1-8.4 1 16.3 1 9.6 1 .2 1-11.4 1-6.5 1 5.4V480z"/>
<path fill="url(#g62)" transform="translate(459) scale(1.2654 1)" d="M-88 480V431.3l 1-4.9 1-4.8 1 7.8 1 12.4 1-.6 1 6.9 1 .7 1 2.6 1-15.2 1-6 1 .8 1 7.2 1 18.1 1 4.8 1-2.3 1 .6 1-5.8 1-9.8 1-9.6 1-7.6 1 2.9 1-9.3 1-1.2 1-11.3 1 9.4 1 .2 1 20.4 1 .8 1 2.4 1 7.8 1 9.3 1 13.7 1 1.2 1 7.1 1-.5 1 .5 1 0 1 0 1-15.6 1-.5 1-4.4 1-7.8 1 28.3 1-18.6 1 18.6 1 0 1 0 1-9 1 6.4 1-22.5 1 25.1 1-2.2 1-12.5 1-3.8 1 17.5 1-13 1-18.8 1 .4 1 16 1-8.2 1 .4 1 12.7 1-8.2 1-11.3 1 31 1-30.2 1-2.7 1 20.5 1 2.2 1 8.3 1-7.3 1 3.8 1-21.9 1 13 1 8 1-6.6 1 3.5 1-26.7 1 34.5 1-17.1 1 1.8 1-3.8 1-2.9 1-2.4 1-18.9 1 10.9 1 24.3 1-8.6 1 12.3 1-18.3 1 22.3 1 2 1-20.6 1 18.2 1 2.4 1-12.1 1 12.1 1-10.1 1-22.5 1 6.1 1 5.5 1-25.4 1 12.8 1 27.6 1-25.7 1 13 1 11.3 1-32.8 1 16.3 1-15.2 1-3.8 1-.9 1 26.8 1 .2 1 3.2 1-.9 1-24.6 1 4.4 1 5.9 1 17.9 1 5.4 1-1.9 1 4.1 1-3.9 1 .2 1-21.2 1-4.1 1 14.7 1 17.6 1-14.9 1-16.6 1 25.9 1 .2 1 4.8 1-30.4 1 4.8 1 14.7 1 7.1 1-18.5 1 12.5 1-14.7 1 16.8 1-1.3 1 9.6 1-3.1 1-18.5 1 21.6 1 0 1 0 1-24.2 1 24.2 1 0 1 0 1-33.8 1 12.5 1-13.3 1-7.6 1 8.4 1 16.4 1 10.2 1-36.9 1 4.1 1 2.6 1 3.1 1-9.6 1-8.6 1 15 1-6.3 1 2.7 1 6.4 1-21.6 1-7.7 1 12.4 1 11.7 1-4.1 1-10.2 1-7.5 1 4.7V480z"/>
<path fill="url(#g63)" transform="translate(459) scale(1.2717 1)" d="M-88 480V439.7l 1 1 1-10.3 1-2.4 1 3.9 1 8.2 1 8.8 1 1.6 1 2.5 1-16.8 1-6 1-.4 1 6.8 1 23.6 1 1.3 1-1.4 1 .6 1-5.3 1-8.6 1-8 1-4.3 1-2.7 1-10.1 1-2.7 1-10.9 1 7.1 1 5.5 1 26.2 1 11.5 1-13.1 1 1.4 1 7.9 1 14.9 1 5.3 1 5.2 1 0 1 0 1 0 1 0 1-12.5 1-.6 1 .8 1-13.1 1 21.9 1-7.2 1 10.7 1 0 1 0 1-5.7 1 5.2 1-18.5 1 19 1 0 1-19.8 1-.9 1 20.6 1-16.2 1-13.4 1-.2 1 16.4 1-6.4 1 9 1 7.5 1-13 1-12.3 1 28.7 1-29.7 1 0 1 21.3 1-.5 1 8.9 1-4.7 1-8.5 1-4.9 1 13.3 1 4.8 1-8 1 2.5 1-27.3 1 25.3 1-13.4 1 4 1 16.9 1-18.6 1-7.3 1-11.5 1 6 1 23.4 1-.4 1 8 1-21.2 1 15.8 1 5.8 1-15.9 1 15.9 1 0 1-11.2 1 11.2 1-9.8 1-15.2 1 4.5 1-3.6 1-19.1 1 16.1 1 26.9 1-27.6 1 14.2 1 7.9 1-31.3 1 19.8 1-16.8 1-5.7 1-.9 1 34.9 1-6.2 1-1.8 1-1.8 1-21.1 1 1.2 1 9.8 1 13.5 1 7.1 1 2.1 1 2.9 1-13.4 1 13.1 1-29 1 .1 1 14.5 1 14.7 1-14.6 1-14 1 26.7 1 .1 1 1.7 1-27.9 1 19.5 1-.5 1 3.3 1-15.3 1 13.1 1-10.6 1 18.5 1-3.2 1 3.2 1-3.2 1-15.3 1 18.5 1 0 1 0 1-21.3 1 21.3 1 0 1 0 1-31 1 10.5 1-13.4 1-5.6 1 8.9 1 13.7 1 11.8 1-36 1 1.1 1-.5 1 12.5 1-10.6 1-8.1 1 29.6 1-20.8 1 .4 1 6.3 1-20.5 1-12.3 1 17.8 1 9.2 1-1.9 1-15.3 1-5.4 1 3.6V480z"/>
<path fill="url(#g64)" transform="translate(459) scale(1.2781 1)" d="M-88 480V459.2l 1-23.1 1-14.3 1 2.8 1 4.8 1 9.9 1 9.9 1 2.9 1 1.1 1-11 1-3.7 1 0 1 5.5 1 15.4 1 6.8 1-1.2 1 2.4 1-4.2 1-8.6 1-9.4 1-4.7 1-7.2 1-13.3 1-.7 1-8.2 1 10.5 1 5.6 1 22.9 1 17.6 1-20.2 1-1 1 7.9 1 15.8 1 5.3 1 4.5 1 0 1 0 1 0 1 0 1-10.5 1 .4 1-1.8 1-10.5 1 14.9 1-5.1 1 12.6 1 0 1 0 1-6.2 1 6.2 1-12.4 1 12.4 1 0 1-1.9 1-14.9 1 16.8 1-9.1 1-17.5 1-.9 1 15.8 1-6.6 1 10.3 1 8 1-13.2 1-9.6 1 22.8 1-22.1 1-4.4 1 20 1-5.9 1 12.4 1-1 1-13 1-1 1 15 1-4.1 1-2.4 1 4.6 1-25 1 26.9 1-14.7 1-.2 1-6.8 1-2.7 1-.9 1-8.6 1 7.8 1 15.8 1 10.3 1 0 1-16.1 1 9.7 1 6.4 1-17.3 1 17.3 1 0 1-5.9 1 5.9 1 0 1-7.9 1-20.2 1 11.4 1-23.2 1 18.9 1 21 1-12.5 1-2.7 1 10.3 1-28.8 1 23 1-8.9 1-16.8 1 5.8 1 28.7 1-6 1-1.8 1-4.6 1-19.1 1 2 1 13.8 1 12.2 1 4 1 1.1 1 .3 1-7 1 2.8 1-20.1 1-.7 1 14.1 1 10.9 1-10.5 1-15 1 24.1 1 1.4 1-1.6 1-23.3 1 13.8 1 11.1 1-3.9 1-4.3 1 4.9 1-9.2 1 12.5 1 0 1 0 1 0 1-15.5 1 15.5 1 0 1 0 1-18.3 1 18.3 1 0 1 0 1-28.1 1 5.8 1-7.4 1-7.1 1 6.7 1-3.5 1 28.1 1-36.4 1-2.2 1 2.4 1 20.7 1-10.4 1-13.6 1 7.3 1 4.4 1-1.8 1 3.4 1-22.4 1-6 1 14 1 8.8 1-2.7 1-11.5 1-6 1 5.2V480z"/>
<path fill="url(#g65)" transform="translate(459) scale(1.2845 1)" d="M-88 480V448.5l 1-1.8 1-7.7 1-2.9 1-1.8 1 5.2 1 8 1 3.1 1 4.2 1-11.3 1-2.2 1 1 1 5.8 1 12.4 1 8.7 1-1.8 1 3 1-2.6 1-6.7 1-8 1-8.6 1-9.7 1-8.9 1-3.1 1-8 1 8.2 1 3.7 1 27.6 1-8.8 1-.4 1 1.8 1 8 1 13.5 1 7.1 1 4.5 1 0 1 0 1 0 1 0 1-5.5 1 .1 1-2.2 1-11.8 1 10.1 1 .1 1 9.2 1 0 1 0 1 0 1 0 1-10.8 1 10.8 1 0 1 0 1-20.2 1 20.2 1-3.6 1-15.2 1-5.5 1 17.1 1-8.2 1 9.9 1-4.9 1-1 1-7.5 1 18.9 1-17.6 1-5.6 1 20.6 1-3.2 1 5.8 1 0 1-12.7 1-1 1 13.7 1-1.2 1-1.9 1 .7 1-17.8 1 20.2 1-6.7 1-1.4 1-4 1-13.3 1 6.9 1-10.9 1 1.8 1 20.6 1 5.1 1 1.9 1-9.8 1-1.9 1 11.7 1-8.4 1 8.4 1 0 1 0 1 0 1 0 1-15 1-8.1 1 21.7 1-34.3 1 18.6 1 17.1 1-5.3 1-1.1 1 6.4 1-30.4 1 25.7 1-7.9 1-20.1 1 3.7 1 29 1-7.8 1 7.8 1-7.5 1-21.2 1 3.5 1 10.4 1 13.9 1 .9 1 0 1 0 1-7 1 7 1-15 1-3.7 1 13.4 1 5.3 1-.3 1-22 1 20.3 1 2 1 0 1-21.7 1 21.7 1 0 1 0 1-9.7 1 9.7 1-6.2 1 6.2 1 0 1 0 1 0 1-12.3 1 12.3 1 0 1 0 1-15.2 1 15.2 1 0 1 0 1-24.7 1 1.9 1-7.5 1-3.7 1 3.3 1-3.4 1 30.5 1-33.9 1-4 1 4.4 1 32.3 1-34.9 1 1.1 1-.2 1 1.7 1 3.1 1 1.4 1-18.4 1-8.6 1 19.4 1 7.8 1-.8 1-19.3 1-2.9 1 7.4V480z"/>
<path fill="url(#g66)" transform="translate(459) scale(1.2910 1)" d="M-88 480V450.4l 1-3.1 1-7.3 1-5.4 1-2 1 8.1 1 11.5 1 6.3 1-1.2 1-4.4 1-3.3 1 .3 1 5.4 1 9.6 1 12 1-2 1 3.1 1-3.4 1-8 1-9.3 1-9.5 1-10.3 1-9 1-6.5 1-5.8 1 13.4 1 5.4 1 18.1 1 10.9 1-11.5 1 1.9 1 5.2 1 10.4 1 8 1 2 1 0 1 0 1 0 1 0 1-1.1 1 1.1 1-1 1-15.3 1 11.4 1 2.5 1 2.4 1 0 1 0 1 0 1 0 1-7.3 1 7.3 1 0 1 0 1-16 1 16 1-1.9 1-13.9 1-3.1 1 18.9 1-21.1 1 21.1 1-6.7 1-6.6 1-6.6 1 19.9 1-20.6 1 .8 1 19.8 1-5.1 1 5.1 1 0 1-6.3 1-.6 1 6.9 1-4.5 1 0 1 4.5 1-22.6 1 22.6 1 0 1 0 1-12.9 1-12 1 8.8 1-6.3 1 1.9 1 13.9 1 6.6 1 0 1-4.1 1-5.7 1 9.8 1-8 1 8 1 0 1 0 1 0 1 0 1-19.2 1 1.7 1 11.2 1-22.7 1 17.4 1 11.6 1 0 1-2.5 1 2.5 1-27 1 24.9 1-9.6 1-17.5 1-.8 1 30 1-4.1 1 4.1 1-4.3 1-21.4 1 5.1 1 8.6 1 6.8 1 5.2 1 0 1 0 1-.5 1 .5 1-12 1-.5 1 12.3 1 .2 1 0 1-19 1 19 1 0 1 0 1-18.5 1 18.5 1 0 1-1.7 1-6.5 1 8.2 1-7.2 1 7.2 1 0 1 0 1 0 1-9.1 1 9.1 1 0 1 0 1-12.1 1 12.1 1 0 1 0 1-18.1 1 5.9 1-13 1-6 1 2.4 1-5.9 1 34.6 1-33.3 1-4.5 1 4 1 22.3 1-35 1 3.8 1 16.1 1-5.1 1-.2 1 4.4 1-20.7 1-2.9 1 7.3 1 13.2 1 0 1-18.5 1-4 1 8.7V480z"/>
<path fill="url(#g67)" transform="translate(459) scale(1.2976 1)" d="M-88 480V456.7l 1-.8 1-7.7 1-3.6 1-2.2 1 6 1 9.4 1 4.6 1-2.7 1-5.2 1-4.3 1-1.5 1 3.2 1 9.8 1 10.6 1-.1 1 4.6 1-2.2 1-7.7 1-9 1-9.4 1-8.5 1-12.1 1-5.9 1-4.9 1 15.4 1 1 1 19.5 1-6.4 1 6 1 4.2 1 9.8 1 6.8 1 5.3 1 1.3 1 0 1 0 1 0 1 0 1-1.2 1 1 1 .2 1-13.1 1 13.1 1-1.2 1 1.2 1 0 1 0 1 0 1 0 1-.7 1 .7 1 0 1 0 1-14.4 1 14.4 1 0 1-13 1 1.2 1 11.8 1-19.3 1 19.3 1 0 1-8.6 1-7.4 1 16 1-14 1-2.4 1 16.4 1-.2 1 .2 1 0 1 0 1-3.5 1 3.5 1-7.2 1 4.8 1 2.4 1-19.1 1 19.1 1 0 1 0 1-1.3 1-23.3 1 14.4 1-5.4 1-.3 1 14 1 1.9 1 0 1-1.9 1 1.9 1 0 1-9.4 1 9.4 1 0 1 0 1 0 1 0 1-18.3 1-.8 1 19.1 1-26.5 1 15 1 11.5 1 0 1 0 1 0 1-23.6 1 23.6 1-.6 1-22.1 1-4.7 1 27.4 1 0 1 0 1-6.3 1-16.6 1 .6 1 11.6 1 10.7 1 0 1 0 1 0 1 0 1-.7 1-10.5 1 6.2 1 5 1 0 1 0 1-15.7 1 15.7 1 0 1 0 1-15.2 1 15.2 1 0 1 0 1-6.5 1 6.5 1 0 1 0 1 0 1 0 1 0 1-5.9 1 5.9 1 0 1 0 1-9 1 9 1 0 1 0 1-13.8 1 13.8 1-9.6 1-18.8 1 1.2 1-4.3 1 31.5 1-35.7 1 4.4 1-1.5 1 24.3 1-34 1 4.6 1 3.6 1 8.9 1 8.5 1-4.7 1-21.8 1-2.4 1 .2 1 23 1-5.2 1-22.9 1-.3 1 9.7V480z"/>
<path fill="url(#g68)" transform="translate(459) scale(1.3042 1)" d="M-88 480V459.1l 1-.1 1-7.6 1-3.4 1-2.6 1 4.2 1 6.7 1 2 1-4.3 1 8.7 1-16.5 1 .4 1 4.9 1 14.8 1 9.3 1 0 1 3.9 1-3.1 1-8.4 1-8.7 1-8.3 1-8 1-12.1 1-6 1-6.9 1 28.3 1-12.6 1 21.6 1-8.9 1 12.3 1 1.9 1 19.4 1-1.6 1 1.6 1 0 1 0 1 0 1 0 1 0 1 0 1 0 1 0 1-10 1 10 1-2.6 1 2.6 1 0 1 0 1 0 1 0 1 0 1 0 1 0 1 0 1-11.1 1 11.1 1 0 1-13.5 1 2.4 1 11.1 1-15.9 1 15.9 1 0 1-14.4 1-2.2 1 16.6 1-9.7 1-1.3 1 11 1 0 1 0 1 0 1 0 1 0 1 0 1-4.7 1 4.7 1 0 1-15.6 1 15.6 1 0 1 0 1-5.5 1-13.5 1 5 1-9 1 8 1 15 1 0 1 0 1 0 1 0 1 0 1-4.4 1 4.4 1 0 1 0 1 0 1 0 1-11.5 1-5.6 1 17.1 1-17.7 1 9.1 1 8.6 1 0 1 0 1 0 1-20.1 1 19.7 1 .4 1-15.7 1-8.3 1 24 1 0 1 0 1-6.5 1-10.8 1 1.7 1 8 1 7.6 1 0 1 0 1 0 1 0 1 0 1-7 1 7 1 0 1 0 1 0 1-12.4 1 12.4 1 0 1 0 1-11.9 1 11.6 1 .3 1 0 1-5.5 1 5.5 1 0 1 0 1 0 1 0 1 0 1-2.7 1 2.7 1 0 1 0 1-5.8 1 5.8 1 0 1 0 1-16.3 1 15.6 1 .7 1-24 1-3.3 1-1.9 1 29.2 1-32.2 1 .3 1-4.1 1 19.3 1-18.4 1-2.8 1 6.5 1 13.1 1-6.1 1 4.4 1-18.5 1 3 1-4.3 1 22.1 1-10.5 1-17.9 1-2.7 1 17.4V480z"/>
<path fill="url(#g69)" transform="translate(459) scale(1.3110 1)" d="M-88 480V464l 1 1 1-7.3 1-3.4 1-2.4 1 3.8 1 4.8 1 .2 1-4.6 1 4.6 1-7.5 1 2.5 1 4 1 9 1 8.4 1-1.7 1 2.6 1-3.8 1-7.7 1-6.8 1-6.1 1-5.7 1-13.1 1-9.5 1-5.9 1 33.4 1-15.2 1 21.5 1-9.8 1 11.4 1 1.2 1 12.7 1 5.4 1 0 1 0 1 0 1 0 1 0 1 0 1 0 1 0 1 0 1-3.1 1 3.1 1 0 1 0 1 0 1 0 1 0 1 0 1 0 1 0 1 0 1 0 1-7.7 1 7.7 1 0 1-10.2 1 4.2 1 6 1-7.5 1 7.5 1 0 1-3.5 1-9.6 1 13.1 1-3.2 1-6.3 1 9.5 1 0 1 0 1 0 1 0 1 0 1 0 1-2.1 1 2.1 1 0 1-12 1 12 1 0 1 0 1-1.7 1-3 1 1.5 1-13.4 1 4.5 1 12.1 1 0 1 0 1 0 1 0 1 0 1 0 1 0 1 0 1 0 1 0 1 0 1-7.6 1-4.4 1 12 1 0 1-6.1 1 6.1 1 0 1 0 1 0 1-16.5 1 12.9 1 3.6 1-16.6 1-3.9 1 20.5 1 0 1 0 1-3.1 1-13.8 1 1.5 1 6.8 1 8.6 1 0 1 0 1 0 1-.8 1 .8 1 0 1 0 1 0 1 0 1 0 1-7.2 1 7.2 1 0 1 0 1-8.5 1 8.5 1 0 1 0 1 0 1 0 1 0 1 0 1 0 1 0 1 0 1 0 1 0 1 0 1 0 1-2.6 1 2.6 1 0 1 0 1-13.3 1 11.8 1 1.5 1-19.8 1-1.7 1-4.8 1 26.3 1-21.6 1-3.8 1-7.2 1 2.3 1-1.2 1-2.1 1 9.5 1 11.3 1-10.6 1 7.5 1-22.4 1 3.1 1-5.7 1 23.5 1-18.1 1-11.6 1 .6 1 16.1V480z"/>
<path fill="url(#g70)" transform="translate(459) scale(1.3178 1)" d="M-88 480V459.5l 1-2.3 1-8.7 1 4.5 1-1.7 1 3.4 1 5.1 1-1 1-3.2 1 3.4 1-3.4 1 5.2 1 5.6 1 7.6 1 6 1 0 1 0 1-5.7 1-9.6 1-7 1-4.2 1-2.3 1-16 1-11.6 1-2.2 1 24.8 1-4.4 1 19.2 1-10.5 1 11 1 1.7 1 16.8 1 0 1 0 1 0 1 0 1 0 1 0 1 0 1 0 1 0 1 0 1 0 1 0 1 0 1 0 1 0 1 0 1 0 1 0 1 0 1 0 1 0 1 0 1-4.3 1 4.3 1 0 1 0 1 0 1 0 1-7.2 1 7.2 1 0 1-9.3 1-.3 1 9.6 1 0 1-5.5 1 5.5 1 0 1 0 1 0 1 0 1 0 1 0 1 0 1 0 1 0 1-7.8 1 7.8 1 0 1 0 1 0 1 0 1-6.5 1-10.4 1 8.3 1 8.6 1 0 1 0 1 0 1 0 1 0 1 0 1 0 1 0 1 0 1 0 1 0 1 0 1-13.1 1 13.1 1-.9 1-3.5 1 4.4 1 0 1 0 1 0 1-12.9 1 12.9 1 0 1-15.9 1-1 1 16.9 1 0 1 0 1-3.4 1-9.9 1 1.4 1 9.4 1 2.5 1 0 1 0 1 0 1 0 1 0 1-.2 1 .2 1 0 1 0 1 0 1-5.5 1 5.5 1 0 1 0 1-5.1 1 5.1 1 0 1 0 1 0 1 0 1 0 1 0 1 0 1 0 1 0 1 0 1 0 1 0 1 0 1 0 1 0 1 0 1 0 1-10.1 1 9 1 1.1 1-19.3 1-1.1 1-3 1 23.4 1-8.6 1-14.5 1-7 1 9 1-11.4 1-1.1 1 13.3 1 3.4 1-4 1 8.9 1-12.8 1-4.1 1-11.2 1 28.5 1-13.9 1-14.8 1-3.9 1 6.5V480z"/>
<path fill="url(#g71)" transform="translate(459) scale(1.3248 1)" d="M-88 480V461.1l 1-4.5 1-3.2 1-4.8 1-6.9 1 5.5 1 6 1 1.1 1 5.1 1-5.6 1 4.7 1 5.3 1 5.5 1 8.3 1 2.4 1 0 1 0 1 0 1-8.4 1-9 1-7.7 1-3.2 1-16.4 1-9.8 1-2.1 1 31.3 1-10.5 1 21.1 1-15.4 1 10.8 1 3.8 1 15.5 1 0 1 0 1 0 1 0 1 0 1 0 1 0 1 0 1 0 1 0 1 0 1 0 1 0 1 0 1 0 1 0 1 0 1 0 1 0 1 0 1 0 1 0 1 0 1 0 1 0 1 0 1 0 1 0 1 0 1 0 1 0 1-3.7 1-2 1 5.7 1 0 1-2.3 1 2.3 1 0 1 0 1 0 1 0 1 0 1 0 1 0 1 0 1 0 1-4.5 1 4.5 1 0 1 0 1 0 1 0 1-8.3 1-4.9 1 10.3 1 2.9 1 0 1 0 1 0 1 0 1 0 1 0 1 0 1 0 1 0 1 0 1 0 1 0 1-9.3 1 9.3 1 0 1-.1 1 .1 1 0 1 0 1 0 1-9.3 1 9.3 1 0 1-10.1 1-3.2 1 13.3 1 0 1 0 1 0 1-7.9 1-.4 1 8.3 1 0 1 0 1 0 1 0 1 0 1 0 1 0 1 0 1 0 1 0 1 0 1-2 1 2 1 0 1 0 1-1.6 1 1.6 1 0 1 0 1 0 1 0 1 0 1 0 1 0 1 0 1 0 1 0 1 0 1 0 1 0 1 0 1 0 1 0 1 0 1-7 1 5.4 1 1.6 1-13.3 1-5.2 1-2 1 20.5 1-19.9 1-6.5 1 .2 1 18 1-18.7 1-4 1 17.4 1 7.1 1-14.9 1 16.1 1-14.8 1-7.8 1-9.8 1 19.6 1-9.2 1-11.9 1-2.5 1 8.5V480z"/>
<path fill="url(#g72)" transform="translate(459) scale(1.3318 1)" d="M-88 480V459.5l 1-4.1 1 1.3 1-.8 1-6.9 1 4.3 1 6.2 1-.8 1-3 1-5.7 1 3 1 7.1 1 9.3 1 10.6 1 0 1 0 1 0 1-.3 1-9.1 1-7.8 1-5 1-7.1 1-18.1 1-5 1-2.2 1 21.3 1 7.8 1 17 1-21.4 1 6.8 1 6.7 1 16.4 1 0 1 0 1 0 1 0 1 0 1 0 1 0 1 0 1 0 1 0 1 0 1 0 1 0 1 0 1 0 1 0 1 0 1 0 1 0 1 0 1 0 1 0 1 0 1 0 1 0 1 0 1 0 1 0 1 0 1 0 1 0 1 0 1-1.5 1 1.5 1 0 1 0 1 0 1 0 1 0 1 0 1 0 1 0 1 0 1 0 1 0 1 0 1-.7 1 .7 1 0 1 0 1 0 1 0 1-4.1 1-5.1 1 9.2 1 0 1 0 1 0 1 0 1 0 1 0 1 0 1 0 1 0 1 0 1 0 1 0 1 0 1-1.7 1 1.7 1 0 1 0 1 0 1 0 1 0 1 0 1-5.5 1 5.5 1 0 1-7.2 1-2.4 1 9.6 1 0 1 0 1 0 1-6.1 1 1.4 1 4.7 1 0 1 0 1 0 1 0 1 0 1 0 1 0 1 0 1 0 1 0 1 0 1 0 1 0 1 0 1 0 1 0 1 0 1 0 1 0 1 0 1 0 1 0 1 0 1 0 1 0 1 0 1 0 1 0 1 0 1 0 1 0 1 0 1 0 1 0 1-3.3 1 3.3 1-6.6 1-4.4 1-3.6 1-2.9 1 17.5 1-21.5 1 .6 1-3.1 1 24 1-22.3 1-3.9 1 12.2 1 10 1-19.3 1 23.3 1-13 1-13.5 1-14.8 1 27.1 1-6.4 1-10.4 1-6.2 1 15V480z"/>
<path fill="url(#g73)" transform="translate(459) scale(1.3389 1)" d="M-88 480V455.3l 1 .6 1-.8 1-16.8 1 2.6 1 8.6 1 6.5 1-1.1 1-4.5 1-3.2 1 4.2 1 8.8 1 10.9 1 8.9 1 0 1 0 1 0 1-2.6 1-7.8 1-4.8 1-3.4 1-8.2 1-18.6 1-5 1-2.1 1 20.9 1 12 1 5.3 1-13.1 1 6.9 1 6.9 1 13.6 1 0 1 0 1 0 1 0 1 0 1 0 1 0 1 0 1 0 1 0 1 0 1 0 1 0 1 0 1 0 1 0 1 0 1 0 1 0 1 0 1 0 1 0 1 0 1 0 1 0 1 0 1 0 1 0 1 0 1 0 1 0 1 0 1 0 1 0 1 0 1 0 1 0 1 0 1 0 1 0 1 0 1 0 1 0 1 0 1 0 1 0 1 0 1 0 1 0 1 0 1 0 1 0 1-1.8 1-3.6 1 5.4 1 0 1 0 1 0 1 0 1 0 1 0 1 0 1 0 1 0 1 0 1 0 1 0 1 0 1 0 1 0 1 0 1 0 1 0 1 0 1 0 1 0 1-1.7 1 1.7 1 0 1-4.8 1-1.1 1 5.9 1 0 1 0 1 0 1-2.4 1 1.4 1 1 1 0 1 0 1 0 1 0 1 0 1 0 1 0 1 0 1 0 1 0 1 0 1 0 1 0 1 0 1 0 1 0 1 0 1 0 1 0 1 0 1 0 1 0 1 0 1 0 1 0 1 0 1 0 1 0 1 0 1 0 1 0 1 0 1 0 1 0 1-.5 1-.6 1-6.4 1-2.8 1-2.1 1-2 1 14.4 1-18.5 1 2 1-.6 1 17.1 1-24.2 1-3.7 1 15.1 1 6.5 1-18 1 24.3 1-2.9 1-15.2 1-22.4 1 28.2 1 4.6 1-16.4 1-9.2 1 18.5V480z"/>
<path fill="url(#g74)" transform="translate(459) scale(1.3461 1)" d="M-88 480V456.9l 1-1.7 1 12.7 1-22 1-3.1 1 8.7 1 1.7 1-1.2 1-3.9 1 .5 1 6.7 1 10.9 1 12.3 1 1.5 1 0 1 0 1 0 1 0 1-10.2 1-4.4 1-10.4 1-.6 1-16 1-6.7 1-2.1 1 19.8 1 7.8 1 9.8 1-11.8 1 10.4 1 4.2 1 10.2 1 0 1 0 1 0 1 0 1 0 1 0 1 0 1 0 1 0 1 0 1 0 1 0 1 0 1 0 1 0 1 0 1 0 1 0 1 0 1 0 1 0 1 0 1 0 1 0 1 0 1 0 1 0 1 0 1 0 1 0 1 0 1 0 1 0 1 0 1 0 1 0 1 0 1 0 1 0 1 0 1 0 1 0 1 0 1 0 1 0 1 0 1 0 1 0 1 0 1 0 1 0 1 0 1 0 1-1.5 1 1.5 1 0 1 0 1 0 1 0 1 0 1 0 1 0 1 0 1 0 1 0 1 0 1 0 1 0 1 0 1 0 1 0 1 0 1 0 1 0 1 0 1 0 1 0 1 0 1 0 1-1 1-1.1 1 2.1 1 0 1 0 1 0 1 0 1 0 1 0 1 0 1 0 1 0 1 0 1 0 1 0 1 0 1 0 1 0 1 0 1 0 1 0 1 0 1 0 1 0 1 0 1 0 1 0 1 0 1 0 1 0 1 0 1 0 1 0 1 0 1 0 1 0 1 0 1 0 1 0 1 0 1 0 1 0 1 0 1 0 1 0 1-1.9 1-4.3 1-3 1-2.1 1 11.3 1-14.8 1 3.2 1 1.9 1 9.7 1-25.1 1-1.9 1 26.5 1-.3 1-16 1 16.8 1-3.6 1-10.4 1-23.9 1 30.4 1-3.4 1-13.1 1-8.1 1 16.7V480z"/>
<path fill="url(#g75)" transform="translate(459) scale(1.3533 1)" d="M-88 480V460l 1-3 1 10.5 1-20.9 1-3.6 1 14.4 1 6.9 1-4.6 1 6.3 1-.7 1 2.6 1 9.5 1 2.6 1 0 1 0 1 0 1 0 1-1.9 1-6.6 1-9.7 1-4.1 1 3.7 1-13.3 1-11.8 1-4.6 1 15.6 1 .6 1 17.1 1-7.2 1 8.8 1 5.7 1 7.7 1 0 1 0 1 0 1 0 1 0 1 0 1 0 1 0 1 0 1 0 1 0 1 0 1 0 1 0 1 0 1 0 1 0 1 0 1 0 1 0 1 0 1 0 1 0 1 0 1 0 1 0 1 0 1 0 1 0 1 0 1 0 1 0 1 0 1 0 1 0 1 0 1 0 1 0 1 0 1 0 1 0 1 0 1 0 1 0 1 0 1 0 1 0 1 0 1 0 1 0 1 0 1 0 1 0 1 0 1 0 1 0 1 0 1 0 1 0 1 0 1 0 1 0 1 0 1 0 1 0 1 0 1 0 1 0 1 0 1 0 1 0 1 0 1 0 1 0 1 0 1 0 1 0 1 0 1 0 1 0 1 0 1 0 1 0 1 0 1 0 1 0 1 0 1 0 1 0 1 0 1 0 1 0 1 0 1 0 1 0 1 0 1 0 1 0 1 0 1 0 1 0 1 0 1 0 1 0 1 0 1 0 1 0 1 0 1 0 1 0 1 0 1 0 1 0 1 0 1 0 1 0 1 0 1 0 1 0 1 0 1 0 1 0 1 0 1 0 1 0 1 0 1-6.1 1-2.1 1 8.2 1-12.5 1-2.1 1 7 1 7.6 1-22.2 1 2.6 1 19.6 1 0 1-16 1 16 1 0 1-14.3 1-20.2 1 30.4 1-7.6 1-11.5 1-8.2 1 17.8V480z"/>
<path fill="url(#g76)" transform="translate(459) scale(1.3607 1)" d="M-88 480V462.3l 1 17.2 1-32 1-5.9 1 3.7 1 11.2 1 4.3 1-10.8 1-3.4 1 3.4 1 10.1 1 13.4 1 6.5 1 0 1 0 1 0 1 0 1 0 1-5 1-5.7 1-3.7 1 2.3 1-14.5 1-13.7 1-5.9 1 10.6 1 2 1 11.6 1 2.4 1 7.3 1 7.2 1 5.1 1 0 1 0 1 0 1 0 1 0 1 0 1 0 1 0 1 0 1 0 1 0 1 0 1 0 1 0 1 0 1 0 1 0 1 0 1 0 1 0 1 0 1 0 1 0 1 0 1 0 1 0 1 0 1 0 1 0 1 0 1 0 1 0 1 0 1 0 1 0 1 0 1 0 1 0 1 0 1 0 1 0 1 0 1 0 1 0 1 0 1 0 1 0 1 0 1 0 1 0 1 0 1 0 1 0 1 0 1 0 1 0 1 0 1 0 1 0 1 0 1 0 1 0 1 0 1 0 1 0 1 0 1 0 1 0 1 0 1 0 1 0 1 0 1 0 1 0 1 0 1 0 1 0 1 0 1 0 1 0 1 0 1 0 1 0 1 0 1 0 1 0 1 0 1 0 1 0 1 0 1 0 1 0 1 0 1 0 1 0 1 0 1 0 1 0 1 0 1 0 1 0 1 0 1 0 1 0 1 0 1 0 1 0 1 0 1 0 1 0 1 0 1 0 1 0 1 0 1 0 1 0 1 0 1 0 1 0 1 0 1 0 1 0 1 0 1 0 1 0 1 0 1-2.8 1-2.2 1 5 1-9.3 1-2.2 1 5.4 1 6.1 1-19.2 1 4.6 1 14.6 1 0 1-10.5 1 10.1 1-4.5 1-5.6 1-17.3 1 27.8 1-3.7 1-9.7 1-16.3 1 20.6V480z"/>
<path fill="url(#g77)" transform="translate(459) scale(1.3682 1)" d="M-88 480V467.9l 1-6.8 1-24.6 1 .2 1 4.5 1 13.9 1 21.9 1-5.3 1-15.4 1 .5 1 7.9 1 11.3 1 4 1 0 1 0 1 0 1 0 1-2.9 1 1.8 1-11.1 1-4 1 3.5 1-9.5 1-10.2 1-11.2 1 10.1 1 2.3 1 7 1 7.3 1 7.4 1 7.4 1 2.1 1 0 1 0 1 0 1 0 1 0 1 0 1 0 1 0 1 0 1 0 1 0 1 0 1 0 1 0 1 0 1 0 1 0 1 0 1 0 1 0 1 0 1 0 1 0 1 0 1 0 1 0 1 0 1 0 1 0 1 0 1 0 1 0 1 0 1 0 1 0 1 0 1 0 1 0 1 0 1 0 1 0 1 0 1 0 1 0 1 0 1 0 1 0 1 0 1 0 1 0 1 0 1 0 1 0 1 0 1 0 1 0 1 0 1 0 1 0 1 0 1 0 1 0 1 0 1 0 1 0 1 0 1 0 1 0 1 0 1 0 1 0 1 0 1 0 1 0 1 0 1 0 1 0 1 0 1 0 1 0 1 0 1 0 1 0 1 0 1 0 1 0 1 0 1 0 1 0 1 0 1 0 1 0 1 0 1 0 1 0 1 0 1 0 1 0 1 0 1 0 1 0 1 0 1 0 1 0 1 0 1 0 1 0 1 0 1 0 1 0 1 0 1 0 1 0 1 0 1 0 1 0 1 0 1 0 1 0 1 0 1 0 1 0 1 0 1 0 1 0 1 0 1 0 1 0 1 0 1-4.3 1-4.1 1 8.4 1 0 1-16.3 1 2.8 1 13.5 1 0 1-20 1 19.6 1-3.8 1-.1 1-22.5 1 26.8 1-.7 1-6.7 1-19.7 1 21.1V480z"/>
<path fill="url(#g78)" transform="translate(459) scale(1.3758 1)" d="M-88 480V468.5l 1-4.9 1-27 1 1.3 1 3.5 1 15 1 23.6 1-9.4 1-15.4 1-.1 1 7.7 1 13.4 1 3.8 1 0 1 0 1 0 1 0 1 0 1 0 1-11.2 1-8.4 1 4.5 1-6.5 1-10.4 1-7.3 1 12.8 1-2.2 1 10.4 1 4.1 1 7.5 1 6.7 1 0 1 0 1 0 1 0 1 0 1 0 1 0 1 0 1 0 1 0 1 0 1 0 1 0 1 0 1 0 1 0 1 0 1 0 1 0 1 0 1 0 1 0 1 0 1 0 1 0 1 0 1 0 1 0 1 0 1 0 1 0 1 0 1 0 1 0 1 0 1 0 1 0 1 0 1 0 1 0 1 0 1 0 1 0 1 0 1 0 1 0 1 0 1 0 1 0 1 0 1 0 1 0 1 0 1 0 1 0 1 0 1 0 1 0 1 0 1 0 1 0 1 0 1 0 1 0 1 0 1 0 1 0 1 0 1 0 1 0 1 0 1 0 1 0 1 0 1 0 1 0 1 0 1 0 1 0 1 0 1 0 1 0 1 0 1 0 1 0 1 0 1 0 1 0 1 0 1 0 1 0 1 0 1 0 1 0 1 0 1 0 1 0 1 0 1 0 1 0 1 0 1 0 1 0 1 0 1 0 1 0 1 0 1 0 1 0 1 0 1 0 1 0 1 0 1 0 1 0 1 0 1 0 1 0 1 0 1 0 1 0 1 0 1 0 1 0 1 0 1 0 1 0 1 0 1 0 1 0 1-3 1-2.2 1 5.2 1 0 1-13.2 1 1.2 1 12 1 0 1-17.1 1 17.1 1 0 1-1.7 1-21.8 1 23.2 1 .3 1-5.6 1-18.9 1 23.3V480z"/>
<path fill="url(#g79)" transform="translate(459) scale(1.3834 1)" d="M-88 480V471.8l 1-8.3 1-27.1 1 3.2 1 2.2 1 6.4 1 12.6 1 2.2 1-7.1 1-.2 1 7.3 1 13.1 1 3.9 1 0 1 0 1 0 1 0 1 0 1 0 1-20.6 1-3.6 1 5.8 1-2.2 1-13.3 1-5.6 1 12.3 1 .9 1 9 1 5.8 1 7.7 1 3.8 1 0 1 0 1 0 1 0 1 0 1 0 1 0 1 0 1 0 1 0 1 0 1 0 1 0 1 0 1 0 1 0 1 0 1 0 1 0 1 0 1 0 1 0 1 0 1 0 1 0 1 0 1 0 1 0 1 0 1 0 1 0 1 0 1 0 1 0 1 0 1 0 1 0 1 0 1 0 1 0 1 0 1 0 1 0 1 0 1 0 1 0 1 0 1 0 1 0 1 0 1 0 1 0 1 0 1 0 1 0 1 0 1 0 1 0 1 0 1 0 1 0 1 0 1 0 1 0 1 0 1 0 1 0 1 0 1 0 1 0 1 0 1 0 1 0 1 0 1 0 1 0 1 0 1 0 1 0 1 0 1 0 1 0 1 0 1 0 1 0 1 0 1 0 1 0 1 0 1 0 1 0 1 0 1 0 1 0 1 0 1 0 1 0 1 0 1 0 1 0 1 0 1 0 1 0 1 0 1 0 1 0 1 0 1 0 1 0 1 0 1 0 1 0 1 0 1 0 1 0 1 0 1 0 1 0 1 0 1 0 1 0 1 0 1 0 1 0 1 0 1 0 1 0 1 0 1 0 1 0 1 0 1-2 1 2 1 0 1-10.1 1 1.4 1 8.7 1 0 1-20.5 1 20.5 1 0 1 0 1-19.9 1 19.3 1 .6 1-7.4 1-14.5 1 21.9V480z"/>
<path fill="url(#g80)" transform="translate(459) scale(1.3912 1)" d="M-88 480V465.5l 1-6.2 1-21.6 1 3.7 1 2.2 1 2.8 1 11.2 1 2.5 1-3.8 1-1 1 7.1 1 14.6 1 3 1 0 1 0 1 0 1 0 1 0 1 0 1-9 1-.7 1-4.8 1 3.7 1-18.5 1-6.3 1 13.5 1-1 1 10.7 1 3.7 1 7.8 1 .9 1 0 1 0 1 0 1 0 1 0 1 0 1 0 1 0 1 0 1 0 1 0 1 0 1 0 1 0 1 0 1 0 1 0 1 0 1 0 1 0 1 0 1 0 1 0 1 0 1 0 1 0 1 0 1 0 1 0 1 0 1 0 1 0 1 0 1 0 1 0 1 0 1 0 1 0 1 0 1 0 1 0 1 0 1 0 1 0 1 0 1 0 1 0 1 0 1 0 1 0 1 0 1 0 1 0 1 0 1 0 1 0 1 0 1 0 1 0 1 0 1 0 1 0 1 0 1 0 1 0 1 0 1 0 1 0 1 0 1 0 1 0 1 0 1 0 1 0 1 0 1 0 1 0 1 0 1 0 1 0 1 0 1 0 1 0 1 0 1 0 1 0 1 0 1 0 1 0 1 0 1 0 1 0 1 0 1 0 1 0 1 0 1 0 1 0 1 0 1 0 1 0 1 0 1 0 1 0 1 0 1 0 1 0 1 0 1 0 1 0 1 0 1 0 1 0 1 0 1 0 1 0 1 0 1 0 1 0 1 0 1 0 1 0 1 0 1 0 1 0 1 0 1 0 1 0 1 0 1 0 1 0 1 0 1 0 1 0 1-5.1 1-.3 1 5.4 1 0 1-17.6 1 17.6 1 0 1 0 1-4.3 1 4.3 1 0 1-7.3 1-9.6 1 16.9V480z"/>
<path fill="url(#g81)" transform="translate(459) scale(1.3991 1)" d="M-88 480V471.6l 1-2.6 1-32.4 1 6.7 1 2.2 1 2.2 1 12.6 1 4.1 1-2.2 1 .6 1 8.7 1 8.5 1 0 1 0 1 0 1 0 1 0 1 0 1 0 1 0 1-4.9 1-9.1 1-8 1-6.9 1-6 1 13.6 1 .1 1 12.3 1 3.1 1 5.8 1 0 1 0 1 0 1 0 1 0 1 0 1 0 1 0 1 0 1 0 1 0 1 0 1 0 1 0 1 0 1 0 1 0 1 0 1 0 1 0 1 0 1 0 1 0 1 0 1 0 1 0 1 0 1 0 1 0 1 0 1 0 1 0 1 0 1 0 1 0 1 0 1 0 1 0 1 0 1 0 1 0 1 0 1 0 1 0 1 0 1 0 1 0 1 0 1 0 1 0 1 0 1 0 1 0 1 0 1 0 1 0 1 0 1 0 1 0 1 0 1 0 1 0 1 0 1 0 1 0 1 0 1 0 1 0 1 0 1 0 1 0 1 0 1 0 1 0 1 0 1 0 1 0 1 0 1 0 1 0 1 0 1 0 1 0 1 0 1 0 1 0 1 0 1 0 1 0 1 0 1 0 1 0 1 0 1 0 1 0 1 0 1 0 1 0 1 0 1 0 1 0 1 0 1 0 1 0 1 0 1 0 1 0 1 0 1 0 1 0 1 0 1 0 1 0 1 0 1 0 1 0 1 0 1 0 1 0 1 0 1 0 1 0 1 0 1 0 1 0 1 0 1 0 1 0 1 0 1 0 1 0 1 0 1 0 1 0 1 0 1-.4 1-4.7 1 5.1 1 0 1-14.6 1 14.6 1 0 1 0 1 0 1 0 1 0 1-9.5 1-5.7 1 15.2V480z"/>
<path fill="url(#g82)" transform="translate(459) scale(1.4071 1)" d="M-88 480V471.4l 1 5.9 1-33.9 1 1.7 1 2.3 1 2.8 1 10.9 1 4.5 1-.3 1 2.2 1 8.2 1 4.3 1 0 1 0 1 0 1 0 1 0 1 0 1 0 1 0 1-9.3 1-7.2 1-11.4 1-2.6 1-2.1 1 21.3 1-1.2 1 12.5 1-2.9 1 2.9 1 0 1 0 1 0 1 0 1 0 1 0 1 0 1 0 1 0 1 0 1 0 1 0 1 0 1 0 1 0 1 0 1 0 1 0 1 0 1 0 1 0 1 0 1 0 1 0 1 0 1 0 1 0 1 0 1 0 1 0 1 0 1 0 1 0 1 0 1 0 1 0 1 0 1 0 1 0 1 0 1 0 1 0 1 0 1 0 1 0 1 0 1 0 1 0 1 0 1 0 1 0 1 0 1 0 1 0 1 0 1 0 1 0 1 0 1 0 1 0 1 0 1 0 1 0 1 0 1 0 1 0 1 0 1 0 1 0 1 0 1 0 1 0 1 0 1 0 1 0 1 0 1 0 1 0 1 0 1 0 1 0 1 0 1 0 1 0 1 0 1 0 1 0 1 0 1 0 1 0 1 0 1 0 1 0 1 0 1 0 1 0 1 0 1 0 1 0 1 0 1 0 1 0 1 0 1 0 1 0 1 0 1 0 1 0 1 0 1 0 1 0 1 0 1 0 1 0 1 0 1 0 1 0 1 0 1 0 1 0 1 0 1 0 1 0 1 0 1 0 1 0 1 0 1 0 1 0 1 0 1 0 1 0 1 0 1 0 1 0 1 0 1-3.5 1 3.5 1 0 1-11.5 1 11.5 1 0 1 0 1 0 1 0 1 0 1-3.8 1-7.2 1 11V480z"/>
<path fill="url(#g83)" transform="translate(459) scale(1.4152 1)" d="M-88 480V473.9l 1-19.3 1-15 1 7.4 1 2.3 1 4.6 1 17.3 1 8.8 1 0 1 0 1 0 1 0 1 0 1 0 1 0 1 0 1 0 1 0 1 0 1 0 1-12 1-8.7 1-5.2 1-2.2 1-2.1 1 22.8 1-1.6 1 9 1 0 1 0 1 0 1 0 1 0 1 0 1 0 1 0 1 0 1 0 1 0 1 0 1 0 1 0 1 0 1 0 1 0 1 0 1 0 1 0 1 0 1 0 1 0 1 0 1 0 1 0 1 0 1 0 1 0 1 0 1 0 1 0 1 0 1 0 1 0 1 0 1 0 1 0 1 0 1 0 1 0 1 0 1 0 1 0 1 0 1 0 1 0 1 0 1 0 1 0 1 0 1 0 1 0 1 0 1 0 1 0 1 0 1 0 1 0 1 0 1 0 1 0 1 0 1 0 1 0 1 0 1 0 1 0 1 0 1 0 1 0 1 0 1 0 1 0 1 0 1 0 1 0 1 0 1 0 1 0 1 0 1 0 1 0 1 0 1 0 1 0 1 0 1 0 1 0 1 0 1 0 1 0 1 0 1 0 1 0 1 0 1 0 1 0 1 0 1 0 1 0 1 0 1 0 1 0 1 0 1 0 1 0 1 0 1 0 1 0 1 0 1 0 1 0 1 0 1 0 1 0 1 0 1 0 1 0 1 0 1 0 1 0 1 0 1 0 1 0 1 0 1 0 1 0 1 0 1 0 1 0 1 0 1 0 1 0 1 0 1 0 1 0 1 0 1-.3 1 .3 1 0 1-8.5 1 8.5 1 0 1 0 1 0 1 0 1 0 1 0 1-9.2 1 9.2V480z"/>
<path fill="url(#g84)" transform="translate(459) scale(1.4234 1)" d="M-88 480V480l 1-3.2 1-26.6 1-1.3 1 2.4 1 6.5 1 19.8 1 2.4 1 0 1 0 1 0 1 0 1 0 1 0 1 0 1 0 1 0 1 0 1 0 1 0 1-4.7 1-11.2 1-7.6 1-2.2 1-2 1 27.7 1-2.9 1 2.9 1 0 1 0 1 0 1 0 1 0 1 0 1 0 1 0 1 0 1 0 1 0 1 0 1 0 1 0 1 0 1 0 1 0 1 0 1 0 1 0 1 0 1 0 1 0 1 0 1 0 1 0 1 0 1 0 1 0 1 0 1 0 1 0 1 0 1 0 1 0 1 0 1 0 1 0 1 0 1 0 1 0 1 0 1 0 1 0 1 0 1 0 1 0 1 0 1 0 1 0 1 0 1 0 1 0 1 0 1 0 1 0 1 0 1 0 1 0 1 0 1 0 1 0 1 0 1 0 1 0 1 0 1 0 1 0 1 0 1 0 1 0 1 0 1 0 1 0 1 0 1 0 1 0 1 0 1 0 1 0 1 0 1 0 1 0 1 0 1 0 1 0 1 0 1 0 1 0 1 0 1 0 1 0 1 0 1 0 1 0 1 0 1 0 1 0 1 0 1 0 1 0 1 0 1 0 1 0 1 0 1 0 1 0 1 0 1 0 1 0 1 0 1 0 1 0 1 0 1 0 1 0 1 0 1 0 1 0 1 0 1 0 1 0 1 0 1 0 1 0 1 0 1 0 1 0 1 0 1 0 1 0 1 0 1 0 1 0 1 0 1 0 1 0 1 0 1 0 1 0 1 0 1-5.3 1 5.3 1 0 1 0 1 0 1 0 1 0 1 0 1-5.5 1 5.5V480z"/>
<path fill="url(#g85)" transform="translate(459) scale(1.4317 1)" d="M-88 480V474.7l 1-.5 1 3.6 1-11.8 1-6.6 1 6.1 1 14.5 1 0 1-4.5 1-3.2 1 4.6 1 3.1 1 0 1 0 1 0 1 0 1 0 1 0 1 0 1 0 1-1.3 1-8 1-11.8 1-2.1 1-2.2 1 25.4 1 0 1 0 1 0 1 0 1 0 1 0 1 0 1 0 1 0 1 0 1 0 1 0 1 0 1 0 1 0 1 0 1 0 1 0 1 0 1 0 1 0 1 0 1 0 1 0 1 0 1 0 1 0 1 0 1 0 1 0 1 0 1 0 1 0 1 0 1 0 1 0 1 0 1 0 1 0 1 0 1 0 1 0 1 0 1 0 1 0 1 0 1 0 1 0 1 0 1 0 1 0 1 0 1 0 1 0 1 0 1 0 1 0 1 0 1 0 1 0 1 0 1 0 1 0 1 0 1 0 1 0 1 0 1 0 1 0 1 0 1 0 1 0 1 0 1 0 1 0 1 0 1 0 1 0 1 0 1 0 1 0 1 0 1 0 1 0 1 0 1 0 1 0 1 0 1 0 1 0 1 0 1 0 1 0 1 0 1 0 1 0 1 0 1 0 1 0 1 0 1 0 1 0 1 0 1 0 1 0 1 0 1 0 1 0 1 0 1 0 1 0 1 0 1 0 1 0 1 0 1 0 1 0 1 0 1 0 1 0 1 0 1 0 1 0 1 0 1 0 1 0 1 0 1 0 1 0 1 0 1 0 1 0 1 0 1 0 1 0 1 0 1 0 1 0 1 0 1 0 1 0 1 0 1 0 1-2.1 1 2.1 1 0 1 0 1 0 1 0 1 0 1 0 1 0 1 0V480z"/>
<path fill="url(#g86)" transform="translate(459) scale(1.4401 1)" d="M-88 480V472.7l 1-1.5 1-2.7 1-5.5 1-4.2 1 4.1 1 8.4 1 2.7 1-1.9 1 1.8 1 6.1 1 0 1 0 1 0 1 0 1 0 1 0 1 0 1 0 1 0 1 0 1-4.6 1-14 1-2.2 1-2.1 1 22.9 1 0 1 0 1 0 1 0 1 0 1 0 1 0 1 0 1 0 1 0 1 0 1 0 1 0 1 0 1 0 1 0 1 0 1 0 1 0 1 0 1 0 1 0 1 0 1 0 1 0 1 0 1 0 1 0 1 0 1 0 1 0 1 0 1 0 1 0 1 0 1 0 1 0 1 0 1 0 1 0 1 0 1 0 1 0 1 0 1 0 1 0 1 0 1 0 1 0 1 0 1 0 1 0 1 0 1 0 1 0 1 0 1 0 1 0 1 0 1 0 1 0 1 0 1 0 1 0 1 0 1 0 1 0 1 0 1 0 1 0 1 0 1 0 1 0 1 0 1 0 1 0 1 0 1 0 1 0 1 0 1 0 1 0 1 0 1 0 1 0 1 0 1 0 1 0 1 0 1 0 1 0 1 0 1 0 1 0 1 0 1 0 1 0 1 0 1 0 1 0 1 0 1 0 1 0 1 0 1 0 1 0 1 0 1 0 1 0 1 0 1 0 1 0 1 0 1 0 1 0 1 0 1 0 1 0 1 0 1 0 1 0 1 0 1 0 1 0 1 0 1 0 1 0 1 0 1 0 1 0 1 0 1 0 1 0 1 0 1 0 1 0 1 0 1 0 1 0 1 0 1 0 1 0 1 0 1 0 1 0 1 0 1 0 1 0 1 0 1 0 1 0 1 0 1 0V480z"/>
<path fill="url(#g87)" transform="translate(459) scale(1.4486 1)" d="M-88 480V475.3l 1-2.1 1-7.7 1-1.7 1-1.6 1 6.7 1 11.1 1 0 1 0 1 0 1 0 1 0 1 0 1 0 1 0 1 0 1 0 1 0 1 0 1 0 1 0 1-4.4 1-11.7 1-1.3 1 .6 1 16.8 1 0 1 0 1 0 1 0 1 0 1 0 1 0 1 0 1 0 1 0 1 0 1 0 1 0 1 0 1 0 1 0 1 0 1 0 1 0 1 0 1 0 1 0 1 0 1 0 1 0 1 0 1 0 1 0 1 0 1 0 1 0 1 0 1 0 1 0 1 0 1 0 1 0 1 0 1 0 1 0 1 0 1 0 1 0 1 0 1 0 1 0 1 0 1 0 1 0 1 0 1 0 1 0 1 0 1 0 1 0 1 0 1 0 1 0 1 0 1 0 1 0 1 0 1 0 1 0 1 0 1 0 1 0 1 0 1 0 1 0 1 0 1 0 1 0 1 0 1 0 1 0 1 0 1 0 1 0 1 0 1 0 1 0 1 0 1 0 1 0 1 0 1 0 1 0 1 0 1 0 1 0 1 0 1 0 1 0 1 0 1 0 1 0 1 0 1 0 1 0 1 0 1 0 1 0 1 0 1 0 1 0 1 0 1 0 1 0 1 0 1 0 1 0 1 0 1 0 1 0 1 0 1 0 1 0 1 0 1 0 1 0 1 0 1 0 1 0 1 0 1 0 1 0 1 0 1 0 1 0 1 0 1 0 1 0 1 0 1 0 1 0 1 0 1 0 1 0 1 0 1 0 1 0 1 0 1 0 1 0 1 0 1 0 1 0 1 0 1 0 1 0 1 0 1 0V480z"/>
<path fill="url(#g88)" transform="translate(459) scale(1.4573 1)" d="M-88 480V480l 1-2 1-11.1 1-6.3 1-1.2 1 4 1 12.5 1 4.1 1 0 1 0 1 0 1 0 1 0 1 0 1 0 1 0 1 0 1 0 1 0 1 0 1 0 1-1.2 1-12.3 1-2.2 1-.8 1 16.5 1 0 1 0 1 0 1 0 1 0 1 0 1 0 1 0 1 0 1 0 1 0 1 0 1 0 1 0 1 0 1 0 1 0 1 0 1 0 1 0 1 0 1 0 1 0 1 0 1 0 1 0 1 0 1 0 1 0 1 0 1 0 1 0 1 0 1 0 1 0 1 0 1 0 1 0 1 0 1 0 1 0 1 0 1 0 1 0 1 0 1 0 1 0 1 0 1 0 1 0 1 0 1 0 1 0 1 0 1 0 1 0 1 0 1 0 1 0 1 0 1 0 1 0 1 0 1 0 1 0 1 0 1 0 1 0 1 0 1 0 1 0 1 0 1 0 1 0 1 0 1 0 1 0 1 0 1 0 1 0 1 0 1 0 1 0 1 0 1 0 1 0 1 0 1 0 1 0 1 0 1 0 1 0 1 0 1 0 1 0 1 0 1 0 1 0 1 0 1 0 1 0 1 0 1 0 1 0 1 0 1 0 1 0 1 0 1 0 1 0 1 0 1 0 1 0 1 0 1 0 1 0 1 0 1 0 1 0 1 0 1 0 1 0 1 0 1 0 1 0 1 0 1 0 1 0 1 0 1 0 1 0 1 0 1 0 1 0 1 0 1 0 1 0 1 0 1 0 1 0 1 0 1 0 1 0 1 0 1 0 1 0 1 0 1 0 1 0 1 0 1 0 1 0 1 0V480z"/>
<path fill="url(#g89)" transform="translate(459) scale(1.4660 1)" d="M-88 480V480l 1-3.1 1-9.6 1-2.5 1-.6 1 8.9 1 6.9 1 0 1 0 1 0 1 0 1 0 1 0 1 0 1 0 1 0 1 0 1 0 1 0 1 0 1 0 1 0 1-3.4 1 1 1-5.4 1 7.8 1 0 1 0 1 0 1 0 1 0 1 0 1 0 1 0 1 0 1 0 1 0 1 0 1 0 1 0 1 0 1 0 1 0 1 0 1 0 1 0 1 0 1 0 1 0 1 0 1 0 1 0 1 0 1 0 1 0 1 0 1 0 1 0 1 0 1 0 1 0 1 0 1 0 1 0 1 0 1 0 1 0 1 0 1 0 1 0 1 0 1 0 1 0 1 0 1 0 1 0 1 0 1 0 1 0 1 0 1 0 1 0 1 0 1 0 1 0 1 0 1 0 1 0 1 0 1 0 1 0 1 0 1 0 1 0 1 0 1 0 1 0 1 0 1 0 1 0 1 0 1 0 1 0 1 0 1 0 1 0 1 0 1 0 1 0 1 0 1 0 1 0 1 0 1 0 1 0 1 0 1 0 1 0 1 0 1 0 1 0 1 0 1 0 1 0 1 0 1 0 1 0 1 0 1 0 1 0 1 0 1 0 1 0 1 0 1 0 1 0 1 0 1 0 1 0 1 0 1 0 1 0 1 0 1 0 1 0 1 0 1 0 1 0 1 0 1 0 1 0 1 0 1 0 1 0 1 0 1 0 1 0 1 0 1 0 1 0 1 0 1 0 1 0 1 0 1 0 1 0 1 0 1 0 1 0 1 0 1 0 1 0 1 0 1 0 1 0 1 0 1 0 1 0 1 0V480z"/>
<path fill="url(#g90)" transform="translate(459) scale(1.4749 1)" d="M-88 480V480l 1 0 1-4.8 1-8.2 1-3.4 1 3 1 10.9 1 2.5 1 0 1 0 1 0 1 0 1 0 1 0 1 0 1 0 1 0 1 0 1 0 1 0 1 0 1 0 1 0 1 0 1-2.6 1 2.6 1 0 1 0 1 0 1 0 1 0 1 0 1 0 1 0 1 0 1 0 1 0 1 0 1 0 1 0 1 0 1 0 1 0 1 0 1 0 1 0 1 0 1 0 1 0 1 0 1 0 1 0 1 0 1 0 1 0 1 0 1 0 1 0 1 0 1 0 1 0 1 0 1 0 1 0 1 0 1 0 1 0 1 0 1 0 1 0 1 0 1 0 1 0 1 0 1 0 1 0 1 0 1 0 1 0 1 0 1 0 1 0 1 0 1 0 1 0 1 0 1 0 1 0 1 0 1 0 1 0 1 0 1 0 1 0 1 0 1 0 1 0 1 0 1 0 1 0 1 0 1 0 1 0 1 0 1 0 1 0 1 0 1 0 1 0 1 0 1 0 1 0 1 0 1 0 1 0 1 0 1 0 1 0 1 0 1 0 1 0 1 0 1 0 1 0 1 0 1 0 1 0 1 0 1 0 1 0 1 0 1 0 1 0 1 0 1 0 1 0 1 0 1 0 1 0 1 0 1 0 1 0 1 0 1 0 1 0 1 0 1 0 1 0 1 0 1 0 1 0 1 0 1 0 1 0 1 0 1 0 1 0 1 0 1 0 1 0 1 0 1 0 1 0 1 0 1 0 1 0 1 0 1 0 1 0 1 0 1 0 1 0 1 0 1 0 1 0 1 0 1 0 1 0 1 0V480z"/>
<path fill="url(#g91)" transform="translate(459) scale(1.4839 1)" d="M-88 480V480l 1 0 1-6 1-4.8 1-3.4 1 6.4 1 7.8 1 0 1 0 1 0 1 0 1 0 1 0 1 0 1 0 1 0 1 0 1 0 1 0 1 0 1 0 1 0 1 0 1 0 1 0 1 0 1 0 1 0 1 0 1 0 1 0 1 0 1 0 1 0 1 0 1 0 1 0 1 0 1 0 1 0 1 0 1 0 1 0 1 0 1 0 1 0 1 0 1 0 1 0 1 0 1 0 1 0 1 0 1 0 1 0 1 0 1 0 1 0 1 0 1 0 1 0 1 0 1 0 1 0 1 0 1 0 1 0 1 0 1 0 1 0 1 0 1 0 1 0 1 0 1 0 1 0 1 0 1 0 1 0 1 0 1 0 1 0 1 0 1 0 1 0 1 0 1 0 1 0 1 0 1 0 1 0 1 0 1 0 1 0 1 0 1 0 1 0 1 0 1 0 1 0 1 0 1 0 1 0 1 0 1 0 1 0 1 0 1 0 1 0 1 0 1 0 1 0 1 0 1 0 1 0 1 0 1 0 1 0 1 0 1 0 1 0 1 0 1 0 1 0 1 0 1 0 1 0 1 0 1 0 1 0 1 0 1 0 1 0 1 0 1 0 1 0 1 0 1 0 1 0 1 0 1 0 1 0 1 0 1 0 1 0 1 0 1 0 1 0 1 0 1 0 1 0 1 0 1 0 1 0 1 0 1 0 1 0 1 0 1 0 1 0 1 0 1 0 1 0 1 0 1 0 1 0 1 0 1 0 1 0 1 0 1 0 1 0 1 0 1 0 1 0 1 0 1 0 1 0 1 0V480z"/>
<path fill="url(#g92)" transform="translate(459) scale(1.4931 1)" d="M-88 480V480l 1 0 1-6.1 1-4.2 1-1.8 1 7.1 1 5 1 0 1 0 1 0 1 0 1 0 1 0 1 0 1 0 1 0 1 0 1 0 1 0 1 0 1 0 1 0 1 0 1 0 1 0 1 0 1 0 1 0 1 0 1 0 1 0 1 0 1 0 1 0 1 0 1 0 1 0 1 0 1 0 1 0 1 0 1 0 1 0 1 0 1 0 1 0 1 0 1 0 1 0 1 0 1 0 1 0 1 0 1 0 1 0 1 0 1 0 1 0 1 0 1 0 1 0 1 0 1 0 1 0 1 0 1 0 1 0 1 0 1 0 1 0 1 0 1 0 1 0 1 0 1 0 1 0 1 0 1 0 1 0 1 0 1 0 1 0 1 0 1 0 1 0 1 0 1 0 1 0 1 0 1 0 1 0 1 0 1 0 1 0 1 0 1 0 1 0 1 0 1 0 1 0 1 0 1 0 1 0 1 0 1 0 1 0 1 0 1 0 1 0 1 0 1 0 1 0 1 0 1 0 1 0 1 0 1 0 1 0 1 0 1 0 1 0 1 0 1 0 1 0 1 0 1 0 1 0 1 0 1 0 1 0 1 0 1 0 1 0 1 0 1 0 1 0 1 0 1 0 1 0 1 0 1 0 1 0 1 0 1 0 1 0 1 0 1 0 1 0 1 0 1 0 1 0 1 0 1 0 1 0 1 0 1 0 1 0 1 0 1 0 1 0 1 0 1 0 1 0 1 0 1 0 1 0 1 0 1 0 1 0 1 0 1 0 1 0 1 0 1 0 1 0 1 0 1 0 1 0 1 0V480z"/>
<path fill="url(#g93)" transform="translate(459) scale(1.5023 1)" d="M-88 480V480l 1 0 1 0 1-9.2 1 .4 1 8.8 1 0 1 0 1 0 1 0 1 0 1 0 1 0 1 0 1 0 1 0 1 0 1 0 1 0 1 0 1 0 1 0 1 0 1 0 1 0 1 0 1 0 1 0 1 0 1 0 1 0 1 0 1 0 1 0 1 0 1 0 1 0 1 0 1 0 1 0 1 0 1 0 1 0 1 0 1 0 1 0 1 0 1 0 1 0 1 0 1 0 1 0 1 0 1 0 1 0 1 0 1 0 1 0 1 0 1 0 1 0 1 0 1 0 1 0 1 0 1 0 1 0 1 0 1 0 1 0 1 0 1 0 1 0 1 0 1 0 1 0 1 0 1 0 1 0 1 0 1 0 1 0 1 0 1 0 1 0 1 0 1 0 1 0 1 0 1 0 1 0 1 0 1 0 1 0 1 0 1 0 1 0 1 0 1 0 1 0 1 0 1 0 1 0 1 0 1 0 1 0 1 0 1 0 1 0 1 0 1 0 1 0 1 0 1 0 1 0 1 0 1 0 1 0 1 0 1 0 1 0 1 0 1 0 1 0 1 0 1 0 1 0 1 0 1 0 1 0 1 0 1 0 1 0 1 0 1 0 1 0 1 0 1 0 1 0 1 0 1 0 1 0 1 0 1 0 1 0 1 0 1 0 1 0 1 0 1 0 1 0 1 0 1 0 1 0 1 0 1 0 1 0 1 0 1 0 1 0 1 0 1 0 1 0 1 0 1 0 1 0 1 0 1 0 1 0 1 0 1 0 1 0 1 0 1 0 1 0 1 0 1 0 1 0 1 0V480z"/>
<path fill="url(#g94)" transform="translate(459) scale(1.5117 1)" d="M-88 480V480l 1 0 1 0 1-6.1 1 0 1 6.1 1 0 1 0 1 0 1 0 1 0 1 0 1 0 1 0 1 0 1 0 1 0 1 0 1 0 1 0 1 0 1 0 1 0 1 0 1 0 1 0 1 0 1 0 1 0 1 0 1 0 1 0 1 0 1 0 1 0 1 0 1 0 1 0 1 0 1 0 1 0 1 0 1 0 1 0 1 0 1 0 1 0 1 0 1 0 1 0 1 0 1 0 1 0 1 0 1 0 1 0 1 0 1 0 1 0 1 0 1 0 1 0 1 0 1 0 1 0 1 0 1 0 1 0 1 0 1 0 1 0 1 0 1 0 1 0 1 0 1 0 1 0 1 0 1 0 1 0 1 0 1 0 1 0 1 0 1 0 1 0 1 0 1 0 1 0 1 0 1 0 1 0 1 0 1 0 1 0 1 0 1 0 1 0 1 0 1 0 1 0 1 0 1 0 1 0 1 0 1 0 1 0 1 0 1 0 1 0 1 0 1 0 1 0 1 0 1 0 1 0 1 0 1 0 1 0 1 0 1 0 1 0 1 0 1 0 1 0 1 0 1 0 1 0 1 0 1 0 1 0 1 0 1 0 1 0 1 0 1 0 1 0 1 0 1 0 1 0 1 0 1 0 1 0 1 0 1 0 1 0 1 0 1 0 1 0 1 0 1 0 1 0 1 0 1 0 1 0 1 0 1 0 1 0 1 0 1 0 1 0 1 0 1 0 1 0 1 0 1 0 1 0 1 0 1 0 1 0 1 0 1 0 1 0 1 0 1 0 1 0 1 0 1 0 1 0V480z"/>
<path fill="url(#g95)" transform="translate(459) scale(1.5213 1)" d="M-88 480V480l 1 0 1 0 1-3.7 1 .3 1 3.4 1 0 1 0 1 0 1 0 1 0 1 0 1 0 1 0 1 0 1 0 1 0 1 0 1 0 1 0 1 0 1 0 1 0 1 0 1 0 1 0 1 0 1 0 1 0 1 0 1 0 1 0 1 0 1 0 1 0 1 0 1 0 1 0 1 0 1 0 1 0 1 0 1 0 1 0 1 0 1 0 1 0 1 0 1 0 1 0 1 0 1 0 1 0 1 0 1 0 1 0 1 0 1 0 1 0 1 0 1 0 1 0 1 0 1 0 1 0 1 0 1 0 1 0 1 0 1 0 1 0 1 0 1 0 1 0 1 0 1 0 1 0 1 0 1 0 1 0 1 0 1 0 1 0 1 0 1 0 1 0 1 0 1 0 1 0 1 0 1 0 1 0 1 0 1 0 1 0 1 0 1 0 1 0 1 0 1 0 1 0 1 0 1 0 1 0 1 0 1 0 1 0 1 0 1 0 1 0 1 0 1 0 1 0 1 0 1 0 1 0 1 0 1 0 1 0 1 0 1 0 1 0 1 0 1 0 1 0 1 0 1 0 1 0 1 0 1 0 1 0 1 0 1 0 1 0 1 0 1 0 1 0 1 0 1 0 1 0 1 0 1 0 1 0 1 0 1 0 1 0 1 0 1 0 1 0 1 0 1 0 1 0 1 0 1 0 1 0 1 0 1 0 1 0 1 0 1 0 1 0 1 0 1 0 1 0 1 0 1 0 1 0 1 0 1 0 1 0 1 0 1 0 1 0 1 0 1 0 1 0 1 0 1 0 1 0V480z"/>
<path fill="url(#g96)" transform="translate(459) scale(1.5309 1)" d="M-88 480V480l 1 0 1 0 1-2.6 1-.4 1 3 1 0 1 0 1 0 1 0 1 0 1 0 1 0 1 0 1 0 1 0 1 0 1 0 1 0 1 0 1 0 1 0 1 0 1 0 1 0 1 0 1 0 1 0 1 0 1 0 1 0 1 0 1 0 1 0 1 0 1 0 1 0 1 0 1 0 1 0 1 0 1 0 1 0 1 0 1 0 1 0 1 0 1 0 1 0 1 0 1 0 1 0 1 0 1 0 1 0 1 0 1 0 1 0 1 0 1 0 1 0 1 0 1 0 1 0 1 0 1 0 1 0 1 0 1 0 1 0 1 0 1 0 1 0 1 0 1 0 1 0 1 0 1 0 1 0 1 0 1 0 1 0 1 0 1 0 1 0 1 0 1 0 1 0 1 0 1 0 1 0 1 0 1 0 1 0 1 0 1 0 1 0 1 0 1 0 1 0 1 0 1 0 1 0 1 0 1 0 1 0 1 0 1 0 1 0 1 0 1 0 1 0 1 0 1 0 1 0 1 0 1 0 1 0 1 0 1 0 1 0 1 0 1 0 1 0 1 0 1 0 1 0 1 0 1 0 1 0 1 0 1 0 1 0 1 0 1 0 1 0 1 0 1 0 1 0 1 0 1 0 1 0 1 0 1 0 1 0 1 0 1 0 1 0 1 0 1 0 1 0 1 0 1 0 1 0 1 0 1 0 1 0 1 0 1 0 1 0 1 0 1 0 1 0 1 0 1 0 1 0 1 0 1 0 1 0 1 0 1 0 1 0 1 0 1 0 1 0 1 0 1 0 1 0 1 0V480z"/>
<path fill="url(#g97)" transform="translate(459) scale(1.5407 1)" d="M-88 480V480l 1 0 1-.3 1-3.5 1 3.2 1 .6 1 0 1 0 1 0 1 0 1 0 1 0 1 0 1 0 1 0 1 0 1 0 1 0 1 0 1 0 1 0 1 0 1 0 1 0 1 0 1 0 1 0 1 0 1 0 1 0 1 0 1 0 1 0 1 0 1 0 1 0 1 0 1 0 1 0 1 0 1 0 1 0 1 0 1 0 1 0 1 0 1 0 1 0 1 0 1 0 1 0 1 0 1 0 1 0 1 0 1 0 1 0 1 0 1 0 1 0 1 0 1 0 1 0 1 0 1 0 1 0 1 0 1 0 1 0 1 0 1 0 1 0 1 0 1 0 1 0 1 0 1 0 1 0 1 0 1 0 1 0 1 0 1 0 1 0 1 0 1 0 1 0 1 0 1 0 1 0 1 0 1 0 1 0 1 0 1 0 1 0 1 0 1 0 1 0 1 0 1 0 1 0 1 0 1 0 1 0 1 0 1 0 1 0 1 0 1 0 1 0 1 0 1 0 1 0 1 0 1 0 1 0 1 0 1 0 1 0 1 0 1 0 1 0 1 0 1 0 1 0 1 0 1 0 1 0 1 0 1 0 1 0 1 0 1 0 1 0 1 0 1 0 1 0 1 0 1 0 1 0 1 0 1 0 1 0 1 0 1 0 1 0 1 0 1 0 1 0 1 0 1 0 1 0 1 0 1 0 1 0 1 0 1 0 1 0 1 0 1 0 1 0 1 0 1 0 1 0 1 0 1 0 1 0 1 0 1 0 1 0 1 0 1 0 1 0 1 0 1 0 1 0 1 0 1 0V480z"/>
<path fill="url(#g98)" transform="translate(459) scale(1.5507 1)" d="M-88 480V480l 1 0 1-1.2 1-.2 1 1.4 1 0 1 0 1 0 1 0 1 0 1 0 1 0 1 0 1 0 1 0 1 0 1 0 1 0 1 0 1 0 1 0 1 0 1 0 1 0 1 0 1 0 1 0 1 0 1 0 1 0 1 0 1 0 1 0 1 0 1 0 1 0 1 0 1 0 1 0 1 0 1 0 1 0 1 0 1 0 1 0 1 0 1 0 1 0 1 0 1 0 1 0 1 0 1 0 1 0 1 0 1 0 1 0 1 0 1 0 1 0 1 0 1 0 1 0 1 0 1 0 1 0 1 0 1 0 1 0 1 0 1 0 1 0 1 0 1 0 1 0 1 0 1 0 1 0 1 0 1 0 1 0 1 0 1 0 1 0 1 0 1 0 1 0 1 0 1 0 1 0 1 0 1 0 1 0 1 0 1 0 1 0 1 0 1 0 1 0 1 0 1 0 1 0 1 0 1 0 1 0 1 0 1 0 1 0 1 0 1 0 1 0 1 0 1 0 1 0 1 0 1 0 1 0 1 0 1 0 1 0 1 0 1 0 1 0 1 0 1 0 1 0 1 0 1 0 1 0 1 0 1 0 1 0 1 0 1 0 1 0 1 0 1 0 1 0 1 0 1 0 1 0 1 0 1 0 1 0 1 0 1 0 1 0 1 0 1 0 1 0 1 0 1 0 1 0 1 0 1 0 1 0 1 0 1 0 1 0 1 0 1 0 1 0 1 0 1 0 1 0 1 0 1 0 1 0 1 0 1 0 1 0 1 0 1 0 1 0 1 0 1 0 1 0 1 0 1 0V480z"/>
<path fill="url(#g99)" transform="translate(459) scale(1.5608 1)" d="M-88 480V480l 1 0 1 0 1 0 1 0 1 0 1 0 1 0 1 0 1 0 1 0 1 0 1 0 1 0 1 0 1 0 1 0 1 0 1 0 1 0 1 0 1 0 1 0 1 0 1 0 1 0 1 0 1 0 1 0 1 0 1 0 1 0 1 0 1 0 1 0 1 0 1 0 1 0 1 0 1 0 1 0 1 0 1 0 1 0 1 0 1 0 1 0 1 0 1 0 1 0 1 0 1 0 1 0 1 0 1 0 1 0 1 0 1 0 1 0 1 0 1 0 1 0 1 0 1 0 1 0 1 0 1 0 1 0 1 0 1 0 1 0 1 0 1 0 1 0 1 0 1 0 1 0 1 0 1 0 1 0 1 0 1 0 1 0 1 0 1 0 1 0 1 0 1 0 1 0 1 0 1 0 1 0 1 0 1 0 1 0 1 0 1 0 1 0 1 0 1 0 1 0 1 0 1 0 1 0 1 0 1 0 1 0 1 0 1 0 1 0 1 0 1 0 1 0 1 0 1 0 1 0 1 0 1 0 1 0 1 0 1 0 1 0 1 0 1 0 1 0 1 0 1 0 1 0 1 0 1 0 1 0 1 0 1 0 1 0 1 0 1 0 1 0 1 0 1 0 1 0 1 0 1 0 1 0 1 0 1 0 1 0 1 0 1 0 1 0 1 0 1 0 1 0 1 0 1 0 1 0 1 0 1 0 1 0 1 0 1 0 1 0 1 0 1 0 1 0 1 0 1 0 1 0 1 0 1 0 1 0 1 0 1 0 1 0 1 0 1 0 1 0 1 0 1 0 1 0V480z"/>
<path fill="url(#g100)" transform="translate(459) scale(1.5710 1)" d="M-88 480V480l 1 0 1-5.7 1 5.7 1 0 1 0 1 0 1 0 1 0 1 0 1 0 1 0 1 0 1 0 1 0 1 0 1 0 1 0 1 0 1 0 1 0 1 0 1 0 1 0 1 0 1 0 1 0 1 0 1 0 1 0 1 0 1 0 1 0 1 0 1 0 1 0 1 0 1 0 1 0 1 0 1 0 1 0 1 0 1 0 1 0 1 0 1 0 1 0 1 0 1 0 1 0 1 0 1 0 1 0 1 0 1 0 1 0 1 0 1 0 1 0 1 0 1 0 1 0 1 0 1 0 1 0 1 0 1 0 1 0 1 0 1 0 1 0 1 0 1 0 1 0 1 0 1 0 1 0 1 0 1 0 1 0 1 0 1 0 1 0 1 0 1 0 1 0 1 0 1 0 1 0 1 0 1 0 1 0 1 0 1 0 1 0 1 0 1 0 1 0 1 0 1 0 1 0 1 0 1 0 1 0 1 0 1 0 1 0 1 0 1 0 1 0 1 0 1 0 1 0 1 0 1 0 1 0 1 0 1 0 1 0 1 0 1 0 1 0 1 0 1 0 1 0 1 0 1 0 1 0 1 0 1 0 1 0 1 0 1 0 1 0 1 0 1 0 1 0 1 0 1 0 1 0 1 0 1 0 1 0 1 0 1 0 1 0 1 0 1 0 1 0 1 0 1 0 1 0 1 0 1 0 1 0 1 0 1 0 1 0 1 0 1 0 1 0 1 0 1 0 1 0 1 0 1 0 1 0 1 0 1 0 1 0 1 0 1 0 1 0 1 0 1 0 1 0 1 0 1 0V480z"/>
<path fill="url(#g101)" transform="translate(459) scale(1.5814 1)" d="M-88 480V480l 1 0 1-1.2 1 1.2 1 0 1 0 1 0 1 0 1 0 1 0 1 0 1 0 1 0 1 0 1 0 1 0 1 0 1 0 1 0 1 0 1 0 1 0 1 0 1 0 1 0 1 0 1 0 1 0 1 0 1 0 1 0 1 0 1 0 1 0 1 0 1 0 1 0 1 0 1 0 1 0 1 0 1 0 1 0 1 0 1 0 1 0 1 0 1 0 1 0 1 0 1 0 1 0 1 0 1 0 1 0 1 0 1 0 1 0 1 0 1 0 1 0 1 0 1 0 1 0 1 0 1 0 1 0 1 0 1 0 1 0 1 0 1 0 1 0 1 0 1 0 1 0 1 0 1 0 1 0 1 0 1 0 1 0 1 0 1 0 1 0 1 0 1 0 1 0 1 0 1 0 1 0 1 0 1 0 1 0 1 0 1 0 1 0 1 0 1 0 1 0 1 0 1 0 1 0 1 0 1 0 1 0 1 0 1 0 1 0 1 0 1 0 1 0 1 0 1 0 1 0 1 0 1 0 1 0 1 0 1 0 1 0 1 0 1 0 1 0 1 0 1 0 1 0 1 0 1 0 1 0 1 0 1 0 1 0 1 0 1 0 1 0 1 0 1 0 1 0 1 0 1 0 1 0 1 0 1 0 1 0 1 0 1 0 1 0 1 0 1 0 1 0 1 0 1 0 1 0 1 0 1 0 1 0 1 0 1 0 1 0 1 0 1 0 1 0 1 0 1 0 1 0 1 0 1 0 1 0 1 0 1 0 1 0 1 0 1 0 1 0 1 0 1 0 1 0 1 0V480z"/>
<path fill="url(#g102)" transform="translate(459) scale(1.5920 1)" d="M-88 480V480l 1 0 1-1.8 1 1.8 1 0 1 0 1 0 1 0 1 0 1 0 1 0 1 0 1 0 1 0 1 0 1 0 1 0 1 0 1 0 1 0 1 0 1 0 1 0 1 0 1 0 1 0 1 0 1 0 1 0 1 0 1 0 1 0 1 0 1 0 1 0 1 0 1 0 1 0 1 0 1 0 1 0 1 0 1 0 1 0 1 0 1 0 1 0 1 0 1 0 1 0 1 0 1 0 1 0 1 0 1 0 1 0 1 0 1 0 1 0 1 0 1 0 1 0 1 0 1 0 1 0 1 0 1 0 1 0 1 0 1 0 1 0 1 0 1 0 1 0 1 0 1 0 1 0 1 0 1 0 1 0 1 0 1 0 1 0 1 0 1 0 1 0 1 0 1 0 1 0 1 0 1 0 1 0 1 0 1 0 1 0 1 0 1 0 1 0 1 0 1 0 1 0 1 0 1 0 1 0 1 0 1 0 1 0 1 0 1 0 1 0 1 0 1 0 1 0 1 0 1 0 1 0 1 0 1 0 1 0 1 0 1 0 1 0 1 0 1 0 1 0 1 0 1 0 1 0 1 0 1 0 1 0 1 0 1 0 1 0 1 0 1 0 1 0 1 0 1 0 1 0 1 0 1 0 1 0 1 0 1 0 1 0 1 0 1 0 1 0 1 0 1 0 1 0 1 0 1 0 1 0 1 0 1 0 1 0 1 0 1 0 1 0 1 0 1 0 1 0 1 0 1 0 1 0 1 0 1 0 1 0 1 0 1 0 1 0 1 0 1 0 1 0 1 0 1 0 1 0V480z"/>
<path fill="url(#g103)" transform="translate(459) scale(1.6027 1)" d="M-88 480V480l 1 0 1-.1 1 .1 1 0 1 0 1 0 1 0 1 0 1 0 1 0 1 0 1 0 1 0 1 0 1 0 1 0 1 0 1 0 1 0 1 0 1 0 1 0 1 0 1 0 1 0 1 0 1 0 1 0 1 0 1 0 1 0 1 0 1 0 1 0 1 0 1 0 1 0 1 0 1 0 1 0 1 0 1 0 1 0 1 0 1 0 1 0 1 0 1 0 1 0 1 0 1 0 1 0 1 0 1 0 1 0 1 0 1 0 1 0 1 0 1 0 1 0 1 0 1 0 1 0 1 0 1 0 1 0 1 0 1 0 1 0 1 0 1 0 1 0 1 0 1 0 1 0 1 0 1 0 1 0 1 0 1 0 1 0 1 0 1 0 1 0 1 0 1 0 1 0 1 0 1 0 1 0 1 0 1 0 1 0 1 0 1 0 1 0 1 0 1 0 1 0 1 0 1 0 1 0 1 0 1 0 1 0 1 0 1 0 1 0 1 0 1 0 1 0 1 0 1 0 1 0 1 0 1 0 1 0 1 0 1 0 1 0 1 0 1 0 1 0 1 0 1 0 1 0 1 0 1 0 1 0 1 0 1 0 1 0 1 0 1 0 1 0 1 0 1 0 1 0 1 0 1 0 1 0 1 0 1 0 1 0 1 0 1 0 1 0 1 0 1 0 1 0 1 0 1 0 1 0 1 0 1 0 1 0 1 0 1 0 1 0 1 0 1 0 1 0 1 0 1 0 1 0 1 0 1 0 1 0 1 0 1 0 1 0 1 0 1 0 1 0 1 0 1 0 1 0V480z"/>
<path fill="url(#g104)" transform="translate(459) scale(1.6135 1)" d="M-88 480V480l 1 0 1 0 1 0 1 0 1 0 1 0 1 0 1 0 1 0 1 0 1 0 1 0 1 0 1 0 1 0 1 0 1 0 1 0 1 0 1 0 1 0 1 0 1 0 1 0 1 0 1 0 1 0 1 0 1 0 1 0 1 0 1 0 1 0 1 0 1 0 1 0 1 0 1 0 1 0 1 0 1 0 1 0 1 0 1 0 1 0 1 0 1 0 1 0 1 0 1 0 1 0 1 0 1 0 1 0 1 0 1 0 1 0 1 0 1 0 1 0 1 0 1 0 1 0 1 0 1 0 1 0 1 0 1 0 1 0 1 0 1 0 1 0 1 0 1 0 1 0 1 0 1 0 1 0 1 0 1 0 1 0 1 0 1 0 1 0 1 0 1 0 1 0 1 0 1 0 1 0 1 0 1 0 1 0 1 0 1 0 1 0 1 0 1 0 1 0 1 0 1 0 1 0 1 0 1 0 1 0 1 0 1 0 1 0 1 0 1 0 1 0 1 0 1 0 1 0 1 0 1 0 1 0 1 0 1 0 1 0 1 0 1 0 1 0 1 0 1 0 1 0 1 0 1 0 1 0 1 0 1 0 1 0 1 0 1 0 1 0 1 0 1 0 1 0 1 0 1 0 1 0 1 0 1 0 1 0 1 0 1 0 1 0 1 0 1 0 1 0 1 0 1 0 1 0 1 0 1 0 1 0 1 0 1 0 1 0 1 0 1 0 1 0 1 0 1 0 1 0 1 0 1 0 1 0 1 0 1 0 1 0 1 0 1 0 1 0 1 0 1 0 1 0 1 0V480z"/>
</g>
<defs><linearGradient id="wb" gradientUnits="userSpaceOnUse" x1="0" y1="343" x2="0" y2="458"><stop offset="0" stop-color="#f4e418" stop-opacity="0.8"/><stop offset="0.2" stop-color="#d8d028" stop-opacity="0.75"/><stop offset="0.38" stop-color="#b0aa3a" stop-opacity="0.7"/><stop offset="0.55" stop-color="#8c8a4c" stop-opacity="0.62"/><stop offset="0.72" stop-color="#6a6c5c" stop-opacity="0.5"/><stop offset="0.86" stop-color="#48527a" stop-opacity="0.5"/><stop offset="1" stop-color="#203090" stop-opacity="0"/></linearGradient><filter id="bl" x="-30%" y="-5%" width="160%" height="110%"><feGaussianBlur stdDeviation="0.7 0.3"/></filter></defs><path filter="url(#bl)" fill="url(#wb)" d="M546.5 344L551.7 378L556 407L560 430L564 458L571 458L567.6 430L563 407L559 378L554.8 351L550 345z"/>
<path d="M310.8 351L325 474" stroke="#ffffff" stroke-width="2" fill="none"/>
<defs><linearGradient id="cb" gradientUnits="userSpaceOnUse" x1="0" y1="352" x2="0" y2="472">
<stop offset="0.0000" stop-color="#e018e0"/>
<stop offset="0.0833" stop-color="#ff10a0"/>
<stop offset="0.2667" stop-color="#ff1010"/>
<stop offset="0.4000" stop-color="#ff9000"/>
<stop offset="0.5417" stop-color="#ffff20"/>
<stop offset="0.6583" stop-color="#50ff50"/>
<stop offset="0.7750" stop-color="#20e8f0"/>
<stop offset="0.8833" stop-color="#20a0ff"/>
<stop offset="1.0000" stop-color="#1848ff"/>
</linearGradient></defs>
<path d="M303.4 352.5H309.8L324.3 475H317.9z" fill="url(#cb)"/>
<g font-family="Liberation Sans, sans-serif" font-weight="bold" font-size="10.5px" fill="#ffffff" text-anchor="end">
<text x="301.2" y="355.7">70</text>
<text x="305" y="371.8">dB</text>
<text x="305.8" y="387.5">60</text>
<text x="310.2" y="419.5">50</text>
<text x="314.2" y="448.2">40</text>
<text x="318" y="475.8">30</text>
</g>
</svg>
<!-- group boxes -->
<div class="grp" style="left:912.4px;top:18px;width:75.5px;height:165px;border-bottom:none;border-radius:3px 3px 0 0"></div>
<div class="gl" style="left:919px;top:12px;width:45px;height:12px"></div>
<div class="t" style="left:920.7px;top:13px">Measure</div>

<div class="grp" style="left:912.4px;top:186px;width:75.5px;height:211px;border-bottom:none;border-radius:3px 3px 0 0"></div>
<div class="gl" style="left:919px;top:180px;width:32px;height:12px"></div>
<div class="t" style="left:920.7px;top:181px">Show</div>

<div class="grp" style="left:912.4px;top:400px;width:75.5px;height:90px"></div>
<div class="gl" style="left:919px;top:394px;width:40px;height:12px"></div>
<div class="t" style="left:920.7px;top:394.5px">Overlay</div>

<!-- Measure button -->
<div class="btn" style="left:922px;top:33px;width:57px;height:22px;line-height:20px"><span>Measure</span></div>

<!-- slider -->
<svg width="103" height="110" viewBox="900 55 103 110" style="position:absolute;left:900px;top:55px">
<defs><linearGradient id="thumb" x1="0" y1="0" x2="0" y2="1"><stop offset="0" stop-color="#f6f6f6"/><stop offset="0.5" stop-color="#e4e4e4"/><stop offset="1" stop-color="#cfcfcf"/></linearGradient></defs>
<path d="M921.7 71.4h3.2M921.7 83.9h3.2M921.7 96.4h3.2M921.7 108.9h3.2M921.7 121.4h3.2M921.7 133.9h3.2M921.7 146.4h3.2M948.6 71.4h3.4M948.6 83.9h3.4M948.6 96.4h3.4M948.6 108.9h3.4M948.6 121.4h3.4M948.6 133.9h3.4M948.6 146.4h3.4" stroke="#c4c4c4" stroke-width="1"/>
<rect x="935.3" y="65.5" width="2.2" height="85.5" rx="0.8" fill="#f2f3f3" stroke="#b0b2b4" stroke-width="0.8"/>
<rect x="926.5" y="91.5" width="20" height="9" rx="1.8" fill="url(#thumb)" stroke="#8a8d90" stroke-width="1"/>
<rect x="968.8" y="63.2" width="12.2" height="87.8" fill="#000"/>
<g font-family="Liberation Sans, sans-serif" font-weight="bold" font-size="10.5px">
<text x="960.6" y="66.9" fill="#e01020" stroke="#e01020" stroke-width="0.3">H</text>
<text x="959.8" y="112" fill="#10c820" stroke="#10c820" stroke-width="0.3">G</text>
<text x="961.3" y="156.6" fill="#1010b0" stroke="#1010b0" stroke-width="0.3">L</text>
</g>
</svg>
<div class="t" style="left:919.5px;top:163px">Output Level</div>
<div class="t" style="left:919.5px;top:197.5px">Scale range:</div>

<!-- dropdown 50 dB -->
<div class="btn l" style="left:919px;top:214.5px;width:63px;height:20.5px;line-height:18.5px;text-align:left;padding-left:6px"><span>50 dB</span></div>
<svg width="10" height="6" viewBox="0 0 10 6" style="position:absolute;left:969.5px;top:222.7px"><path d="M0.5 0.5h7.5L4.25 4.5z" fill="#000"/></svg>

<div class="btn sel" style="left:922px;top:242.2px;width:58px;height:18px;line-height:16px"><span>Anechoic</span></div>
<div class="btn" style="left:922px;top:264.1px;width:58px;height:17.8px;line-height:15.5px"><span>Ambient</span></div>
<div class="btn" style="left:922px;top:285.5px;width:58px;height:17.7px;line-height:15.5px"><span>Raw</span></div>
<div class="btn sel" style="left:922px;top:319px;width:58px;height:18px;line-height:16px"><span>RT60</span></div>

<div class="t" style="left:919.5px;top:351.5px">Waterfall:</div>
<div class="btn l" style="left:919px;top:368.3px;width:63px;height:20.5px;line-height:18.5px;text-align:left;padding-left:6px"><span>3D [F]</span></div>
<svg width="10" height="6" viewBox="0 0 10 6" style="position:absolute;left:969.5px;top:376.5px"><path d="M0.5 0.5h7.5L4.25 4.5z" fill="#000"/></svg>

<div class="btn" style="left:919px;top:413px;width:18px;height:18px;line-height:16px"><span>1</span></div>
<div class="btn dis" style="left:941px;top:413px;width:43px;height:18px;line-height:16px"><span>Show 1</span></div>
<div class="btn" style="left:919px;top:436px;width:18px;height:18px;line-height:16px"><span>2</span></div>
<div class="btn dis" style="left:941px;top:436px;width:43px;height:18px;line-height:16px"><span>Show 2</span></div>
<div class="btn" style="left:919px;top:459px;width:18px;height:18px;line-height:16px"><span>3</span></div>
<div class="btn dis" style="left:941px;top:459px;width:43px;height:18px;line-height:16px"><span>Show 3</span></div>

</div></body></html>
